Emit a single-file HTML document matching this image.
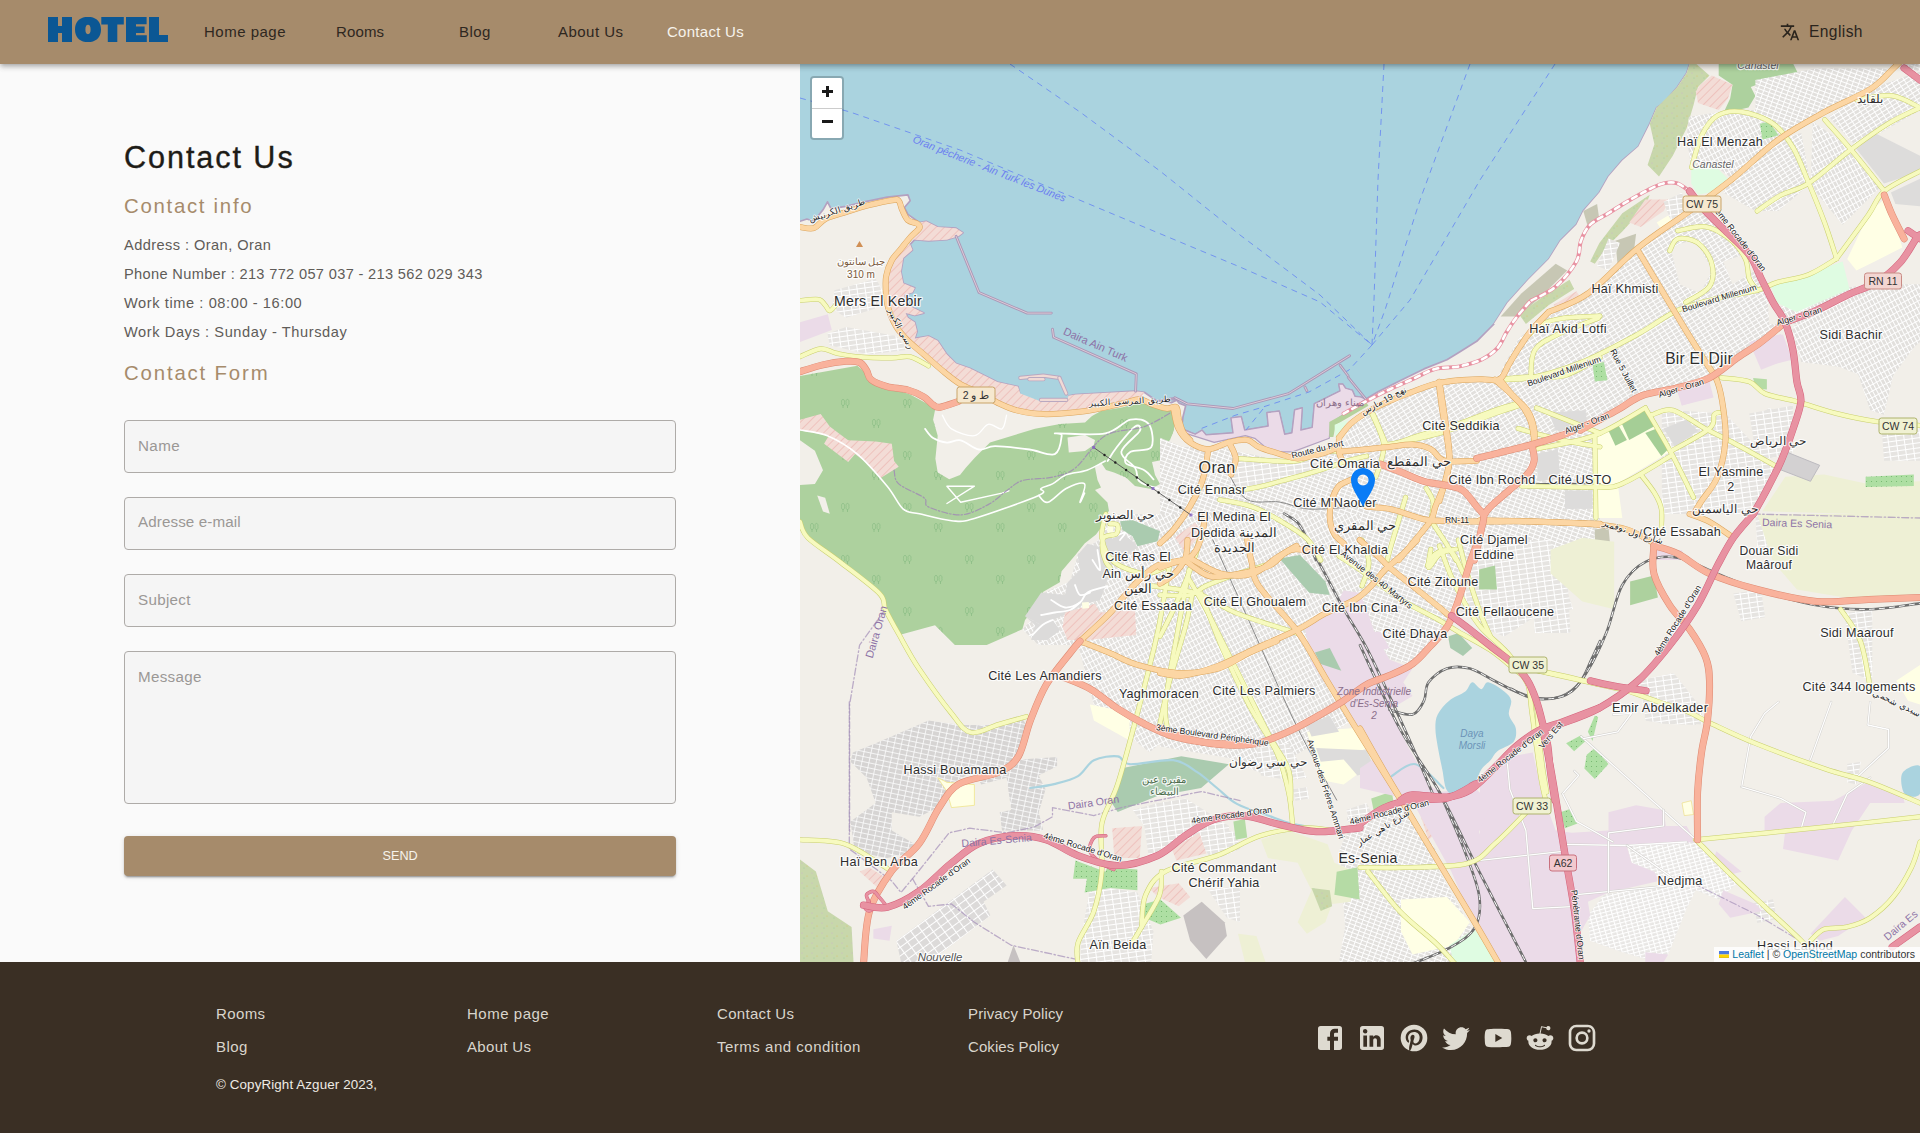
<!DOCTYPE html>
<html lang="en"><head><meta charset="utf-8"><title>Contact Us</title>
<style>
*{box-sizing:border-box;margin:0;padding:0}
html,body{width:1920px;height:1133px;overflow:hidden;background:#fafafa;font-family:"Liberation Sans",sans-serif;}
.abs{position:absolute;white-space:pre;line-height:1;}
#hdr{position:absolute;left:0;top:0;width:1920px;height:64px;background:#a68b6b;z-index:10;box-shadow:0 2px 4px -1px rgba(0,0,0,.2),0 4px 5px 0 rgba(0,0,0,.12),0 1px 8px 0 rgba(0,0,0,.1);}
#left{position:absolute;left:0;top:64px;width:800px;height:898px;background:#fafafa;}
#map{position:absolute;left:800px;top:64px;width:1120px;height:898px;background:#f2efe9;overflow:hidden;}
#ftr{position:absolute;left:0;top:962px;width:1920px;height:171px;background:#3a2f24;}
.nav{font-size:15px;color:#2e271f;top:24.100px}
.t{font-size:14.6px;color:#5f5c58;left:124px}
.h2{font-size:20.4px;color:#a68b6b;left:124px}
.fld{position:absolute;left:124px;width:552px;height:53px;border:1px solid #aeaba8;border-radius:4px;background:#f5f5f5}
.ph{font-size:15.2px;color:#9b9895;left:138px}
.fl{font-size:15px;color:#d9d5cc}
.ic{position:absolute;top:1022px;width:32px;height:32px;fill:#dedad0}
</style></head><body>
<div id="left"></div>
<div class="abs" style="left:124px;top:141.900px;font-size:30.600px;color:#1e1c17;letter-spacing:1.93px;-webkit-text-stroke:.35px #1e1c17">Contact Us</div>
<div class="abs h2" style="top:195.600px;letter-spacing:1.71px">Contact info</div>
<div class="abs t" style="top:238.400px;letter-spacing:.43px">Address : Oran, Oran</div>
<div class="abs t" style="top:267.400px;letter-spacing:.34px">Phone Number : 213 772 057 037 - 213 562 029 343</div>
<div class="abs t" style="top:296.400px;letter-spacing:.59px">Work time : 08:00 - 16:00</div>
<div class="abs t" style="top:325.400px;letter-spacing:.59px">Work Days : Sunday - Thursday</div>
<div class="abs h2" style="top:363.100px;letter-spacing:1.83px">Contact Form</div>
<div class="fld" style="top:420px"></div><div class="abs ph" style="top:438.100px;letter-spacing:.39px">Name</div>
<div class="fld" style="top:497px"></div><div class="abs ph" style="top:514.300px;letter-spacing:.1px">Adresse e-mail</div>
<div class="fld" style="top:574px"></div><div class="abs ph" style="top:592.300px;letter-spacing:.3px">Subject</div>
<div class="fld" style="top:651px;height:153px"></div><div class="abs ph" style="top:669.400px;letter-spacing:.3px">Message</div>
<div style="position:absolute;left:124px;top:836px;width:552px;height:40px;background:#a68b6b;border-radius:4px;box-shadow:0 3px 1px -2px rgba(0,0,0,.2),0 2px 2px 0 rgba(0,0,0,.14),0 1px 5px 0 rgba(0,0,0,.12)"></div>
<div class="abs" style="left:382.500px;top:850.250px;font-size:12.700px;color:#f7f3ec;letter-spacing:0px">SEND</div>
<div id="map">
<svg style="position:absolute;left:0;top:0" width="1120" height="898" viewBox="800 64 1120 898" font-family="Liberation Sans, sans-serif">
<defs>
<pattern id="u1" width="5.800" height="3.900" patternUnits="userSpaceOnUse" patternTransform="rotate(20)"><rect width="5.800" height="3.900" fill="#e2e0dd"/><path d="M0 0H5.800M0 0V3.900" stroke="#fff" stroke-width="1.900"/></pattern>
<pattern id="u2" width="6" height="3.900" patternUnits="userSpaceOnUse" patternTransform="rotate(-32)"><rect width="6" height="3.900" fill="#e2e0dd"/><path d="M0 0H6M0 0V3.900" stroke="#fff" stroke-width="1.900"/></pattern>
<pattern id="u3" width="5.800" height="3.900" patternUnits="userSpaceOnUse" patternTransform="rotate(62)"><rect width="5.800" height="3.900" fill="#e2e0dd"/><path d="M0 0H5.800M0 0V3.900" stroke="#fff" stroke-width="1.900"/></pattern>
<pattern id="u4" width="8" height="5" patternUnits="userSpaceOnUse" patternTransform="rotate(-8)"><rect width="8" height="5" fill="#e6e4e1"/><path d="M0 0H8M0 0V5" stroke="#fff" stroke-width="2"/></pattern>
<pattern id="u5" width="7" height="5" patternUnits="userSpaceOnUse" patternTransform="rotate(12)"><rect width="7" height="5" fill="#d6d4d3"/><path d="M0 0H7M0 0V5" stroke="#fff" stroke-width="1.500"/></pattern>
<pattern id="u6" width="9" height="7" patternUnits="userSpaceOnUse" patternTransform="rotate(-36)"><rect width="9" height="7" fill="#dcdad9"/><path d="M0 0H9M0 0V7" stroke="#fff" stroke-width="2.200"/></pattern>
<pattern id="or" width="5" height="5" patternUnits="userSpaceOnUse"><rect width="5" height="5" fill="#aedfa3"/><circle cx="1.500" cy="1.500" r=".55" fill="#6fb56a"/></pattern>
<pattern id="u7" width="5.500" height="3.600" patternUnits="userSpaceOnUse" patternTransform="rotate(-15)"><rect width="5.500" height="3.600" fill="#e8e6e4"/><path d="M0 0H5.500M0 0V3.600" stroke="#fff" stroke-width="2.200"/></pattern>
<pattern id="mil" width="6" height="6" patternUnits="userSpaceOnUse" patternTransform="rotate(45)"><rect width="6" height="6" fill="#f3dcd6"/><path d="M0 0V6" stroke="#eaa9a4" stroke-width="1"/></pattern>
<pattern id="tr" width="62" height="52" patternUnits="userSpaceOnUse"><g fill="none" stroke="#8fbe87" stroke-width="0.9"><path d="M6 12v-3M4.600 6.500a1.500 2.300 0 1 0 2.800 0a1.500 2.300 0 1 0 -2.800 0M10.500 12v-3M9.100 6.500a1.500 2.300 0 1 0 2.800 0a1.500 2.300 0 1 0 -2.800 0"/><path transform="translate(14 17)" d="M23 27v-3M21.600 21.500a1.500 2.300 0 1 0 2.800 0a1.500 2.300 0 1 0 -2.800 0M27.500 27v-3M26.100 21.500a1.500 2.300 0 1 0 2.800 0a1.500 2.300 0 1 0 -2.800 0"/></g></pattern>
<pattern id="sc" width="10" height="10" patternUnits="userSpaceOnUse"><rect width="10" height="10" fill="#c8d7ab"/><circle cx="2" cy="3" r=".6" fill="#c9b8c8"/><circle cx="7" cy="6" r=".6" fill="#d9c76a"/><circle cx="4" cy="8" r=".6" fill="#9ccf9c"/></pattern>
</defs>
<rect x="800" y="64" width="1120" height="898" fill="#f2efe9"/>
<path d="M794.0 58.0 L794.0 221.3 L800.0 221.3 L806.9 219.0 L813.8 221.3 L823.0 209.8 L827.5 201.8 L831.0 208.7 L845.9 206.4 L864.3 201.8 L887.2 197.2 L907.9 194.9 L910.2 200.7 L904.4 207.5 L907.9 214.4 L919.4 222.5 L926.2 221.3 L937.7 227.1 L956.1 228.2 L963.0 232.8 L958.4 236.2 L946.9 239.7 L928.5 240.8 L914.8 239.7 L910.2 244.3 L912.5 250.0 L903.3 258.0 L901.0 271.8 L903.3 283.3 L914.8 287.9 L912.5 292.5 L904.4 294.8 L905.6 303.9 L923.9 313.1 L914.8 315.4 L905.6 313.1 L907.9 317.7 L914.8 322.3 L917.1 331.5 L914.8 338.4 L928.5 336.1 L937.7 340.7 L946.9 354.4 L956.1 363.6 L969.8 368.2 L985.9 376.2 L997.4 382.0 L1018.0 386.6 L1019.9 394.6 L1026.1 400.8 L1038.7 406.1 L1054.8 407.2 L1067.4 403.8 L1069.0 395.8 L1075.4 394.6 L1135.1 391.2 L1144.3 392.3 L1155.8 400.3 L1171.8 402.6 L1178.7 399.2 L1160.0 400.4 L1174.9 397.7 L1179.0 403.1 L1185.7 405.8 L1183.0 416.7 L1181.7 428.9 L1195.2 434.3 L1202.0 430.2 L1206.0 434.9 L1233.1 432.9 L1231.1 418.0 L1241.2 416.7 L1244.6 430.2 L1268.3 426.1 L1267.0 412.6 L1279.2 411.2 L1284.6 434.3 L1292.0 432.9 L1294.7 409.9 L1302.2 407.9 L1300.8 430.2 L1312.3 427.5 L1314.4 403.8 L1340.1 390.9 L1338.8 384.2 L1342.8 384.2 L1345.5 388.2 L1352.3 390.3 L1355.0 396.4 L1360.4 397.0 L1365.8 399.1 L1378.0 391.8 L1401.0 380.3 L1424.0 368.9 L1446.9 359.7 L1458.4 352.8 L1476.7 341.3 L1490.5 327.5 L1493.8 324.1 L1507.5 302.7 L1528.2 279.8 L1548.9 259.1 L1560.3 240.7 L1576.4 224.7 L1583.3 210.9 L1599.4 192.5 L1608.5 176.5 L1622.3 160.4 L1638.4 146.6 L1649.8 123.7 L1656.7 107.6 L1663.6 103.0 L1677.4 87.0 L1686.6 73.2 L1691.2 59.4 L1694.0 58.0Z" fill="#aad3df" stroke="#b3a1c0" stroke-width="1.7" stroke-linejoin="round"/>
<path d="M1180.3 431.6 L1181.7 428.9 L1195.2 434.3 L1202.0 430.2 L1206.0 434.9 L1233.1 432.9 L1231.1 418.0 L1241.2 416.7 L1244.6 430.2 L1268.3 426.1 L1267.0 412.6 L1279.2 411.2 L1284.6 434.3 L1292.0 432.9 L1294.7 409.9 L1302.2 407.9 L1300.8 430.2 L1312.3 427.5 L1314.4 403.8 L1340.1 390.9 L1338.8 384.2 L1342.8 384.2 L1345.5 388.2 L1352.3 390.3 L1355.0 396.4 L1360.4 397.0 L1365.8 399.1 L1330.6 423.4 L1329.3 438.3 L1292.7 451.9 L1271.0 451.9 L1254.8 438.3 L1245.3 435.6 L1214.2 442.4Z" fill="#ebdbe8" stroke="#b3a1c0" stroke-width="1.2" stroke-linejoin="round"/>
<path d="M1329.3 422.1 L1365.8 401.8 L1368.5 405.8 L1336.0 424.8 L1333.3 437.0 L1329.3 437.0Z" fill="#b5d29c" />
<path d="M1334.7 424.8 L1348.2 419.4 L1340.1 435.6 L1334.7 437.0Z" fill="#dffce2" />
<path d="M1160.0 405.8 L1168.1 405.8 L1173.5 414.0 L1172.9 432.9 L1165.4 446.5 L1160.0 451.9Z" fill="#add19e" />
<path d="M919.4 222.5 L926.2 221.3 L937.7 227.1 L956.1 228.2 L963.0 232.8 L958.4 236.2 L946.9 239.7 L928.5 240.8 L914.8 239.7 L910.2 237.4 L919.4 228.2Z" fill="url(#mil)" />
<path d="M910.2 244.3 L912.5 250.0 L903.3 258.0 L901.0 271.8 L903.3 283.3 L914.8 287.9 L912.5 292.5 L904.4 294.8 L905.6 303.9 L923.9 313.1 L914.8 315.4 L905.6 313.1 L907.9 317.7 L914.8 322.3 L917.1 331.5 L914.8 338.4 L928.5 336.1 L937.7 340.7 L946.9 354.4 L956.1 363.6 L969.8 368.2 L985.9 376.2 L997.4 382.0 L1018.0 386.6 L1020.3 393.5 L1041.0 401.5 L1066.2 401.5 L1068.5 395.8 L1075.4 394.6 L1135.1 391.2 L1144.3 392.3 L1139.7 399.2 L1125.9 402.6 L1105.3 407.2 L1080.0 411.8 L1043.3 414.1 L1018.0 410.7 L999.7 403.8 L981.3 393.5 L960.7 384.3 L942.3 370.5 L923.9 354.4 L907.9 340.7 L896.4 326.9 L888.4 308.5 L886.1 294.8 L886.1 276.4 L891.8 260.3 L901.0 248.9Z" fill="url(#mil)" />
<path d="M800.0 376.0 L857.4 365.7 L866.6 373.8 L875.7 383.0 L910.2 394.4 L935.4 408.2 L933.1 419.7 L937.7 435.7 L935.4 458.7 L937.7 472.5 L949.2 479.3 L960.0 475.0 L966.0 467.5 L975.0 457.5 L990.0 442.5 L1035.0 428.8 L1060.0 424.0 L1085.0 422.5 L1092.0 416.0 L1101.0 411.0 L1122.0 407.5 L1135.0 404.0 L1147.5 403.0 L1160.0 409.0 L1172.5 408.8 L1175.0 415.0 L1174.0 430.0 L1170.0 440.0 L1160.0 450.0 L1162.0 460.0 L1152.0 462.0 L1155.0 475.0 L1160.0 484.0 L1151.0 489.0 L1135.0 486.0 L1126.0 477.5 L1114.0 472.5 L1106.0 470.0 L1101.0 462.5 L1095.0 467.5 L1097.5 480.0 L1101.0 487.5 L1095.0 490.0 L1107.5 502.5 L1109.0 511.0 L1100.0 520.0 L1103.0 525.0 L1096.0 534.4 L1084.6 543.6 L1075.4 555.0 L1061.6 571.2 L1059.4 582.6 L1043.3 591.8 L1038.7 603.3 L1025.0 620.0 L1022.4 629.2 L986.7 645.1 L954.9 645.1 L935.0 625.2 L899.3 635.1 L885.4 609.3 L879.4 593.4 L839.7 561.7 L807.9 537.8 L800.0 525.9 L800.0 520.7 L800.0 485.1 L814.9 483.9 L823.0 470.2 L814.9 450.7 L800.0 440.3Z" fill="#add19e"/>
<path d="M800.0 376.0 L857.4 365.7 L866.6 373.8 L875.7 383.0 L910.2 394.4 L935.4 408.2 L933.1 419.7 L937.7 435.7 L935.4 458.7 L937.7 472.5 L949.2 479.3 L960.0 475.0 L966.0 467.5 L975.0 457.5 L990.0 442.5 L1035.0 428.8 L1060.0 424.0 L1085.0 422.5 L1092.0 416.0 L1101.0 411.0 L1122.0 407.5 L1135.0 404.0 L1147.5 403.0 L1160.0 409.0 L1172.5 408.8 L1175.0 415.0 L1174.0 430.0 L1170.0 440.0 L1160.0 450.0 L1162.0 460.0 L1152.0 462.0 L1155.0 475.0 L1160.0 484.0 L1151.0 489.0 L1135.0 486.0 L1126.0 477.5 L1114.0 472.5 L1106.0 470.0 L1101.0 462.5 L1095.0 467.5 L1097.5 480.0 L1101.0 487.5 L1095.0 490.0 L1107.5 502.5 L1109.0 511.0 L1100.0 520.0 L1103.0 525.0 L1096.0 534.4 L1084.6 543.6 L1075.4 555.0 L1061.6 571.2 L1059.4 582.6 L1043.3 591.8 L1038.7 603.3 L1025.0 620.0 L1022.4 629.2 L986.7 645.1 L954.9 645.1 L935.0 625.2 L899.3 635.1 L885.4 609.3 L879.4 593.4 L839.7 561.7 L807.9 537.8 L800.0 525.9 L800.0 520.7 L800.0 485.1 L814.9 483.9 L823.0 470.2 L814.9 450.7 L800.0 440.3Z" fill="url(#tr)"/>
<path d="M800.0 419.7 L820.7 413.9 L829.8 426.6 L839.0 433.4 L848.2 440.3 L875.7 441.5 L891.8 443.8 L894.1 461.0 L898.7 466.7 L880.3 478.2 L864.3 461.0 L855.1 454.1 L848.2 462.1 L824.1 443.8 L828.7 435.7 L800.0 430.0Z" fill="url(#mil)" />
<path d="M1067.5 437.5 L1085.0 435.0 L1095.0 440.0 L1093.8 445.0 L1085.0 451.0 L1068.8 452.5Z" fill="#f2efe9" />
<path d="M800.0 430.0 C804.6 431.0 818.0 431.7 827.5 435.7 C837.1 439.8 847.4 445.7 857.4 454.1 C867.3 462.5 879.6 477.1 887.2 486.2 C894.9 495.4 897.9 504.6 903.3 509.2 C908.6 513.8 911.3 511.9 919.4 513.8 C927.4 515.7 942.3 519.9 951.5 520.7 C960.7 521.4 959.9 522.6 974.4 518.4 C989.0 514.2 1027.6 500.4 1038.7 495.4 C1049.8 490.4 1038.7 490.4 1041.0 488.5 C1043.3 486.6 1048.3 486.2 1052.5 483.9 C1056.7 481.6 1060.5 477.1 1066.2 474.8 C1072.0 472.5 1080.4 472.5 1086.9 470.2 C1093.4 467.9 1102.2 462.5 1105.3 461.0" fill="none" stroke="#fff" stroke-width="1.6" stroke-linecap="round" stroke-linejoin="round" />
<path d="M946.9 503.5 L974.4 486.2 L946.9 486.2 L960.7 502.3 L1002.0 493.1 L1008.9 490.8" fill="none" stroke="#fff" stroke-width="1.4" stroke-linecap="round" stroke-linejoin="round" />
<path d="M925.1 428.9 C926.4 430.4 929.5 435.7 933.1 438.0 C936.8 440.3 942.3 442.2 946.9 442.6 C951.5 443.0 955.3 439.2 960.7 440.3 C966.0 441.5 973.3 448.6 979.0 449.5 C984.8 450.5 986.7 446.1 995.1 446.1 C1003.5 446.1 1019.6 448.2 1029.5 449.5 C1039.5 450.9 1049.4 456.4 1054.8 454.1 C1060.1 451.8 1061.3 439.2 1061.7 435.7 C1062.0 432.3 1049.8 433.8 1057.1 433.4 C1064.3 433.1 1093.0 435.7 1105.3 433.4 C1117.5 431.2 1123.2 421.2 1130.5 419.7 C1137.8 418.1 1145.4 419.7 1148.9 424.3 C1152.3 428.9 1154.2 442.6 1151.2 447.2 C1148.1 451.8 1134.7 449.1 1130.5 451.8 C1126.3 454.5 1123.6 460.2 1125.9 463.3 C1128.2 466.3 1139.7 467.5 1144.3 470.2 C1148.9 472.8 1151.9 477.8 1153.5 479.4" fill="none" stroke="#fff" stroke-width="1.8" stroke-linecap="round" stroke-linejoin="round" />
<path d="M1107.6 461.0 C1109.1 458.7 1112.2 453.0 1116.7 447.2 C1121.3 441.5 1131.3 429.2 1135.1 426.6 C1138.9 423.9 1142.0 426.9 1139.7 431.2 C1137.4 435.4 1122.1 445.7 1121.3 451.8 C1120.6 457.9 1132.0 462.9 1135.1 467.9 C1138.2 472.8 1135.9 478.2 1139.7 481.6 C1143.5 485.1 1155.0 487.4 1158.1 488.5" fill="none" stroke="#fff" stroke-width="1.8" stroke-linecap="round" stroke-linejoin="round" />
<path d="M1038.7 495.4 C1040.2 496.6 1043.3 503.5 1047.9 502.3 C1052.5 501.2 1060.1 491.6 1066.2 488.5 C1072.4 485.5 1082.3 481.6 1084.6 483.9 C1086.9 486.2 1080.0 500.8 1080.0 502.3 C1080.0 503.8 1083.8 494.7 1084.6 493.1" fill="none" stroke="#fff" stroke-width="1.6" stroke-linecap="round" stroke-linejoin="round" />
<path d="M942.3 415.1 C943.8 417.4 946.1 425.4 951.5 428.9 C956.8 432.3 968.3 436.5 974.4 435.7 C980.6 435.0 983.6 425.4 988.2 424.3 C992.8 423.1 998.9 430.4 1002.0 428.9 C1005.0 427.3 1005.8 417.4 1006.6 415.1" fill="none" stroke="#fff" stroke-width="1.3" stroke-linecap="round" stroke-linejoin="round" />
<path d="M894.1 470.2 C894.9 472.5 893.7 479.4 898.7 483.9 C903.7 488.5 919.0 493.9 923.9 497.7 C928.9 501.5 922.4 504.0 928.5 506.9 C934.7 509.8 950.7 515.3 960.7 514.9 C970.6 514.5 980.6 508.6 988.2 504.6 C995.9 500.6 1000.8 494.8 1006.6 490.8 C1012.3 486.8 1015.0 482.8 1022.6 480.5 C1030.3 478.2 1043.7 479.2 1052.5 477.1 C1061.3 475.0 1066.6 474.8 1075.4 467.9 C1084.2 461.0 1093.8 442.6 1105.3 435.7 C1116.7 428.9 1132.4 431.0 1144.3 426.6 C1156.1 422.2 1171.1 412.2 1176.4 409.3" fill="none" stroke="#9f86b5" stroke-width="1.2" stroke-linecap="round" stroke-linejoin="round" stroke-dasharray="6 2 1.500 2" stroke-opacity=".8"/>
<path d="M817.2 495.4 L825.2 497.7 L829.8 513.8 L823.0 511.5Z" fill="#f2efe9" />
<path d="M800.0 859.5 L815.9 871.4 L827.8 911.2 L851.6 927.0 L853.6 964.0 L800.0 964.0Z" fill="url(#sc)" />
<path d="M1160.0 437.7 L1183.0 446.9 L1217.4 446.9 L1270.2 458.4 L1302.3 456.1 L1334.4 449.2 L1366.6 451.5 L1389.5 446.9 L1435.4 449.2 L1481.3 460.7 L1531.8 446.9 L1600.0 428.5 L1600.0 560.1 L1160.0 560.1Z" fill="url(#u1)" />
<path d="M1348.2 428.5 L1366.6 414.8 L1389.5 403.3 L1435.4 387.2 L1499.7 382.6 L1527.2 410.2 L1534.1 442.3 L1481.3 458.4 L1435.4 446.9 L1389.5 444.6 L1366.6 449.2 L1343.6 446.9Z" fill="url(#u3)" />
<path d="M1235.7 460.7 L1320.7 458.4 L1348.2 465.3 L1320.7 474.4 L1251.8 490.5 L1228.9 483.6Z" fill="url(#u4)" />
<path d="M827.5 333.8 L845.9 326.9 L896.4 336.1 L907.9 349.8 L868.9 354.4 L829.8 345.3Z" fill="url(#u4)" />
<path d="M834.4 290.2 L875.7 278.7 L882.6 290.2 L875.7 308.5 L845.9 317.7 L832.1 308.5Z" fill="url(#u4)" />
<path d="M1495.0 381.7 L1518.9 338.0 L1558.6 308.3 L1614.2 268.5 L1638.0 250.7 L1689.6 222.9 L1717.4 234.8 L1761.1 278.5 L1781.0 322.2 L1737.3 357.9 L1709.5 377.8 L1677.7 387.7 L1638.0 395.6 L1582.4 429.4 L1534.8 445.3 L1439.4 457.2 L1360.0 461.2 L1360.0 421.4 L1399.7 393.6 L1439.4 383.7Z" fill="url(#u2)" />
<path d="M1360.0 461.2 L1534.8 445.3 L1582.4 431.4 L1594.3 514.0 L1360.0 514.0Z" fill="url(#u1)" />
<path d="M1661.8 409.5 L1725.4 413.5 L1777.0 469.1 L1757.2 514.0 L1661.8 514.0Z" fill="url(#u4)" />
<path d="M1677.7 107.7 L1717.4 111.7 L1757.2 103.7 L1788.9 107.7 L1790.9 139.5 L1757.2 163.3 L1717.4 195.1 L1691.6 183.1 L1689.6 143.4Z" fill="url(#u3)" />
<path d="M1792.9 64.0 L1920.0 64.0 L1920.0 103.7 L1888.2 123.6 L1852.5 143.4 L1824.7 119.6 L1796.9 87.8Z" fill="url(#u2)" />
<path d="M1816.7 155.3 L1852.5 151.4 L1876.3 187.1 L1832.6 222.9 L1812.8 183.1Z" fill="url(#u3)" />
<path d="M1856.5 143.4 L1892.2 127.5 L1920.0 143.4 L1920.0 195.1 L1888.2 187.1Z" fill="#dddcdb" />
<path d="M1792.9 326.1 L1856.5 306.3 L1920.0 286.4 L1920.0 342.0 L1876.3 381.7 L1836.6 365.8 L1796.9 350.0Z" fill="url(#u3)" />
<path d="M1749.2 413.5 L1792.9 405.6 L1792.9 453.2 L1757.2 461.2Z" fill="url(#u4)" />
<path d="M1761.1 167.3 L1808.8 143.4 L1812.8 183.1 L1777.0 199.0Z" fill="url(#u4)" />
<path d="M1709.5 199.0 L1757.2 163.3 L1761.1 207.0 L1749.2 250.7 L1717.4 230.8Z" fill="url(#u2)" />
<path d="M1160.0 540.0 L1306.9 540.0 L1343.6 608.9 L1306.9 627.2 L1309.2 650.2 L1320.7 677.7 L1343.6 705.3 L1352.8 723.6 L1320.7 746.6 L1334.4 783.3 L1288.5 783.3 L1251.8 769.5 L1228.9 758.0 L1160.0 746.6Z" fill="url(#u3)" />
<path d="M1320.7 540.0 L1479.0 540.0 L1456.1 606.6 L1430.8 645.6 L1412.5 663.9 L1389.5 659.4 L1375.8 636.4 L1366.6 608.9 L1359.7 592.8 L1343.6 590.5Z" fill="url(#u1)" />
<path d="M1481.3 540.0 L1550.2 540.0 L1573.1 608.9 L1536.4 615.7 L1504.3 636.4 L1481.3 627.2 L1458.4 608.9Z" fill="url(#u4)" />
<path d="M1105.8 514.0 L1360.0 514.0 L1360.0 823.8 L1316.3 815.8 L1296.5 768.2 L1236.9 752.3 L1169.4 736.4 L1149.5 752.3 L1129.6 736.4 L1093.9 704.6 L1078.0 645.1 L1038.3 645.1 L1022.4 629.2 L1038.3 613.3 L1042.3 593.4 L1070.1 581.5 L1078.0 553.7 L1101.8 537.8Z" fill="url(#u3)" />
<path d="M852.8 752.5 L875.7 743.3 L928.5 720.4 L960.7 725.0 L990.5 725.0 L1020.3 715.8 L1029.5 729.5 L1020.3 759.4 L1057.1 757.1 L1057.1 766.3 L1038.7 775.4 L1045.6 789.2 L1038.7 812.2 L1043.3 830.5 L1002.0 830.5 L999.7 812.2 L1011.2 809.9 L1006.6 777.7 L981.3 784.6 L974.4 770.9 L949.2 784.6 L937.7 807.6 L919.4 816.8 L891.8 812.2 L891.8 830.5 L914.8 844.3 L907.9 853.5 L887.2 858.1 L855.1 853.5 L850.5 821.4 L875.7 803.0 L866.6 777.7 L850.5 761.7Z" fill="url(#u5)" />
<path d="M896.4 940.7 L992.8 869.6 L1006.6 885.6 L983.6 901.7 L990.5 915.5 L942.3 952.2 L928.5 962.1 L901.0 962.1Z" fill="url(#u6)" />
<path d="M1132.8 809.9 L1158.1 803.0 L1185.6 798.4 L1204.0 809.9 L1236.1 830.5 L1240.0 848.9 L1213.1 860.4 L1204.0 848.9 L1199.4 832.8 L1171.8 848.9 L1148.9 858.1 L1144.3 825.9Z" fill="url(#u4)" />
<path d="M1089.2 892.5 L1109.9 887.9 L1137.4 892.5 L1153.5 931.5 L1151.2 962.1 L1080.0 962.1 L1082.3 931.5Z" fill="url(#u4)" />
<path d="M1208.6 890.2 L1240.0 885.6 L1240.0 922.3 L1226.9 917.8Z" fill="url(#u4)" />
<path d="M1340.1 863.5 L1360.0 855.6 L1360.0 964.0 L1348.1 964.0Z" fill="url(#u1)" />
<path d="M1112.2 828.2 L1142.0 825.9 L1139.7 858.1 L1114.4 858.1Z" fill="url(#mil)" />
<path d="M1171.8 848.9 L1199.4 832.8 L1206.3 853.5 L1176.4 860.4Z" fill="url(#mil)" />
<path d="M1148.9 887.9 L1178.7 883.3 L1190.2 897.1 L1178.7 906.3 L1158.1 897.1Z" fill="url(#mil)" />
<path d="M859.7 871.8 L868.9 867.3 L887.2 878.7 L878.0 887.9Z" fill="url(#mil)" />
<path d="M1360.0 819.8 L1403.7 811.9 L1439.4 871.4 L1491.1 964.0 L1360.0 964.0Z" fill="url(#u1)" />
<path d="M1626.9 844.3 L1695.8 839.7 L1732.5 876.4 L1737.1 883.3 L1718.7 899.4 L1695.8 890.2 L1686.6 908.6 L1668.2 954.5 L1645.3 959.1 L1622.3 952.2 L1590.2 940.7 L1587.9 915.5 L1603.9 894.8 L1659.0 885.6 L1654.4 871.8 L1631.5 862.7Z" fill="url(#u7)" />
<path d="M1645.3 708.9 L1677.4 706.6 L1700.3 715.8 L1695.8 725.0 L1663.6 723.8 L1645.3 720.4Z" fill="url(#u4)" />
<path d="M1847.2 764.0 L1861.0 761.7 L1856.4 784.6 L1847.2 782.3Z" fill="url(#u4)" />
<path d="M1755.4 910.9 L1769.2 906.3 L1773.8 917.8 L1760.0 922.3Z" fill="url(#u4)" />
<path d="M1638.0 680.8 L1673.8 672.9 L1701.6 708.6 L1701.6 724.5 L1646.0 720.5Z" fill="url(#u4)" />
<path d="M1530.8 569.6 L1566.5 561.7 L1570.5 633.1 L1534.8 633.1Z" fill="url(#u4)" />
<path d="M1844.5 613.3 L1872.3 609.3 L1872.3 680.8 L1852.5 672.9Z" fill="url(#u4)" />
<path d="M1733.3 593.4 L1761.1 589.5 L1765.1 617.3 L1741.3 621.2Z" fill="url(#u4)" />
<path d="M1753.2 903.2 L1773.0 899.2 L1777.0 919.1 L1757.2 923.1Z" fill="url(#u4)" />
<path d="M1493.8 324.1 L1507.5 302.7 L1528.2 279.8 L1548.9 259.1 L1560.3 240.7 L1576.4 224.7 L1583.3 210.9 L1599.4 192.5 L1608.5 176.5 L1622.3 160.4 L1638.4 146.6 L1649.8 123.7 L1656.7 107.6 L1663.6 103.0 L1677.4 87.0 L1686.6 73.2 L1691.2 59.4 L1920.0 59.4 L1920.0 324.1Z" fill="#f2efe9" />
<path d="M1691.2 59.4 L1709.5 75.5 L1698.0 87.0 L1693.5 105.3 L1686.6 128.3 L1672.8 155.8 L1659.0 176.5 L1647.6 165.0 L1654.4 144.3 L1649.8 123.7 L1656.7 107.6 L1677.4 87.0 L1686.6 73.2Z" fill="url(#sc)" />
<path d="M1718.7 61.7 L1792.2 61.7 L1801.3 80.1 L1769.2 80.1 L1750.8 87.0 L1755.4 96.1 L1748.5 107.6 L1723.3 113.3 L1730.2 98.4 L1732.5 84.7 L1718.7 75.5Z" fill="#add19e" />
<path d="M1700.3 84.7 L1711.8 75.5 L1732.5 84.7 L1727.9 98.4 L1718.7 109.9 L1698.0 103.0 L1695.8 91.5Z" fill="url(#mil)" />
<path d="M1583.3 210.9 L1597.1 204.0 L1599.4 220.1 L1587.9 227.0Z" fill="#c7c7b4" />
<path d="M1615.4 240.7 L1636.1 233.8 L1633.8 252.2 L1617.7 266.0Z" fill="#c7c7b4" />
<path d="M1500.7 316.5 L1521.3 293.5 L1555.7 263.7 L1567.2 270.6 L1544.3 293.5 L1519.0 316.5Z" fill="#c7c7b4" />
<path d="M1590.2 261.4 L1599.4 243.0 L1622.3 213.2 L1649.8 194.8 L1645.3 206.3 L1622.3 231.6 L1606.2 247.6 L1594.8 263.7Z" fill="url(#sc)" />
<path d="M1519.0 314.2 L1544.3 295.8 L1569.5 279.8 L1574.1 288.9 L1548.9 305.0 L1525.9 324.1Z" fill="url(#sc)" />
<path d="M1629.2 222.4 L1645.3 199.4 L1670.5 199.4 L1663.6 210.9 L1640.7 227.0Z" fill="url(#mil)" />
<path d="M1553.4 305.0 L1576.4 291.2 L1581.0 298.1 L1560.3 309.6Z" fill="url(#mil)" />
<path d="M1688.9 116.8 L1718.7 112.2 L1755.4 109.9 L1785.3 128.3 L1778.4 139.7 L1732.5 178.8 L1714.1 165.0 L1691.2 167.3 L1686.6 137.4Z" fill="url(#u3)" />
<path d="M1732.5 178.8 L1778.4 139.7 L1801.3 132.9 L1810.5 183.4 L1778.4 210.9 L1755.4 210.9 L1723.3 192.5Z" fill="url(#u2)" />
<path d="M1755.4 80.1 L1815.1 68.6 L1893.1 68.6 L1870.2 89.2 L1824.3 112.2 L1787.6 132.9 L1755.4 109.9Z" fill="url(#u1)" />
<path d="M1812.8 121.4 L1851.8 148.9 L1879.4 187.9 L1842.6 224.7 L1810.5 185.6Z" fill="url(#u3)" />
<path d="M1828.9 116.8 L1870.2 89.2 L1920.0 70.9 L1920.0 109.9 L1856.4 146.6Z" fill="url(#u2)" />
<path d="M1587.9 293.5 L1638.4 247.6 L1686.6 213.2 L1707.2 213.2 L1755.4 263.7 L1766.9 284.3 L1769.2 324.1 L1532.8 324.1Z" fill="url(#u2)" />
<path d="M1608.5 238.4 L1620.0 243.0 L1608.5 270.6 L1597.1 266.0Z" fill="url(#u4)" />
<path d="M1663.6 201.7 L1682.0 192.5 L1686.6 210.9 L1670.5 220.1Z" fill="url(#u4)" />
<path d="M1723.3 261.4 L1744.0 254.5 L1755.4 270.6 L1732.5 284.3Z" fill="#f2efe9" />
<path d="M1670.5 247.6 L1695.8 238.4 L1711.8 270.6 L1700.3 293.5 L1679.7 284.3Z" fill="#f2efe9" />
<path d="M1897.7 68.6 L1920.0 61.7 L1920.0 70.9Z" fill="url(#u1)" />
<path d="M1785.3 324.1 L1778.4 307.3 L1838.1 288.9 L1870.2 284.3 L1920.0 284.3 L1920.0 324.1Z" fill="url(#u3)" />
<path d="M1691.2 167.3 L1714.1 165.0 L1727.9 178.8 L1709.5 192.5 L1698.0 194.8 L1691.2 183.4Z" fill="#dffce2" />
<path d="M1847.2 259.1 L1870.2 210.9 L1884.0 199.4 L1895.4 224.7 L1902.3 247.6 L1874.8 261.4 L1856.4 270.6Z" fill="#ffffe5" />
<path d="M1771.5 286.6 L1842.6 261.4 L1849.5 288.9 L1796.7 311.9 L1776.1 302.7Z" fill="#dffce2" />
<path d="M1856.4 148.9 L1874.8 132.9 L1920.0 155.8 L1920.0 171.9 L1884.0 183.4Z" fill="#dddcdb" />
<path d="M1890.9 192.5 L1920.0 178.8 L1920.0 206.3 L1895.4 204.0Z" fill="#dddcdb" />
<path d="M1760.0 123.7 L1769.2 121.4 L1778.4 135.2 L1762.3 139.7Z" fill="url(#or)" />
<path d="M1656.7 222.4 L1668.2 215.5 L1672.8 222.4 L1661.3 229.3Z" fill="#ffffe5" />
<path d="M1288.5 759.4 L1359.7 715.8 L1389.5 770.9 L1403.3 809.9 L1366.6 805.3 L1348.2 812.2 L1343.6 839.7 L1288.5 830.5 L1261.0 839.7 L1228.9 830.5 L1228.9 793.8 L1256.4 777.7Z" fill="#f2efe9" />
<path d="M1256.4 747.9 L1288.5 743.3 L1306.9 777.7 L1288.5 780.0 L1261.0 775.4Z" fill="url(#u4)" />
<path d="M1293.1 789.2 L1306.9 786.9 L1309.2 798.4 L1295.4 800.7Z" fill="url(#u4)" />
<path d="M1345.9 809.9 L1366.6 803.0 L1373.5 816.8 L1350.5 821.4Z" fill="url(#u4)" />
<path d="M1348.2 830.5 L1366.6 816.8 L1403.3 809.9 L1435.4 848.9 L1440.0 876.4 L1435.4 899.4 L1398.7 904.0 L1412.5 922.3 L1389.5 962.1 L1339.0 962.1 L1348.2 908.6 L1366.6 876.4 L1339.0 851.2 L1343.6 839.7Z" fill="url(#u1)" />
<path d="M1401.0 899.4 L1446.9 897.1 L1469.9 922.3 L1453.8 945.3 L1412.5 954.5 L1401.0 931.5Z" fill="#ffffe5" />
<path d="M1306.9 731.8 L1364.3 727.2 L1366.6 747.9 L1343.6 759.4 L1362.0 770.9 L1343.6 784.6 L1320.7 780.0 L1311.5 747.9Z" fill="#ffffe5" />
<path d="M1306.9 725.0 L1329.8 715.8 L1339.0 731.8 L1311.5 736.4Z" fill="#dddcdb" />
<path d="M1316.1 747.9 L1366.6 750.2 L1375.8 770.9 L1357.4 775.4 L1343.6 759.4 L1320.7 761.7Z" fill="#dddcdb" />
<path d="M1261.0 839.7 L1288.5 830.5 L1327.6 844.3 L1334.4 862.7 L1355.1 871.8 L1350.5 901.7 L1332.1 904.0 L1325.3 922.3 L1306.9 933.8 L1297.7 922.3 L1311.5 890.2 L1297.7 862.7 L1267.9 858.1Z" fill="#eef0d5" />
<path d="M1238.0 933.8 L1256.4 936.1 L1265.6 962.1 L1244.9 962.1Z" fill="#eef0d5" />
<path d="M1336.7 871.8 L1357.4 867.3 L1359.7 899.4 L1334.4 894.8Z" fill="#b5dba5" />
<path d="M1311.5 887.9 L1329.8 890.2 L1332.1 906.3 L1320.7 910.9Z" fill="url(#sc)" />
<path d="M1449.2 945.3 L1474.4 929.2 L1492.8 952.2 L1495.1 962.1 L1453.8 962.1Z" fill="#dffce2" />
<path d="M1371.2 798.4 L1391.8 791.5 L1394.1 805.3 L1373.5 809.9Z" fill="#b5dba5" />
<path d="M1233.4 821.4 L1244.9 819.1 L1247.2 837.4 L1235.7 839.7Z" fill="#b5dba5" />
<path d="M1419.4 812.2 L1440.0 805.3 L1444.6 825.9 L1428.5 839.7Z" fill="url(#mil)" />
<path d="M1594.8 435.4 L1645.3 407.9 L1670.5 451.5 L1617.7 483.6 L1622.3 518.0 L1594.8 518.0Z" fill="#ffffe5" />
<path d="M1607.4 428.5 L1617.7 423.9 L1626.9 440.0 L1615.4 445.7Z" fill="#a5ce96" />
<path d="M1620.0 419.4 L1645.3 410.2 L1654.4 426.2 L1629.2 440.0Z" fill="#a5ce96" />
<path d="M1645.3 433.1 L1656.7 428.5 L1668.2 449.2 L1661.3 456.1Z" fill="#a5ce96" />
<path d="M1537.4 453.8 L1558.0 449.2 L1560.3 479.0 L1537.4 481.3Z" fill="#dddcdb" />
<path d="M1564.9 490.5 L1592.5 490.5 L1592.5 508.9 L1564.9 508.9Z" fill="#dddcdb" />
<path d="M1548.9 412.5 L1585.6 410.2 L1587.9 428.5 L1555.7 430.8Z" fill="#dddcdb" />
<path d="M1663.6 428.5 L1686.6 419.4 L1698.0 430.8 L1675.1 446.9Z" fill="#dddcdb" />
<path d="M1762.3 511.2 L1785.3 476.7 L1824.3 474.4 L1865.6 483.6 L1920.0 481.3 L1920.0 515.8Z" fill="#eef0d5" />
<path d="M1865.6 476.7 L1913.8 474.4 L1913.8 485.9 L1865.6 487.1Z" fill="url(#or)" />
<path d="M1785.3 451.5 L1819.7 465.3 L1810.5 481.3 L1780.7 469.8Z" fill="#d3d1d2" stroke="#bdbbc0" stroke-width="1"/>
<path d="M1750.8 419.4 L1769.2 407.9 L1785.3 414.8 L1785.3 446.9 L1755.4 437.7Z" fill="url(#u4)" />
<path d="M1792.2 329.8 L1824.3 313.8 L1920.0 306.9 L1920.0 339.0 L1893.1 375.7 L1884.0 414.8 L1870.2 410.2 L1856.4 368.9 L1801.3 362.0Z" fill="url(#u3)" />
<path d="M1881.7 428.5 L1920.0 423.9 L1920.0 460.7 L1884.0 460.7Z" fill="url(#u4)" />
<path d="M1755.4 515.8 L1773.8 513.5 L1778.4 552.5 L1757.7 552.5Z" fill="url(#u4)" />
<path d="M1750.8 343.6 L1783.0 334.4 L1792.2 359.7 L1764.6 366.6Z" fill="#ebdbe8" />
<path d="M1677.4 391.8 L1709.5 384.9 L1711.8 396.4 L1682.0 405.6Z" fill="#ebdbe8" />
<path d="M1654.4 550.2 L1682.0 550.2 L1684.3 560.1 L1656.7 560.1Z" fill="#ebdbe8" />
<path d="M1594.8 529.5 L1608.5 527.2 L1610.8 552.5 L1594.8 554.8Z" fill="#c7c7b4" />
<path d="M1753.1 378.0 L1766.9 379.2 L1766.9 389.5 L1755.4 388.4Z" fill="#b5dba5" />
<path d="M1592.5 364.3 L1603.9 362.0 L1607.4 380.3 L1594.8 381.5Z" fill="url(#or)" />
<path d="M1077.5 555.0 L1087.5 543.8 L1102.5 547.5 L1106.2 537.5 L1120.0 531.2 L1132.5 541.2 L1137.5 547.5 L1125.0 556.2 L1112.5 565.0 L1107.5 580.0 L1100.0 600.0 L1082.5 605.0 L1070.0 612.5 L1052.5 620.0 L1041.2 625.0 L1025.0 616.2 L1041.2 592.5 L1065.0 595.0 L1067.5 582.5 L1080.0 570.0Z" fill="#dcdbda" />
<path d="M1025.0 616.2 L1041.2 625.0 L1052.5 620.0 L1060.0 630.0 L1047.5 640.0 L1031.2 640.0 L1035.0 625.0Z" fill="#dcdbda" />
<path d="M1120.0 521.2 L1132.5 520.0 L1160.0 531.2 L1157.5 541.2 L1137.5 546.2 L1132.5 536.2 L1122.5 530.0Z" fill="#aacbaf" />
<path d="M1065.0 612.5 L1082.5 607.5 L1095.0 603.8 L1100.0 612.5 L1135.0 610.0 L1136.2 635.0 L1087.5 640.0 L1067.5 640.0 L1062.5 627.5Z" fill="url(#mil)" />
<path d="M1175.0 537.5 L1195.0 522.5 L1202.5 532.5 L1185.0 552.5Z" fill="url(#mil)" />
<path d="M1107.5 525.0 L1113.8 524.4 L1113.1 532.5 L1107.5 533.1Z" fill="#ffffe5" />
<path d="M1081.9 602.5 L1088.8 601.9 L1089.0 608.1 L1082.5 608.8Z" fill="#ffffe5" />
<path d="M1051.2 600.0 C1053.5 601.2 1060.2 607.1 1065.0 607.5 C1069.8 607.9 1076.2 605.0 1080.0 602.5 C1083.8 600.0 1082.9 595.2 1087.5 592.5 C1092.1 589.8 1104.2 587.3 1107.5 586.2" fill="none" stroke="#fff" stroke-width="1.8" stroke-linecap="round" stroke-linejoin="round" />
<path d="M1075.0 585.0 C1075.8 586.7 1077.5 593.8 1080.0 595.0 C1082.5 596.2 1088.3 592.9 1090.0 592.5" fill="none" stroke="#fff" stroke-width="1.8" stroke-linecap="round" stroke-linejoin="round" />
<path d="M1041.2 615.0 C1043.5 614.6 1050.2 613.3 1055.0 612.5 C1059.8 611.7 1065.8 611.7 1070.0 610.0 C1074.2 608.3 1078.3 603.8 1080.0 602.5" fill="none" stroke="#fff" stroke-width="1.8" stroke-linecap="round" stroke-linejoin="round" />
<path d="M1032.5 635.0 C1034.2 633.3 1039.2 627.5 1042.5 625.0 C1045.8 622.5 1050.8 620.8 1052.5 620.0" fill="none" stroke="#fff" stroke-width="1.8" stroke-linecap="round" stroke-linejoin="round" />
<path d="M1092.5 560.0 C1093.8 561.7 1099.2 571.7 1100.0 570.0 C1100.8 568.3 1097.9 553.3 1097.5 550.0" fill="none" stroke="#fff" stroke-width="1.8" stroke-linecap="round" stroke-linejoin="round" />
<path d="M1112.5 537.5 C1114.6 536.7 1123.8 532.1 1125.0 532.5 C1126.2 532.9 1120.8 538.8 1120.0 540.0" fill="none" stroke="#fff" stroke-width="1.8" stroke-linecap="round" stroke-linejoin="round" />
<path d="M1306.9 627.2 L1334.4 608.9 L1343.6 590.5 L1359.7 592.8 L1366.6 608.9 L1375.8 636.4 L1389.5 659.4 L1412.5 668.5 L1403.3 682.3 L1412.5 696.1 L1389.5 709.8 L1407.9 746.6 L1426.2 778.7 L1435.4 800.1 L1401.0 800.1 L1380.3 769.5 L1352.8 723.6 L1343.6 705.3 L1320.7 677.7 L1309.2 650.2Z" fill="#ebdbe8" />
<path d="M1362.0 631.8 L1380.3 631.8 L1389.5 647.9 L1373.5 652.5Z" fill="#ebdbe8" />
<path d="M1480.0 777.7 L1507.5 757.1 L1532.8 752.5 L1542.0 793.8 L1555.7 830.5 L1571.8 832.8 L1608.5 830.5 L1608.5 812.2 L1636.1 805.3 L1663.6 809.9 L1665.9 825.9 L1686.6 825.9 L1695.8 842.0 L1626.9 846.6 L1631.5 862.7 L1654.4 871.8 L1659.0 881.0 L1608.5 892.5 L1587.9 901.7 L1590.2 915.5 L1581.0 931.5 L1581.0 962.1 L1480.0 962.1Z" fill="#ebdbe8" />
<path d="M1764.6 816.8 L1780.7 803.0 L1833.5 800.7 L1867.9 782.3 L1902.3 793.8 L1904.6 803.0 L1870.2 803.0 L1851.8 830.5 L1838.1 860.4 L1783.0 848.9 L1785.3 830.5 L1764.6 830.5Z" fill="#ebdbe8" />
<path d="M1716.4 851.2 L1741.7 871.8 L1732.5 874.1 L1714.1 858.1Z" fill="#ebdbe8" />
<path d="M1718.7 904.0 L1723.3 890.2 L1755.4 904.0 L1762.3 910.9 L1730.2 917.8Z" fill="#ebdbe8" />
<path d="M1810.5 933.8 L1844.9 897.1 L1865.6 917.8 L1838.1 936.1 L1819.7 940.7Z" fill="#ebdbe8" />
<path d="M1645.3 952.2 L1668.2 954.5 L1663.6 962.1 L1645.3 962.1Z" fill="#ebdbe8" />
<path d="M1360.0 768.2 L1383.8 752.3 L1439.4 792.0 L1475.2 788.0 L1491.1 803.9 L1479.1 831.7 L1491.1 871.4 L1526.8 964.0 L1491.1 964.0 L1451.3 871.4 L1411.6 800.0 L1360.0 788.0Z" fill="#ebdbe8" />
<path d="M1749.2 342.0 L1781.0 334.1 L1790.9 357.9 L1761.1 369.8Z" fill="#ebdbe8" />
<path d="M1677.7 389.7 L1709.5 381.7 L1713.5 397.6 L1681.7 405.6Z" fill="#ebdbe8" />
<path d="M1304.4 625.2 L1360.0 601.4 L1360.0 680.8 L1332.2 688.8 L1312.3 664.9Z" fill="#ebdbe8" />
<path d="M800.0 322.2 L827.8 314.2 L831.8 330.1 L800.0 342.0Z" fill="#ebdbe8" />
<path d="M1121.7 768.2 L1181.3 756.3 L1228.9 764.2 L1201.1 788.0 L1157.4 796.0 L1117.7 811.9 L1109.8 800.0Z" fill="#aacbaf" />
<path d="M1279.4 558.4 L1300.0 554.9 L1325.3 581.3 L1329.8 595.1 L1309.2 592.8Z" fill="#aacbaf" />
<path d="M1314.9 652.5 L1329.8 647.9 L1341.3 670.8 L1320.7 663.9Z" fill="#aacbaf" />
<path d="M1448.1 636.4 L1458.4 633.0 L1472.2 647.9 L1463.0 655.9 L1450.3 647.9Z" fill="#aacbaf" />
<path d="M1075.4 860.4 L1105.3 871.8 L1107.6 867.3 L1137.4 869.6 L1137.4 890.2 L1109.9 887.9 L1084.6 892.5 L1086.9 878.7 L1073.1 878.7Z" fill="url(#or)" />
<path d="M1144.3 904.0 L1160.4 899.4 L1181.0 917.8 L1160.4 924.6 L1144.3 917.8Z" fill="url(#or)" />
<path d="M1630.1 581.5 L1653.9 575.6 L1657.9 597.4 L1630.1 605.3Z" fill="#add19e" />
<path d="M1479.1 569.6 L1495.0 565.6 L1497.0 589.5 L1479.1 589.5Z" fill="#add19e" />
<path d="M1183.3 915.5 L1201.7 901.7 L1224.6 922.3 L1226.9 936.1 L1206.3 959.1 L1190.2 940.7Z" fill="#c6c1c1" />
<path d="M1007.7 962.1 L1013.5 945.3 L1020.3 962.1Z" fill="#c6c1c1" />
<path d="M873.4 929.2 L891.8 925.8 L889.5 940.7 L873.4 938.4Z" fill="#ebdbe8" />
<path d="M1089.9 704.6 L1129.6 712.6 L1129.6 740.4 L1093.9 720.5Z" fill="#ffffe5" />
<path d="M937.7 777.7 L946.9 782.3 L974.4 784.6 L974.4 805.3 L951.5 807.6 L946.9 791.5Z" fill="#ffffe5" stroke="#f0e68c" stroke-width=".8"/>
<path d="M1896.2 680.8 L1920.0 664.9 L1920.0 704.6 L1908.1 700.7Z" fill="#ffffe5" />
<path d="M1566.1 743.3 L1581.0 735.3 L1585.6 741.0 L1574.1 751.3Z" fill="url(#or)" />
<path d="M1586.7 754.8 L1594.8 747.9 L1608.5 764.0 L1594.8 778.9 L1584.4 768.6Z" fill="url(#or)" />
<path d="M1560.3 812.2 L1570.7 808.7 L1577.5 823.6 L1564.9 828.2Z" fill="url(#or)" />
<path d="M1587.9 731.8 L1594.8 715.8 L1598.2 716.9 L1592.5 741.0Z" fill="url(#or)" />
<path d="M1480.0 931.5 L1489.2 940.7 L1496.1 962.1 L1480.0 962.1Z" fill="#dffce2" />
<path d="M1682.0 803.0 L1691.2 800.7 L1693.5 814.5 L1684.3 815.6Z" fill="#ffffe5" stroke="#eee08a" stroke-width=".7"/>
<path d="M1902.3 773.2 C1904.9 768.6 1917.1 762.8 1920.0 766.3 C1922.9 769.7 1922.6 789.2 1920.0 793.8 C1917.4 798.4 1907.6 797.3 1904.6 793.8 C1901.7 790.4 1899.8 777.7 1902.3 773.2Z" fill="#aad3df" />
<path d="M1757.2 514.0 L1920.0 514.0 L1920.0 593.4 L1856.5 599.4 L1796.9 589.5 L1773.0 561.7Z" fill="#eef0d5" />
<path d="M1550.6 549.7 L1582.4 537.8 L1614.2 541.8 L1614.2 609.3 L1582.4 601.4 L1550.6 573.6Z" fill="#eef0d5" />
<path d="M1437.7 714.4 C1440.0 709.8 1444.6 704.5 1449.2 700.7 C1453.8 696.8 1461.4 694.5 1465.3 691.5 C1469.1 688.4 1469.5 682.7 1472.2 682.3 C1474.8 681.9 1478.7 689.2 1481.3 689.2 C1484.0 689.2 1484.4 681.9 1488.2 682.3 C1492.0 682.7 1500.5 688.4 1504.3 691.5 C1508.1 694.5 1510.4 696.8 1511.2 700.7 C1511.9 704.5 1508.1 709.8 1508.9 714.4 C1509.6 719.0 1515.0 723.6 1515.8 728.2 C1516.5 732.8 1516.5 738.2 1513.5 742.0 C1510.4 745.8 1501.2 748.1 1497.4 751.2 C1493.6 754.2 1493.2 757.3 1490.5 760.3 C1487.8 763.4 1484.4 764.9 1481.3 769.5 C1478.3 774.1 1476.0 783.7 1472.2 787.9 C1468.3 792.1 1462.6 794.4 1458.4 794.8 C1454.2 795.2 1449.6 794.4 1446.9 790.2 C1444.2 786.0 1443.8 776.8 1442.3 769.5 C1440.8 762.3 1438.9 753.5 1437.7 746.6 C1436.6 739.7 1435.4 733.6 1435.4 728.2 C1435.4 722.9 1435.4 719.0 1437.7 714.4Z" fill="#aad3df" />
<path d="M1030.4 788.0 C1034.3 787.4 1046.2 786.1 1054.2 784.1 C1062.1 782.1 1071.4 780.1 1078.0 776.1 C1084.6 772.2 1087.3 763.6 1093.9 760.2 C1100.5 756.9 1111.8 755.6 1117.7 756.3 C1123.7 756.9 1120.4 763.6 1129.6 764.2 C1138.9 764.9 1162.1 758.9 1173.3 760.2 C1184.6 761.6 1189.9 767.5 1197.2 772.2 C1204.4 776.8 1210.4 782.7 1217.0 788.0 C1223.6 793.3 1228.3 799.3 1236.9 803.9 C1245.5 808.6 1259.4 812.5 1268.7 815.8 C1277.9 819.2 1282.6 821.5 1292.5 823.8 C1302.4 826.1 1322.3 828.8 1328.2 829.7" fill="none" stroke="#aad3df" stroke-width="2.2" stroke-linecap="round" stroke-linejoin="round" />
<path d="M1391.8 776.1 C1395.7 774.1 1407.0 762.2 1415.6 764.2 C1424.2 766.2 1438.8 784.1 1443.4 788.0" fill="none" stroke="#aad3df" stroke-width="2.2" stroke-linecap="round" stroke-linejoin="round" />
<path d="M849.3 702.0 L849.3 848.9 L891.8 881.0 L901.0 892.5 L912.5 878.7 L949.2 832.8 L969.8 828.2 L1006.6 832.8 L1034.1 827.1 L1052.5 816.8 L1052.5 807.6 L1093.8 815.6 L1121.3 807.6 L1201.7 791.5 L1240.0 800.7" fill="none" stroke="#a894bb" stroke-width="1.3" stroke-linecap="round" stroke-linejoin="round" stroke-dasharray="7 2.500 1.500 2.500" stroke-opacity=".75"/>
<path d="M912.5 878.7 L928.5 906.3 L951.5 904.0 L974.4 922.3 L1011.2 945.3 L1075.4 959.1" fill="none" stroke="#a894bb" stroke-width="1.3" stroke-linecap="round" stroke-linejoin="round" stroke-dasharray="7 2.500 1.500 2.500" stroke-opacity=".75"/>
<path d="M885.4 609.3 L859.6 645.1 L849.6 704.6 L849.6 831.7" fill="none" stroke="#a894bb" stroke-width="1.3" stroke-linecap="round" stroke-linejoin="round" stroke-dasharray="7 2.500 1.500 2.500" stroke-opacity=".75"/>
<path d="M1753.2 514.0 L1920.0 518.0" fill="none" stroke="#a894bb" stroke-width="1.3" stroke-linecap="round" stroke-linejoin="round" stroke-dasharray="7 2.500 1.500 2.500" stroke-opacity=".75"/>
<path d="M1693.6 883.4 L1757.2 915.1 L1796.9 939.0" fill="none" stroke="#a894bb" stroke-width="1.1" stroke-linecap="round" stroke-linejoin="round" stroke-dasharray="7 2.500 1.500 2.500" stroke-opacity=".75"/>
<path d="M1581.0 736.4 L1695.8 839.7" fill="none" stroke="#cfcdca" stroke-width="2.2" stroke-linecap="round" stroke-linejoin="round" />
<path d="M1581.0 736.4 L1695.8 839.7" fill="none" stroke="#fff" stroke-width="1.3" stroke-linecap="round" stroke-linejoin="round" />
<path d="M1564.9 844.3 L1626.9 845.5 L1686.6 842.0" fill="none" stroke="#cfcdca" stroke-width="2.2" stroke-linecap="round" stroke-linejoin="round" />
<path d="M1564.9 844.3 L1626.9 845.5 L1686.6 842.0" fill="none" stroke="#fff" stroke-width="1.3" stroke-linecap="round" stroke-linejoin="round" />
<path d="M1480.0 860.4 L1564.9 851.2" fill="none" stroke="#cfcdca" stroke-width="2.2" stroke-linecap="round" stroke-linejoin="round" />
<path d="M1480.0 860.4 L1564.9 851.2" fill="none" stroke="#fff" stroke-width="1.3" stroke-linecap="round" stroke-linejoin="round" />
<path d="M1574.1 894.8 L1670.5 885.6" fill="none" stroke="#cfcdca" stroke-width="2.2" stroke-linecap="round" stroke-linejoin="round" />
<path d="M1574.1 894.8 L1670.5 885.6" fill="none" stroke="#fff" stroke-width="1.3" stroke-linecap="round" stroke-linejoin="round" />
<path d="M1626.9 845.5 L1670.5 876.4" fill="none" stroke="#cfcdca" stroke-width="2.2" stroke-linecap="round" stroke-linejoin="round" />
<path d="M1626.9 845.5 L1670.5 876.4" fill="none" stroke="#fff" stroke-width="1.3" stroke-linecap="round" stroke-linejoin="round" />
<path d="M1608.5 892.5 L1608.5 832.8 L1663.6 825.9 L1663.6 809.9" fill="none" stroke="#cfcdca" stroke-width="2.2" stroke-linecap="round" stroke-linejoin="round" />
<path d="M1608.5 892.5 L1608.5 832.8 L1663.6 825.9 L1663.6 809.9" fill="none" stroke="#fff" stroke-width="1.3" stroke-linecap="round" stroke-linejoin="round" />
<path d="M1507.5 764.0 L1509.8 789.2 L1525.9 830.5 L1532.8 908.6 L1576.4 906.3" fill="none" stroke="#cfcdca" stroke-width="2.2" stroke-linecap="round" stroke-linejoin="round" />
<path d="M1507.5 764.0 L1509.8 789.2 L1525.9 830.5 L1532.8 908.6 L1576.4 906.3" fill="none" stroke="#fff" stroke-width="1.3" stroke-linecap="round" stroke-linejoin="round" />
<path d="M1741.7 786.9 L1750.8 736.4 L1764.6 713.5 L1778.4 702.0" fill="none" stroke="#cfcdca" stroke-width="2.2" stroke-linecap="round" stroke-linejoin="round" />
<path d="M1741.7 786.9 L1750.8 736.4 L1764.6 713.5 L1778.4 702.0" fill="none" stroke="#fff" stroke-width="1.3" stroke-linecap="round" stroke-linejoin="round" />
<path d="M1741.7 786.9 L1780.7 798.4 L1805.9 812.2 L1801.3 828.2" fill="none" stroke="#cfcdca" stroke-width="2.2" stroke-linecap="round" stroke-linejoin="round" />
<path d="M1741.7 786.9 L1780.7 798.4 L1805.9 812.2 L1801.3 828.2" fill="none" stroke="#fff" stroke-width="1.3" stroke-linecap="round" stroke-linejoin="round" />
<path d="M1833.5 823.6 L1847.2 793.8 L1870.2 777.7" fill="none" stroke="#cfcdca" stroke-width="2.2" stroke-linecap="round" stroke-linejoin="round" />
<path d="M1833.5 823.6 L1847.2 793.8 L1870.2 777.7" fill="none" stroke="#fff" stroke-width="1.3" stroke-linecap="round" stroke-linejoin="round" />
<path d="M1831.2 702.0 L1810.5 759.4" fill="none" stroke="#cfcdca" stroke-width="2.2" stroke-linecap="round" stroke-linejoin="round" />
<path d="M1831.2 702.0 L1810.5 759.4" fill="none" stroke="#fff" stroke-width="1.3" stroke-linecap="round" stroke-linejoin="round" />
<path d="M1870.2 702.0 L1867.9 725.0 L1888.6 729.5 L1888.6 747.9 L1856.4 777.7" fill="none" stroke="#cfcdca" stroke-width="2.2" stroke-linecap="round" stroke-linejoin="round" />
<path d="M1870.2 702.0 L1867.9 725.0 L1888.6 729.5 L1888.6 747.9 L1856.4 777.7" fill="none" stroke="#fff" stroke-width="1.3" stroke-linecap="round" stroke-linejoin="round" />
<path d="M1583.3 738.7 L1617.7 731.8 L1631.5 713.5 L1613.1 714.6" fill="none" stroke="#cfcdca" stroke-width="2.2" stroke-linecap="round" stroke-linejoin="round" />
<path d="M1583.3 738.7 L1617.7 731.8 L1631.5 713.5 L1613.1 714.6" fill="none" stroke="#fff" stroke-width="1.3" stroke-linecap="round" stroke-linejoin="round" />
<path d="M1562.6 793.8 L1578.7 775.4 L1574.1 770.9" fill="none" stroke="#cfcdca" stroke-width="2.2" stroke-linecap="round" stroke-linejoin="round" />
<path d="M1562.6 793.8 L1578.7 775.4 L1574.1 770.9" fill="none" stroke="#fff" stroke-width="1.3" stroke-linecap="round" stroke-linejoin="round" />
<path d="M1562.6 793.8 L1576.4 821.4 L1613.1 842.0" fill="none" stroke="#cfcdca" stroke-width="2.2" stroke-linecap="round" stroke-linejoin="round" />
<path d="M1562.6 793.8 L1576.4 821.4 L1613.1 842.0" fill="none" stroke="#fff" stroke-width="1.3" stroke-linecap="round" stroke-linejoin="round" />
<path d="M1306.9 540.0 C1310.0 545.7 1319.1 563.0 1325.3 574.4 C1331.4 585.9 1336.7 596.6 1343.6 608.9 C1350.5 621.1 1358.9 633.3 1366.6 647.9 C1374.2 662.4 1381.9 679.6 1389.5 696.1 C1397.2 712.5 1404.8 729.2 1412.5 746.6 C1420.1 763.9 1431.6 791.1 1435.4 800.1" fill="none" stroke="#6e6e6e" stroke-width="2.6" stroke-linecap="round" stroke-linejoin="round" />
<path d="M1306.9 540.0 C1310.0 545.7 1319.1 563.0 1325.3 574.4 C1331.4 585.9 1336.7 596.6 1343.6 608.9 C1350.5 621.1 1358.9 633.3 1366.6 647.9 C1374.2 662.4 1381.9 679.6 1389.5 696.1 C1397.2 712.5 1404.8 729.2 1412.5 746.6 C1420.1 763.9 1431.6 791.1 1435.4 800.1" fill="none" stroke="#fff" stroke-width="1" stroke-linecap="round" stroke-linejoin="round" stroke-dasharray="5 5"/>
<path d="M1389.5 709.8 C1393.4 710.6 1406.7 716.0 1412.5 714.4 C1418.2 712.9 1421.3 706.0 1424.0 700.7 C1426.6 695.3 1424.7 687.7 1428.5 682.3 C1432.4 677.0 1440.0 670.8 1446.9 668.5 C1453.8 666.2 1462.2 666.6 1469.9 668.5 C1477.5 670.4 1485.2 676.2 1492.8 680.0 C1500.5 683.8 1508.1 688.4 1515.8 691.5 C1523.4 694.5 1531.1 697.6 1538.7 698.4 C1546.4 699.1 1554.8 698.8 1561.7 696.1 C1568.6 693.4 1575.1 688.4 1580.0 682.3 C1585.0 676.2 1588.2 666.2 1591.5 659.4 C1594.8 652.5 1598.6 644.1 1600.0 641.0" fill="none" stroke="#6e6e6e" stroke-width="2.6" stroke-linecap="round" stroke-linejoin="round" />
<path d="M1389.5 709.8 C1393.4 710.6 1406.7 716.0 1412.5 714.4 C1418.2 712.9 1421.3 706.0 1424.0 700.7 C1426.6 695.3 1424.7 687.7 1428.5 682.3 C1432.4 677.0 1440.0 670.8 1446.9 668.5 C1453.8 666.2 1462.2 666.6 1469.9 668.5 C1477.5 670.4 1485.2 676.2 1492.8 680.0 C1500.5 683.8 1508.1 688.4 1515.8 691.5 C1523.4 694.5 1531.1 697.6 1538.7 698.4 C1546.4 699.1 1554.8 698.8 1561.7 696.1 C1568.6 693.4 1575.1 688.4 1580.0 682.3 C1585.0 676.2 1588.2 666.2 1591.5 659.4 C1594.8 652.5 1598.6 644.1 1600.0 641.0" fill="none" stroke="#fff" stroke-width="1" stroke-linecap="round" stroke-linejoin="round" stroke-dasharray="5 5"/>
<path d="M1439.4 792.0 C1443.4 801.3 1456.6 830.4 1463.3 847.6 C1469.9 864.8 1477.2 882.0 1479.1 895.3 C1481.1 908.5 1479.8 918.4 1475.2 927.0 C1470.5 935.7 1461.9 940.8 1451.3 946.9 C1440.8 953.1 1418.3 961.1 1411.6 964.0" fill="none" stroke="#6e6e6e" stroke-width="2.6" stroke-linecap="round" stroke-linejoin="round" />
<path d="M1439.4 792.0 C1443.4 801.3 1456.6 830.4 1463.3 847.6 C1469.9 864.8 1477.2 882.0 1479.1 895.3 C1481.1 908.5 1479.8 918.4 1475.2 927.0 C1470.5 935.7 1461.9 940.8 1451.3 946.9 C1440.8 953.1 1418.3 961.1 1411.6 964.0" fill="none" stroke="#fff" stroke-width="1" stroke-linecap="round" stroke-linejoin="round" stroke-dasharray="5 5"/>
<path d="M1360.0 645.1 C1366.6 659.0 1386.5 704.0 1399.7 728.5 C1413.0 753.0 1426.2 768.2 1439.4 792.0 C1452.7 815.8 1464.6 842.8 1479.1 871.4 C1493.7 900.1 1518.9 948.6 1526.8 964.0" fill="none" stroke="#6e6e6e" stroke-width="2.6" stroke-linecap="round" stroke-linejoin="round" />
<path d="M1360.0 645.1 C1366.6 659.0 1386.5 704.0 1399.7 728.5 C1413.0 753.0 1426.2 768.2 1439.4 792.0 C1452.7 815.8 1464.6 842.8 1479.1 871.4 C1493.7 900.1 1518.9 948.6 1526.8 964.0" fill="none" stroke="#fff" stroke-width="1" stroke-linecap="round" stroke-linejoin="round" stroke-dasharray="5 5"/>
<path d="M1510.9 688.8 C1514.9 690.4 1525.5 697.7 1534.8 698.7 C1544.0 699.7 1557.9 699.0 1566.5 694.7 C1575.1 690.4 1579.8 683.1 1586.4 672.9 C1593.0 662.6 1600.3 647.7 1606.2 633.1 C1612.2 618.6 1615.5 597.4 1622.1 585.5 C1628.7 573.6 1636.7 566.3 1646.0 561.7 C1655.2 557.0 1665.8 555.7 1677.7 557.7 C1689.6 559.7 1704.2 568.3 1717.4 573.6 C1730.7 578.9 1740.6 584.2 1757.2 589.5 C1773.7 594.8 1798.2 602.0 1816.7 605.3 C1835.3 608.7 1851.2 609.7 1868.4 609.3 C1885.6 609.0 1911.4 604.4 1920.0 603.4" fill="none" stroke="#6e6e6e" stroke-width="2.6" stroke-linecap="round" stroke-linejoin="round" />
<path d="M1510.9 688.8 C1514.9 690.4 1525.5 697.7 1534.8 698.7 C1544.0 699.7 1557.9 699.0 1566.5 694.7 C1575.1 690.4 1579.8 683.1 1586.4 672.9 C1593.0 662.6 1600.3 647.7 1606.2 633.1 C1612.2 618.6 1615.5 597.4 1622.1 585.5 C1628.7 573.6 1636.7 566.3 1646.0 561.7 C1655.2 557.0 1665.8 555.7 1677.7 557.7 C1689.6 559.7 1704.2 568.3 1717.4 573.6 C1730.7 578.9 1740.6 584.2 1757.2 589.5 C1773.7 594.8 1798.2 602.0 1816.7 605.3 C1835.3 608.7 1851.2 609.7 1868.4 609.3 C1885.6 609.0 1911.4 604.4 1920.0 603.4" fill="none" stroke="#fff" stroke-width="1" stroke-linecap="round" stroke-linejoin="round" stroke-dasharray="5 5"/>
<path d="M1283.9 513.5 C1286.2 515.0 1293.9 518.4 1297.7 522.6 C1301.5 526.8 1303.8 532.5 1306.9 538.7 C1310.0 544.9 1314.5 556.5 1316.1 560.1" fill="none" stroke="#6e6e6e" stroke-width="2.6" stroke-linecap="round" stroke-linejoin="round" />
<path d="M1283.9 513.5 C1286.2 515.0 1293.9 518.4 1297.7 522.6 C1301.5 526.8 1303.8 532.5 1306.9 538.7 C1310.0 544.9 1314.5 556.5 1316.1 560.1" fill="none" stroke="#fff" stroke-width="1" stroke-linecap="round" stroke-linejoin="round" stroke-dasharray="5 5"/>
<path d="M1228.9 474.4 C1231.9 478.6 1238.8 495.1 1247.2 499.7 C1255.6 504.3 1269.4 500.5 1279.4 502.0 C1289.3 503.5 1296.2 507.9 1306.9 508.9 C1317.6 509.8 1333.7 508.1 1343.6 507.7 C1353.6 507.3 1358.9 506.4 1366.6 506.6 C1374.2 506.8 1381.9 507.3 1389.5 508.9 C1397.2 510.4 1405.6 513.8 1412.5 515.8 C1419.4 517.7 1419.4 519.4 1430.8 520.3 C1442.3 521.3 1472.9 521.3 1481.3 521.5" fill="none" stroke="#888" stroke-width="1" stroke-linecap="round" stroke-linejoin="round" />
<path d="M1212.8 540.0 C1219.3 554.5 1237.7 595.9 1251.8 627.2 C1266.0 658.6 1283.6 699.4 1297.7 728.2 C1311.9 757.0 1330.2 788.1 1336.7 800.1" fill="none" stroke="#888" stroke-width="1" stroke-linecap="round" stroke-linejoin="round" />
<path d="M1481.3 521.5 C1484.0 518.2 1491.3 507.9 1497.4 502.0 C1503.5 496.1 1509.3 489.0 1518.1 485.9 C1526.9 482.9 1536.5 484.0 1550.2 483.6 C1563.8 483.2 1591.7 483.6 1600.0 483.6" fill="none" stroke="#666" stroke-width="1.2" stroke-linecap="round" stroke-linejoin="round" />
<path d="M800.0 98.0 L850.0 112.0 L960.0 150.0 L1120.0 217.0 L1240.0 267.0 L1320.0 302.0 L1372.0 345.0" fill="none" stroke="#6c8cf0" stroke-width="0.9" stroke-dasharray="6 5"/>
<path d="M1010.0 64.0 L1080.0 112.0 L1160.0 171.0 L1240.0 235.0 L1320.0 295.0 L1372.0 345.0" fill="none" stroke="#6c8cf0" stroke-width="0.9" stroke-dasharray="6 5"/>
<path d="M1384.0 64.0 L1378.0 180.0 L1374.0 300.0 L1372.0 345.0" fill="none" stroke="#6c8cf0" stroke-width="0.9" stroke-dasharray="6 5"/>
<path d="M1470.0 64.0 L1420.0 200.0 L1385.0 310.0 L1372.0 345.0" fill="none" stroke="#6c8cf0" stroke-width="0.9" stroke-dasharray="6 5"/>
<path d="M1555.0 64.0 L1480.0 180.0 L1410.0 300.0 L1372.0 345.0" fill="none" stroke="#6c8cf0" stroke-width="0.9" stroke-dasharray="6 5"/>
<path d="M1372.0 345.0 L1349.0 370.0 L1309.0 392.0 L1260.0 408.0 L1236.0 415.0 L1200.0 429.0" fill="none" stroke="#6c8cf0" stroke-width="0.9" stroke-dasharray="6 5"/>
<path d="M1263.0 409.0 L1246.0 430.0" fill="none" stroke="#6c8cf0" stroke-width="0.9" stroke-dasharray="6 5"/>
<path d="M956.1 236.2 L979.0 292.5 L1027.2 313.1 L1051.3 313.1" fill="none" stroke="#ab98b8" stroke-width="2.8" stroke-linecap="round" stroke-linejoin="round" />
<path d="M956.1 236.2 L979.0 292.5 L1027.2 313.1 L1051.3 313.1" fill="none" stroke="#dccbd6" stroke-width="1" stroke-linecap="round" stroke-linejoin="round" />
<path d="M1052.5 329.2 L1053.6 337.2 L1136.3 373.9 L1135.6 391.2" fill="none" stroke="#ab98b8" stroke-width="2.8" stroke-linecap="round" stroke-linejoin="round" />
<path d="M1052.5 329.2 L1053.6 337.2 L1136.3 373.9 L1135.6 391.2" fill="none" stroke="#dccbd6" stroke-width="1" stroke-linecap="round" stroke-linejoin="round" />
<path d="M1174.9 397.7 L1187.1 403.8 L1233.1 408.5 L1288.6 393.6 L1349.6 355.7" fill="none" stroke="#ab98b8" stroke-width="2.8" stroke-linecap="round" stroke-linejoin="round" />
<path d="M1174.9 397.7 L1187.1 403.8 L1233.1 408.5 L1288.6 393.6 L1349.6 355.7" fill="none" stroke="#dccbd6" stroke-width="1" stroke-linecap="round" stroke-linejoin="round" />
<path d="M1348.2 377.4 L1365.8 399.1" fill="none" stroke="#ab98b8" stroke-width="2.8" stroke-linecap="round" stroke-linejoin="round" />
<path d="M1348.2 377.4 L1365.8 399.1" fill="none" stroke="#dccbd6" stroke-width="1" stroke-linecap="round" stroke-linejoin="round" />
<path d="M1340.1 365.2 L1348.2 376.0" fill="none" stroke="#ab98b8" stroke-width="2.8" stroke-linecap="round" stroke-linejoin="round" />
<path d="M1340.1 365.2 L1348.2 376.0" fill="none" stroke="#dccbd6" stroke-width="1" stroke-linecap="round" stroke-linejoin="round" />
<path d="M1304.9 386.9 L1306.9 390.9" fill="none" stroke="#ab98b8" stroke-width="2.8" stroke-linecap="round" stroke-linejoin="round" />
<path d="M1304.9 386.9 L1306.9 390.9" fill="none" stroke="#dccbd6" stroke-width="1" stroke-linecap="round" stroke-linejoin="round" />
<path d="M1020.3 377.9 L1043.3 375.6 L1059.4 377.9" fill="none" stroke="#b9a8c0" stroke-width="4.2" stroke-linecap="round" stroke-linejoin="round" />
<path d="M1020.3 377.9 L1043.3 375.6 L1059.4 377.9" fill="none" stroke="#f1dad5" stroke-width="2.4" stroke-linecap="round" stroke-linejoin="round" />
<path d="M1059.4 377.9 L1066.2 393.5" fill="none" stroke="#b9a8c0" stroke-width="4.2" stroke-linecap="round" stroke-linejoin="round" />
<path d="M1059.4 377.9 L1066.2 393.5" fill="none" stroke="#f1dad5" stroke-width="2.4" stroke-linecap="round" stroke-linejoin="round" />
<path d="M1041.0 399.9 L1066.2 399.9" fill="none" stroke="#b9a8c0" stroke-width="4.2" stroke-linecap="round" stroke-linejoin="round" />
<path d="M1041.0 399.9 L1066.2 399.9" fill="none" stroke="#f1dad5" stroke-width="2.4" stroke-linecap="round" stroke-linejoin="round" />
<path d="M1043.3 379.2 L1029.5 379.2" fill="none" stroke="#b9a8c0" stroke-width="4.2" stroke-linecap="round" stroke-linejoin="round" />
<path d="M1043.3 379.2 L1029.5 379.2" fill="none" stroke="#f1dad5" stroke-width="2.4" stroke-linecap="round" stroke-linejoin="round" />
<path d="M1343.6 413.6 C1347.4 411.5 1358.9 405.0 1366.6 401.0 C1374.2 397.0 1381.9 393.1 1389.5 389.5 C1397.2 385.9 1404.8 382.6 1412.5 379.2 C1420.1 375.7 1427.8 371.0 1435.4 368.9 C1443.1 366.8 1450.7 368.1 1458.4 366.6 C1466.0 365.0 1474.8 362.7 1481.3 359.7 C1487.8 356.6 1493.2 352.8 1497.4 348.2 C1501.6 343.6 1503.5 337.1 1506.6 332.1 C1509.6 327.2 1512.3 323.0 1515.8 318.4 C1519.2 313.8 1524.6 307.7 1527.2 304.6 C1529.9 301.5 1531.1 300.8 1531.8 300.0" fill="none" stroke="#e892a2" stroke-width="4" stroke-linecap="round" stroke-linejoin="round" />
<path d="M1343.6 413.6 C1347.4 411.5 1358.9 405.0 1366.6 401.0 C1374.2 397.0 1381.9 393.1 1389.5 389.5 C1397.2 385.9 1404.8 382.6 1412.5 379.2 C1420.1 375.7 1427.8 371.0 1435.4 368.9 C1443.1 366.8 1450.7 368.1 1458.4 366.6 C1466.0 365.0 1474.8 362.7 1481.3 359.7 C1487.8 356.6 1493.2 352.8 1497.4 348.2 C1501.6 343.6 1503.5 337.1 1506.6 332.1 C1509.6 327.2 1512.3 323.0 1515.8 318.4 C1519.2 313.8 1524.6 307.7 1527.2 304.6 C1529.9 301.5 1531.1 300.8 1531.8 300.0" fill="none" stroke="#fff" stroke-width="2.6" stroke-linecap="round" stroke-linejoin="round" stroke-dasharray="5 5" stroke-linecap="butt"/>
<path d="M1531.6 300.4 C1535.7 298.1 1548.3 293.1 1555.7 286.6 C1563.2 280.1 1572.2 269.0 1576.4 261.4 C1580.6 253.7 1578.7 246.9 1581.0 240.7 C1583.3 234.6 1585.6 229.3 1590.2 224.7 C1594.8 220.1 1602.4 217.0 1608.5 213.2 C1614.7 209.4 1620.4 205.5 1626.9 201.7 C1633.4 197.9 1641.4 193.3 1647.6 190.2 C1653.7 187.2 1658.6 184.5 1663.6 183.4 C1668.6 182.2 1672.8 181.8 1677.4 183.4 C1682.0 184.9 1688.9 191.0 1691.2 192.5" fill="none" stroke="#e892a2" stroke-width="4" stroke-linecap="round" stroke-linejoin="round" />
<path d="M1531.6 300.4 C1535.7 298.1 1548.3 293.1 1555.7 286.6 C1563.2 280.1 1572.2 269.0 1576.4 261.4 C1580.6 253.7 1578.7 246.9 1581.0 240.7 C1583.3 234.6 1585.6 229.3 1590.2 224.7 C1594.8 220.1 1602.4 217.0 1608.5 213.2 C1614.7 209.4 1620.4 205.5 1626.9 201.7 C1633.4 197.9 1641.4 193.3 1647.6 190.2 C1653.7 187.2 1658.6 184.5 1663.6 183.4 C1668.6 182.2 1672.8 181.8 1677.4 183.4 C1682.0 184.9 1688.9 191.0 1691.2 192.5" fill="none" stroke="#fff" stroke-width="2.6" stroke-linecap="round" stroke-linejoin="round" stroke-dasharray="5 5" stroke-linecap="butt"/>
<path d="M800.0 300.5 C803.1 300.3 814.2 298.6 818.4 299.4 C822.6 300.1 823.3 303.2 825.2 305.1 C827.2 307.0 827.9 311.0 829.8 310.8 C831.8 310.6 835.6 305.1 836.7 303.9" fill="none" stroke="#c9cf6e" stroke-width="5.0" stroke-linecap="round" stroke-linejoin="round"/>
<path d="M800.0 356.7 C803.4 355.4 814.5 349.3 820.7 348.7 C826.8 348.1 830.6 352.0 836.7 353.3 C842.8 354.6 848.2 356.0 857.4 356.7 C866.6 357.5 883.0 357.9 891.8 357.9 C900.6 357.9 904.1 355.4 910.2 356.7 C916.3 358.1 925.5 364.4 928.5 365.9" fill="none" stroke="#c9cf6e" stroke-width="5.0" stroke-linecap="round" stroke-linejoin="round"/>
<path d="M1495.0 379.7 C1501.0 379.4 1516.2 380.7 1530.8 377.8 C1545.3 374.8 1564.5 369.2 1582.4 361.9 C1600.3 354.6 1622.1 342.7 1638.0 334.1 C1653.9 325.5 1664.5 316.2 1677.7 310.2 C1691.0 304.3 1704.2 301.6 1717.4 298.3 C1730.7 295.0 1747.2 293.0 1757.2 290.4 C1767.1 287.7 1768.4 285.1 1777.0 282.4 C1785.6 279.8 1798.9 278.5 1808.8 274.5 C1818.7 270.5 1832.0 261.3 1836.6 258.6" fill="none" stroke="#c9cf6e" stroke-width="5.0" stroke-linecap="round" stroke-linejoin="round"/>
<path d="M1836.6 258.6 C1841.9 251.3 1860.4 226.2 1868.4 214.9 C1876.3 203.7 1875.7 198.4 1884.3 191.1 C1892.9 183.8 1914.0 174.5 1920.0 171.2" fill="none" stroke="#c9cf6e" stroke-width="5.0" stroke-linecap="round" stroke-linejoin="round"/>
<path d="M1836.6 258.6 C1834.6 252.7 1829.3 235.4 1824.7 222.9 C1820.0 210.3 1814.1 195.7 1808.8 183.1 C1803.5 170.6 1798.9 157.3 1792.9 147.4 C1787.0 137.5 1781.7 129.5 1773.0 123.6 C1764.4 117.6 1750.5 113.0 1741.3 111.7 C1732.0 110.3 1724.1 111.7 1717.4 115.6 C1710.8 119.6 1705.9 126.9 1701.6 135.5 C1697.3 144.1 1693.3 162.0 1691.6 167.3" fill="none" stroke="#c9cf6e" stroke-width="5.0" stroke-linecap="round" stroke-linejoin="round"/>
<path d="M1757.2 211.0 C1761.1 208.3 1772.4 199.7 1781.0 195.1 C1789.6 190.4 1797.5 190.4 1808.8 183.1 C1820.0 175.9 1835.3 161.3 1848.5 151.4 C1861.7 141.4 1876.3 130.9 1888.2 123.6 C1900.1 116.3 1914.7 110.3 1920.0 107.7" fill="none" stroke="#c9cf6e" stroke-width="5.0" stroke-linecap="round" stroke-linejoin="round"/>
<path d="M1824.7 119.6 C1829.3 124.9 1842.6 139.5 1852.5 151.4 C1862.4 163.3 1879.0 184.5 1884.3 191.1" fill="none" stroke="#c9cf6e" stroke-width="5.0" stroke-linecap="round" stroke-linejoin="round"/>
<path d="M1856.5 99.7 C1862.4 99.1 1881.6 94.4 1892.2 95.8 C1902.8 97.1 1915.4 105.7 1920.0 107.7" fill="none" stroke="#c9cf6e" stroke-width="5.0" stroke-linecap="round" stroke-linejoin="round"/>
<path d="M1677.7 230.8 C1682.4 230.1 1696.9 225.5 1705.5 226.8 C1714.1 228.2 1722.7 233.5 1729.4 238.8 C1736.0 244.0 1741.9 252.0 1745.2 258.6 C1748.6 265.2 1747.2 273.2 1749.2 278.5 C1751.2 283.8 1755.8 288.4 1757.2 290.4" fill="none" stroke="#c9cf6e" stroke-width="5.0" stroke-linecap="round" stroke-linejoin="round"/>
<path d="M1669.8 250.7 C1671.1 248.7 1673.1 240.1 1677.7 238.8 C1682.4 237.4 1692.0 238.8 1697.6 242.7 C1703.2 246.7 1709.5 255.3 1711.5 262.6 C1713.5 269.9 1713.8 279.8 1709.5 286.4 C1705.2 293.0 1689.6 299.7 1685.7 302.3" fill="none" stroke="#c9cf6e" stroke-width="5.0" stroke-linecap="round" stroke-linejoin="round"/>
<path d="M1530.8 377.8 C1531.4 373.1 1530.1 357.2 1534.8 350.0 C1539.4 342.7 1548.0 339.4 1558.6 334.1 C1569.2 328.8 1591.7 320.8 1598.3 318.2" fill="none" stroke="#c9cf6e" stroke-width="5.0" stroke-linecap="round" stroke-linejoin="round"/>
<path d="M1721.4 377.8 C1726.1 378.4 1741.9 379.1 1749.2 381.7 C1756.5 384.4 1757.2 390.3 1765.1 393.6 C1773.0 397.0 1785.0 398.3 1796.9 401.6 C1808.8 404.9 1823.4 410.2 1836.6 413.5 C1849.8 416.8 1862.4 419.5 1876.3 421.4 C1890.2 423.4 1912.7 424.8 1920.0 425.4" fill="none" stroke="#c9cf6e" stroke-width="5.0" stroke-linecap="round" stroke-linejoin="round"/>
<path d="M1371.9 413.5 C1373.9 418.8 1383.2 434.7 1383.8 445.3 C1384.5 455.9 1377.2 471.8 1375.9 477.0" fill="none" stroke="#c9cf6e" stroke-width="5.0" stroke-linecap="round" stroke-linejoin="round"/>
<path d="M1383.8 445.3 C1393.1 443.3 1420.9 438.7 1439.4 433.4 C1458.0 428.1 1481.8 418.1 1495.0 413.5 C1508.3 408.9 1514.9 406.9 1518.9 405.6" fill="none" stroke="#c9cf6e" stroke-width="5.0" stroke-linecap="round" stroke-linejoin="round"/>
<path d="M1235.7 458.4 C1241.5 458.8 1259.8 460.3 1270.2 460.7 C1280.5 461.1 1288.5 462.2 1297.7 460.7 C1306.9 459.1 1318.0 453.0 1325.3 451.5 C1332.5 450.0 1338.6 451.5 1341.3 451.5" fill="none" stroke="#c9cf6e" stroke-width="5.0" stroke-linecap="round" stroke-linejoin="round"/>
<path d="M1217.4 490.5 C1223.1 490.1 1240.0 490.1 1251.8 488.2 C1263.7 486.3 1277.1 482.1 1288.5 479.0 C1300.0 476.0 1310.7 472.9 1320.7 469.8 C1330.6 466.8 1340.6 463.0 1348.2 460.7 C1355.9 458.4 1363.5 456.8 1366.6 456.1" fill="none" stroke="#c9cf6e" stroke-width="5.0" stroke-linecap="round" stroke-linejoin="round"/>
<path d="M1373.5 414.8 C1374.6 417.4 1378.0 425.5 1380.3 430.8 C1382.6 436.2 1386.1 444.2 1387.2 446.9" fill="none" stroke="#c9cf6e" stroke-width="5.0" stroke-linecap="round" stroke-linejoin="round"/>
<path d="M1387.2 446.9 C1392.6 445.0 1407.5 439.2 1419.4 435.4 C1431.2 431.6 1445.8 428.2 1458.4 423.9 C1471.0 419.7 1485.2 413.6 1495.1 410.2 C1505.1 406.7 1514.2 404.4 1518.1 403.3" fill="none" stroke="#c9cf6e" stroke-width="5.0" stroke-linecap="round" stroke-linejoin="round"/>
<path d="M1219.7 499.7 C1225.0 500.8 1241.9 503.1 1251.8 506.6 C1261.8 510.0 1270.2 515.0 1279.4 520.3 C1288.5 525.7 1300.0 532.1 1306.9 538.7 C1313.8 545.3 1318.4 556.5 1320.7 560.1" fill="none" stroke="#c9cf6e" stroke-width="5.0" stroke-linecap="round" stroke-linejoin="round"/>
<path d="M1405.6 497.4 C1404.4 501.2 1401.0 512.7 1398.7 520.3 C1396.4 528.0 1393.7 536.7 1391.8 543.3 C1389.9 549.9 1388.0 557.3 1387.2 560.1" fill="none" stroke="#c9cf6e" stroke-width="5.0" stroke-linecap="round" stroke-linejoin="round"/>
<path d="M1426.2 488.2 C1427.4 490.5 1432.4 496.6 1433.1 502.0 C1433.9 507.3 1431.2 517.3 1430.8 520.3" fill="none" stroke="#c9cf6e" stroke-width="5.0" stroke-linecap="round" stroke-linejoin="round"/>
<path d="M1430.8 520.3 C1433.1 523.8 1440.4 534.4 1444.6 541.0 C1448.8 547.6 1454.2 556.9 1456.1 560.1" fill="none" stroke="#c9cf6e" stroke-width="5.0" stroke-linecap="round" stroke-linejoin="round"/>
<path d="M1536.4 407.9 L1600.0 433.1" fill="none" stroke="#c9cf6e" stroke-width="5.0" stroke-linecap="round" stroke-linejoin="round"/>
<path d="M1518.1 428.5 C1525.3 430.4 1548.0 437.0 1561.7 440.0 C1575.3 443.1 1593.6 445.7 1600.0 446.9" fill="none" stroke="#c9cf6e" stroke-width="5.0" stroke-linecap="round" stroke-linejoin="round"/>
<path d="M1529.5 334.4 C1531.1 332.9 1533.4 327.9 1538.7 325.2 C1544.1 322.6 1551.5 319.9 1561.7 318.4 C1571.9 316.8 1593.6 316.4 1600.0 316.1" fill="none" stroke="#c9cf6e" stroke-width="5.0" stroke-linecap="round" stroke-linejoin="round"/>
<path d="M1499.7 379.2 C1504.3 378.8 1516.5 377.5 1527.2 376.9 C1538.0 376.3 1551.8 379.0 1564.0 375.7 C1576.1 372.5 1594.0 360.4 1600.0 357.4" fill="none" stroke="#c9cf6e" stroke-width="5.0" stroke-linecap="round" stroke-linejoin="round"/>
<path d="M1160.0 636.4 C1162.3 631.8 1169.2 618.8 1173.8 608.9 C1178.4 598.9 1183.7 586.3 1187.5 576.7 C1191.4 567.2 1194.8 557.6 1196.7 551.5 C1198.6 545.4 1198.6 541.9 1199.0 540.0" fill="none" stroke="#c9cf6e" stroke-width="5.0" stroke-linecap="round" stroke-linejoin="round"/>
<path d="M1160.0 595.1 C1165.0 595.1 1182.2 596.6 1189.8 595.1 C1197.5 593.6 1198.3 589.3 1205.9 585.9 C1213.6 582.5 1225.8 577.9 1235.7 574.4 C1245.7 571.0 1260.6 566.8 1265.6 565.2" fill="none" stroke="#c9cf6e" stroke-width="5.0" stroke-linecap="round" stroke-linejoin="round"/>
<path d="M1187.5 576.7 C1190.6 582.1 1199.8 597.4 1205.9 608.9 C1212.0 620.3 1217.4 631.8 1224.3 645.6 C1231.2 659.4 1239.6 676.2 1247.2 691.5 C1254.9 706.8 1263.3 724.4 1270.2 737.4 C1277.1 750.4 1285.1 759.1 1288.5 769.5 C1292.0 780.0 1290.4 795.0 1290.8 800.1" fill="none" stroke="#c9cf6e" stroke-width="5.0" stroke-linecap="round" stroke-linejoin="round"/>
<path d="M1160.0 723.6 C1161.5 716.7 1165.0 698.4 1169.2 682.3 C1173.4 666.2 1181.4 641.8 1185.2 627.2 C1189.1 612.7 1191.0 600.4 1192.1 595.1" fill="none" stroke="#c9cf6e" stroke-width="5.0" stroke-linecap="round" stroke-linejoin="round"/>
<path d="M1362.0 540.0 C1363.1 543.8 1368.9 555.3 1368.9 563.0 C1368.9 570.6 1363.1 582.1 1362.0 585.9" fill="none" stroke="#c9cf6e" stroke-width="5.0" stroke-linecap="round" stroke-linejoin="round"/>
<path d="M1339.0 556.1 C1343.6 559.1 1356.2 567.2 1366.6 574.4 C1376.9 581.7 1389.5 592.4 1401.0 599.7 C1412.5 606.9 1425.9 612.7 1435.4 618.0 C1445.0 623.4 1449.2 626.5 1458.4 631.8 C1467.6 637.2 1481.3 644.1 1490.5 650.2 C1499.7 656.3 1509.6 665.5 1513.5 668.5" fill="none" stroke="#c9cf6e" stroke-width="5.0" stroke-linecap="round" stroke-linejoin="round"/>
<path d="M1458.4 540.0 C1459.9 545.7 1463.7 561.8 1467.6 574.4 C1471.4 587.1 1477.5 605.4 1481.3 615.7 C1485.2 626.1 1489.0 633.0 1490.5 636.4" fill="none" stroke="#c9cf6e" stroke-width="5.0" stroke-linecap="round" stroke-linejoin="round"/>
<path d="M1513.5 668.5 C1515.8 670.8 1524.2 675.0 1527.2 682.3 C1530.3 689.6 1530.3 701.4 1531.8 712.1 C1533.4 722.9 1534.9 735.5 1536.4 746.6 C1538.0 757.7 1539.5 769.8 1541.0 778.7 C1542.5 787.6 1544.8 796.5 1545.6 800.1" fill="none" stroke="#c9cf6e" stroke-width="5.0" stroke-linecap="round" stroke-linejoin="round"/>
<path d="M1527.2 668.5 C1533.0 669.7 1549.5 672.7 1561.7 675.4 C1573.8 678.1 1593.6 683.1 1600.0 684.6" fill="none" stroke="#c9cf6e" stroke-width="5.0" stroke-linecap="round" stroke-linejoin="round"/>
<path d="M1430.8 549.2 C1430.5 552.2 1427.0 566.8 1428.5 567.5 C1430.1 568.3 1435.4 556.8 1440.0 553.8 C1444.6 550.7 1453.4 549.9 1456.1 549.2" fill="none" stroke="#c9cf6e" stroke-width="5.0" stroke-linecap="round" stroke-linejoin="round"/>
<path d="M800.0 521.9 C801.3 524.6 801.3 531.2 807.9 537.8 C814.6 544.4 827.8 552.4 839.7 561.7 C851.6 570.9 871.8 585.5 879.4 593.4 C887.0 601.4 882.1 602.4 885.4 609.3 C888.7 616.3 893.7 625.2 899.3 635.1 C904.9 645.1 910.5 656.0 919.1 668.9 C927.8 681.8 942.3 702.0 950.9 712.6 C959.5 723.2 962.8 730.5 970.8 732.4 C978.7 734.4 989.3 727.1 998.6 724.5 C1007.8 721.8 1021.7 717.9 1026.4 716.6" fill="none" stroke="#c9cf6e" stroke-width="5.0" stroke-linecap="round" stroke-linejoin="round"/>
<path d="M800.0 839.7 C807.3 840.3 830.4 839.7 843.7 843.6 C856.9 847.6 871.5 858.9 879.4 863.5 C887.4 868.1 889.4 870.1 891.3 871.4" fill="none" stroke="#c9cf6e" stroke-width="5.0" stroke-linecap="round" stroke-linejoin="round"/>
<path d="M1169.4 565.6 C1167.4 576.9 1162.7 608.7 1157.4 633.1 C1152.2 657.6 1144.2 687.4 1137.6 712.6 C1131.0 737.7 1123.7 765.5 1117.7 784.1 C1111.8 802.6 1104.5 809.2 1101.8 823.8 C1099.2 838.3 1103.2 856.9 1101.8 871.4 C1100.5 886.0 1097.9 899.2 1093.9 911.2 C1089.9 923.1 1080.7 934.1 1078.0 942.9 C1075.4 951.7 1078.0 960.5 1078.0 964.0" fill="none" stroke="#c9cf6e" stroke-width="5.0" stroke-linecap="round" stroke-linejoin="round"/>
<path d="M1189.2 569.6 C1187.2 580.2 1181.3 610.6 1177.3 633.1 C1173.3 655.7 1166.7 687.4 1165.4 704.6 C1164.1 721.8 1168.7 731.1 1169.4 736.4" fill="none" stroke="#c9cf6e" stroke-width="5.0" stroke-linecap="round" stroke-linejoin="round"/>
<path d="M1201.1 593.4 C1204.4 602.0 1213.0 626.5 1221.0 645.1 C1228.9 663.6 1239.5 686.8 1248.8 704.6 C1258.1 722.5 1270.0 737.7 1276.6 752.3 C1283.2 766.9 1285.9 780.1 1288.5 792.0 C1291.2 803.9 1291.8 818.5 1292.5 823.8" fill="none" stroke="#c9cf6e" stroke-width="5.0" stroke-linecap="round" stroke-linejoin="round"/>
<path d="M1141.6 927.0 C1142.2 921.8 1141.6 904.5 1145.5 895.3 C1149.5 886.0 1153.5 878.1 1165.4 871.4 C1177.3 864.8 1201.1 861.5 1217.0 855.6 C1232.9 849.6 1246.1 840.3 1260.7 835.7 C1275.3 831.1 1291.2 828.4 1304.4 827.8 C1317.6 827.1 1334.2 831.1 1340.1 831.7" fill="none" stroke="#c9cf6e" stroke-width="5.0" stroke-linecap="round" stroke-linejoin="round"/>
<path d="M1129.6 946.9 C1131.6 943.6 1136.6 935.7 1141.6 927.0 C1146.5 918.4 1156.1 904.5 1159.4 895.3 C1162.7 886.0 1161.1 875.4 1161.4 871.4" fill="none" stroke="#c9cf6e" stroke-width="5.0" stroke-linecap="round" stroke-linejoin="round"/>
<path d="M1149.5 585.5 C1157.4 586.8 1182.6 588.8 1197.2 593.4 C1211.7 598.1 1220.3 606.7 1236.9 613.3 C1253.4 619.9 1286.5 629.8 1296.5 633.1" fill="none" stroke="#c9cf6e" stroke-width="5.0" stroke-linecap="round" stroke-linejoin="round"/>
<path d="M1105.8 514.0 C1105.2 518.0 1100.5 529.9 1101.8 537.8 C1103.2 545.8 1106.5 555.7 1113.8 561.7 C1121.0 567.6 1136.3 572.9 1145.5 573.6 C1154.8 574.2 1165.4 567.0 1169.4 565.6" fill="none" stroke="#c9cf6e" stroke-width="5.0" stroke-linecap="round" stroke-linejoin="round"/>
<path d="M1840.6 609.3 C1843.9 614.6 1855.5 627.9 1860.4 641.1 C1865.4 654.3 1868.7 680.8 1870.4 688.8" fill="none" stroke="#c9cf6e" stroke-width="5.0" stroke-linecap="round" stroke-linejoin="round"/>
<path d="M1360.0 867.5 C1367.3 867.5 1385.8 868.1 1403.7 867.5 C1421.6 866.8 1452.0 867.5 1467.2 863.5 C1482.5 859.5 1485.1 852.3 1495.0 843.6 C1505.0 835.0 1521.5 817.2 1526.8 811.9" fill="none" stroke="#c9cf6e" stroke-width="5.0" stroke-linecap="round" stroke-linejoin="round"/>
<path d="M1367.9 871.4 C1373.2 878.1 1388.5 899.2 1399.7 911.2 C1411.0 923.1 1426.2 934.1 1435.5 942.9 C1444.7 951.7 1452.0 960.5 1455.3 964.0" fill="none" stroke="#c9cf6e" stroke-width="5.0" stroke-linecap="round" stroke-linejoin="round"/>
<path d="M1439.4 545.8 C1442.1 552.4 1448.7 572.3 1455.3 585.5 C1461.9 598.7 1469.9 613.3 1479.1 625.2 C1488.4 637.1 1501.7 644.4 1510.9 657.0 C1520.2 669.6 1530.1 687.4 1534.8 700.7 C1539.4 713.9 1537.4 725.2 1538.7 736.4 C1540.0 747.7 1541.4 758.9 1542.7 768.2 C1544.0 777.5 1546.0 788.0 1546.7 792.0" fill="none" stroke="#c9cf6e" stroke-width="5.0" stroke-linecap="round" stroke-linejoin="round"/>
<path d="M1427.5 565.6 C1428.8 563.6 1431.5 556.0 1435.5 553.7 C1439.4 551.4 1446.7 548.4 1451.3 551.7 C1456.0 555.0 1461.3 569.9 1463.3 573.6" fill="none" stroke="#c9cf6e" stroke-width="5.0" stroke-linecap="round" stroke-linejoin="round"/>
<path d="M1695.8 839.7 C1705.7 838.8 1734.0 836.1 1755.4 834.0 C1776.9 831.9 1796.9 830.0 1824.3 827.1 C1851.7 824.2 1904.0 818.5 1920.0 816.8" fill="none" stroke="#c9cf6e" stroke-width="5.0" stroke-linecap="round" stroke-linejoin="round"/>
<path d="M1626.9 690.5 C1632.3 692.4 1649.1 698.6 1659.0 702.0 C1669.0 705.4 1678.2 707.7 1686.6 711.2 C1695.0 714.6 1698.0 717.3 1709.5 722.7 C1721.0 728.0 1736.3 735.7 1755.4 743.3 C1774.6 751.0 1805.2 762.1 1824.3 768.6 C1843.4 775.1 1854.2 776.6 1870.2 782.3 C1886.1 788.1 1911.7 799.5 1920.0 803.0" fill="none" stroke="#c9cf6e" stroke-width="5.0" stroke-linecap="round" stroke-linejoin="round"/>
<path d="M1510.9 664.9 C1516.9 666.2 1534.8 670.2 1546.7 672.9 C1558.6 675.5 1570.5 678.2 1582.4 680.8 C1594.3 683.5 1612.2 687.4 1618.2 688.8" fill="none" stroke="#c9cf6e" stroke-width="5.0" stroke-linecap="round" stroke-linejoin="round"/>
<path d="M1695.8 839.7 C1701.9 845.8 1720.6 865.0 1732.5 876.4 C1744.3 887.9 1755.4 897.9 1766.9 908.6 C1778.4 919.3 1793.7 933.1 1801.3 940.7 C1809.0 948.4 1809.8 950.9 1812.8 954.5 C1815.9 958.0 1818.5 960.8 1819.7 962.1" fill="none" stroke="#c9cf6e" stroke-width="5.0" stroke-linecap="round" stroke-linejoin="round"/>
<path d="M1920.0 842.0 C1918.6 846.2 1916.0 858.1 1911.5 867.3 C1907.0 876.4 1900.0 888.7 1893.1 897.1 C1886.3 905.5 1877.8 912.8 1870.2 917.8 C1862.5 922.7 1854.9 925.0 1847.2 926.9 C1839.6 928.8 1830.4 926.9 1824.3 929.2 C1818.2 931.5 1812.8 938.8 1810.5 940.7" fill="none" stroke="#c9cf6e" stroke-width="5.0" stroke-linecap="round" stroke-linejoin="round"/>
<path d="M1645.3 407.9 C1649.5 415.1 1662.5 436.6 1670.5 451.5 C1678.5 466.4 1689.6 489.7 1693.5 497.4" fill="none" stroke="#c9cf6e" stroke-width="5.0" stroke-linecap="round" stroke-linejoin="round"/>
<path d="M1594.8 435.4 L1595.9 518.0" fill="none" stroke="#c9cf6e" stroke-width="5.0" stroke-linecap="round" stroke-linejoin="round"/>
<path d="M1535.1 449.2 C1545.0 446.9 1576.4 442.3 1594.8 435.4 C1613.1 428.5 1636.8 412.5 1645.3 407.9" fill="none" stroke="#c9cf6e" stroke-width="5.0" stroke-linecap="round" stroke-linejoin="round"/>
<path d="M1652.1 414.8 C1655.6 414.0 1664.0 407.9 1672.8 410.2 C1681.6 412.5 1695.0 423.2 1704.9 428.5 C1714.9 433.9 1720.2 435.8 1732.5 442.3 C1744.7 448.8 1770.7 463.3 1778.4 467.6" fill="none" stroke="#c9cf6e" stroke-width="5.0" stroke-linecap="round" stroke-linejoin="round"/>
<path d="M1670.5 451.5 C1677.0 447.7 1702.3 434.7 1709.5 428.5 C1716.8 422.4 1712.2 417.4 1714.1 414.8 C1716.0 412.1 1719.9 412.8 1721.0 412.5" fill="none" stroke="#c9cf6e" stroke-width="5.0" stroke-linecap="round" stroke-linejoin="round"/>
<path d="M1640.7 474.4 C1643.0 477.5 1651.0 487.1 1654.4 492.8 C1657.9 498.5 1660.2 502.7 1661.3 508.9 C1662.5 515.0 1661.3 526.1 1661.3 529.5" fill="none" stroke="#c9cf6e" stroke-width="5.0" stroke-linecap="round" stroke-linejoin="round"/>
<path d="M1521.3 485.9 C1533.6 486.1 1577.9 487.4 1594.8 487.1 C1611.6 486.7 1609.7 488.8 1622.3 483.6 C1634.9 478.5 1662.5 460.7 1670.5 456.1" fill="none" stroke="#c9cf6e" stroke-width="5.0" stroke-linecap="round" stroke-linejoin="round"/>
<path d="M1110.0 523.8 C1111.2 524.0 1116.5 523.3 1117.5 525.0 C1118.5 526.7 1118.5 531.7 1116.2 533.8 C1114.0 535.8 1106.0 534.8 1103.8 537.5 C1101.5 540.2 1102.1 545.8 1102.5 550.0 C1102.9 554.2 1105.0 559.6 1106.2 562.5 C1107.5 565.4 1109.4 566.7 1110.0 567.5" fill="none" stroke="#c9cf6e" stroke-width="5.0" stroke-linecap="round" stroke-linejoin="round"/>
<path d="M800.0 300.5 C803.1 300.3 814.2 298.6 818.4 299.4 C822.6 300.1 823.3 303.2 825.2 305.1 C827.2 307.0 827.9 311.0 829.8 310.8 C831.8 310.6 835.6 305.1 836.7 303.9" fill="none" stroke="#f7fabf" stroke-width="4.0" stroke-linecap="round" stroke-linejoin="round"/>
<path d="M800.0 356.7 C803.4 355.4 814.5 349.3 820.7 348.7 C826.8 348.1 830.6 352.0 836.7 353.3 C842.8 354.6 848.2 356.0 857.4 356.7 C866.6 357.5 883.0 357.9 891.8 357.9 C900.6 357.9 904.1 355.4 910.2 356.7 C916.3 358.1 925.5 364.4 928.5 365.9" fill="none" stroke="#f7fabf" stroke-width="4.0" stroke-linecap="round" stroke-linejoin="round"/>
<path d="M1495.0 379.7 C1501.0 379.4 1516.2 380.7 1530.8 377.8 C1545.3 374.8 1564.5 369.2 1582.4 361.9 C1600.3 354.6 1622.1 342.7 1638.0 334.1 C1653.9 325.5 1664.5 316.2 1677.7 310.2 C1691.0 304.3 1704.2 301.6 1717.4 298.3 C1730.7 295.0 1747.2 293.0 1757.2 290.4 C1767.1 287.7 1768.4 285.1 1777.0 282.4 C1785.6 279.8 1798.9 278.5 1808.8 274.5 C1818.7 270.5 1832.0 261.3 1836.6 258.6" fill="none" stroke="#f7fabf" stroke-width="4.0" stroke-linecap="round" stroke-linejoin="round"/>
<path d="M1836.6 258.6 C1841.9 251.3 1860.4 226.2 1868.4 214.9 C1876.3 203.7 1875.7 198.4 1884.3 191.1 C1892.9 183.8 1914.0 174.5 1920.0 171.2" fill="none" stroke="#f7fabf" stroke-width="4.0" stroke-linecap="round" stroke-linejoin="round"/>
<path d="M1836.6 258.6 C1834.6 252.7 1829.3 235.4 1824.7 222.9 C1820.0 210.3 1814.1 195.7 1808.8 183.1 C1803.5 170.6 1798.9 157.3 1792.9 147.4 C1787.0 137.5 1781.7 129.5 1773.0 123.6 C1764.4 117.6 1750.5 113.0 1741.3 111.7 C1732.0 110.3 1724.1 111.7 1717.4 115.6 C1710.8 119.6 1705.9 126.9 1701.6 135.5 C1697.3 144.1 1693.3 162.0 1691.6 167.3" fill="none" stroke="#f7fabf" stroke-width="4.0" stroke-linecap="round" stroke-linejoin="round"/>
<path d="M1757.2 211.0 C1761.1 208.3 1772.4 199.7 1781.0 195.1 C1789.6 190.4 1797.5 190.4 1808.8 183.1 C1820.0 175.9 1835.3 161.3 1848.5 151.4 C1861.7 141.4 1876.3 130.9 1888.2 123.6 C1900.1 116.3 1914.7 110.3 1920.0 107.7" fill="none" stroke="#f7fabf" stroke-width="4.0" stroke-linecap="round" stroke-linejoin="round"/>
<path d="M1824.7 119.6 C1829.3 124.9 1842.6 139.5 1852.5 151.4 C1862.4 163.3 1879.0 184.5 1884.3 191.1" fill="none" stroke="#f7fabf" stroke-width="4.0" stroke-linecap="round" stroke-linejoin="round"/>
<path d="M1856.5 99.7 C1862.4 99.1 1881.6 94.4 1892.2 95.8 C1902.8 97.1 1915.4 105.7 1920.0 107.7" fill="none" stroke="#f7fabf" stroke-width="4.0" stroke-linecap="round" stroke-linejoin="round"/>
<path d="M1677.7 230.8 C1682.4 230.1 1696.9 225.5 1705.5 226.8 C1714.1 228.2 1722.7 233.5 1729.4 238.8 C1736.0 244.0 1741.9 252.0 1745.2 258.6 C1748.6 265.2 1747.2 273.2 1749.2 278.5 C1751.2 283.8 1755.8 288.4 1757.2 290.4" fill="none" stroke="#f7fabf" stroke-width="4.0" stroke-linecap="round" stroke-linejoin="round"/>
<path d="M1669.8 250.7 C1671.1 248.7 1673.1 240.1 1677.7 238.8 C1682.4 237.4 1692.0 238.8 1697.6 242.7 C1703.2 246.7 1709.5 255.3 1711.5 262.6 C1713.5 269.9 1713.8 279.8 1709.5 286.4 C1705.2 293.0 1689.6 299.7 1685.7 302.3" fill="none" stroke="#f7fabf" stroke-width="4.0" stroke-linecap="round" stroke-linejoin="round"/>
<path d="M1530.8 377.8 C1531.4 373.1 1530.1 357.2 1534.8 350.0 C1539.4 342.7 1548.0 339.4 1558.6 334.1 C1569.2 328.8 1591.7 320.8 1598.3 318.2" fill="none" stroke="#f7fabf" stroke-width="4.0" stroke-linecap="round" stroke-linejoin="round"/>
<path d="M1721.4 377.8 C1726.1 378.4 1741.9 379.1 1749.2 381.7 C1756.5 384.4 1757.2 390.3 1765.1 393.6 C1773.0 397.0 1785.0 398.3 1796.9 401.6 C1808.8 404.9 1823.4 410.2 1836.6 413.5 C1849.8 416.8 1862.4 419.5 1876.3 421.4 C1890.2 423.4 1912.7 424.8 1920.0 425.4" fill="none" stroke="#f7fabf" stroke-width="4.0" stroke-linecap="round" stroke-linejoin="round"/>
<path d="M1371.9 413.5 C1373.9 418.8 1383.2 434.7 1383.8 445.3 C1384.5 455.9 1377.2 471.8 1375.9 477.0" fill="none" stroke="#f7fabf" stroke-width="4.0" stroke-linecap="round" stroke-linejoin="round"/>
<path d="M1383.8 445.3 C1393.1 443.3 1420.9 438.7 1439.4 433.4 C1458.0 428.1 1481.8 418.1 1495.0 413.5 C1508.3 408.9 1514.9 406.9 1518.9 405.6" fill="none" stroke="#f7fabf" stroke-width="4.0" stroke-linecap="round" stroke-linejoin="round"/>
<path d="M1235.7 458.4 C1241.5 458.8 1259.8 460.3 1270.2 460.7 C1280.5 461.1 1288.5 462.2 1297.7 460.7 C1306.9 459.1 1318.0 453.0 1325.3 451.5 C1332.5 450.0 1338.6 451.5 1341.3 451.5" fill="none" stroke="#f7fabf" stroke-width="4.0" stroke-linecap="round" stroke-linejoin="round"/>
<path d="M1217.4 490.5 C1223.1 490.1 1240.0 490.1 1251.8 488.2 C1263.7 486.3 1277.1 482.1 1288.5 479.0 C1300.0 476.0 1310.7 472.9 1320.7 469.8 C1330.6 466.8 1340.6 463.0 1348.2 460.7 C1355.9 458.4 1363.5 456.8 1366.6 456.1" fill="none" stroke="#f7fabf" stroke-width="4.0" stroke-linecap="round" stroke-linejoin="round"/>
<path d="M1373.5 414.8 C1374.6 417.4 1378.0 425.5 1380.3 430.8 C1382.6 436.2 1386.1 444.2 1387.2 446.9" fill="none" stroke="#f7fabf" stroke-width="4.0" stroke-linecap="round" stroke-linejoin="round"/>
<path d="M1387.2 446.9 C1392.6 445.0 1407.5 439.2 1419.4 435.4 C1431.2 431.6 1445.8 428.2 1458.4 423.9 C1471.0 419.7 1485.2 413.6 1495.1 410.2 C1505.1 406.7 1514.2 404.4 1518.1 403.3" fill="none" stroke="#f7fabf" stroke-width="4.0" stroke-linecap="round" stroke-linejoin="round"/>
<path d="M1219.7 499.7 C1225.0 500.8 1241.9 503.1 1251.8 506.6 C1261.8 510.0 1270.2 515.0 1279.4 520.3 C1288.5 525.7 1300.0 532.1 1306.9 538.7 C1313.8 545.3 1318.4 556.5 1320.7 560.1" fill="none" stroke="#f7fabf" stroke-width="4.0" stroke-linecap="round" stroke-linejoin="round"/>
<path d="M1405.6 497.4 C1404.4 501.2 1401.0 512.7 1398.7 520.3 C1396.4 528.0 1393.7 536.7 1391.8 543.3 C1389.9 549.9 1388.0 557.3 1387.2 560.1" fill="none" stroke="#f7fabf" stroke-width="4.0" stroke-linecap="round" stroke-linejoin="round"/>
<path d="M1426.2 488.2 C1427.4 490.5 1432.4 496.6 1433.1 502.0 C1433.9 507.3 1431.2 517.3 1430.8 520.3" fill="none" stroke="#f7fabf" stroke-width="4.0" stroke-linecap="round" stroke-linejoin="round"/>
<path d="M1430.8 520.3 C1433.1 523.8 1440.4 534.4 1444.6 541.0 C1448.8 547.6 1454.2 556.9 1456.1 560.1" fill="none" stroke="#f7fabf" stroke-width="4.0" stroke-linecap="round" stroke-linejoin="round"/>
<path d="M1536.4 407.9 L1600.0 433.1" fill="none" stroke="#f7fabf" stroke-width="4.0" stroke-linecap="round" stroke-linejoin="round"/>
<path d="M1518.1 428.5 C1525.3 430.4 1548.0 437.0 1561.7 440.0 C1575.3 443.1 1593.6 445.7 1600.0 446.9" fill="none" stroke="#f7fabf" stroke-width="4.0" stroke-linecap="round" stroke-linejoin="round"/>
<path d="M1529.5 334.4 C1531.1 332.9 1533.4 327.9 1538.7 325.2 C1544.1 322.6 1551.5 319.9 1561.7 318.4 C1571.9 316.8 1593.6 316.4 1600.0 316.1" fill="none" stroke="#f7fabf" stroke-width="4.0" stroke-linecap="round" stroke-linejoin="round"/>
<path d="M1499.7 379.2 C1504.3 378.8 1516.5 377.5 1527.2 376.9 C1538.0 376.3 1551.8 379.0 1564.0 375.7 C1576.1 372.5 1594.0 360.4 1600.0 357.4" fill="none" stroke="#f7fabf" stroke-width="4.0" stroke-linecap="round" stroke-linejoin="round"/>
<path d="M1160.0 636.4 C1162.3 631.8 1169.2 618.8 1173.8 608.9 C1178.4 598.9 1183.7 586.3 1187.5 576.7 C1191.4 567.2 1194.8 557.6 1196.7 551.5 C1198.6 545.4 1198.6 541.9 1199.0 540.0" fill="none" stroke="#f7fabf" stroke-width="4.0" stroke-linecap="round" stroke-linejoin="round"/>
<path d="M1160.0 595.1 C1165.0 595.1 1182.2 596.6 1189.8 595.1 C1197.5 593.6 1198.3 589.3 1205.9 585.9 C1213.6 582.5 1225.8 577.9 1235.7 574.4 C1245.7 571.0 1260.6 566.8 1265.6 565.2" fill="none" stroke="#f7fabf" stroke-width="4.0" stroke-linecap="round" stroke-linejoin="round"/>
<path d="M1187.5 576.7 C1190.6 582.1 1199.8 597.4 1205.9 608.9 C1212.0 620.3 1217.4 631.8 1224.3 645.6 C1231.2 659.4 1239.6 676.2 1247.2 691.5 C1254.9 706.8 1263.3 724.4 1270.2 737.4 C1277.1 750.4 1285.1 759.1 1288.5 769.5 C1292.0 780.0 1290.4 795.0 1290.8 800.1" fill="none" stroke="#f7fabf" stroke-width="4.0" stroke-linecap="round" stroke-linejoin="round"/>
<path d="M1160.0 723.6 C1161.5 716.7 1165.0 698.4 1169.2 682.3 C1173.4 666.2 1181.4 641.8 1185.2 627.2 C1189.1 612.7 1191.0 600.4 1192.1 595.1" fill="none" stroke="#f7fabf" stroke-width="4.0" stroke-linecap="round" stroke-linejoin="round"/>
<path d="M1362.0 540.0 C1363.1 543.8 1368.9 555.3 1368.9 563.0 C1368.9 570.6 1363.1 582.1 1362.0 585.9" fill="none" stroke="#f7fabf" stroke-width="4.0" stroke-linecap="round" stroke-linejoin="round"/>
<path d="M1339.0 556.1 C1343.6 559.1 1356.2 567.2 1366.6 574.4 C1376.9 581.7 1389.5 592.4 1401.0 599.7 C1412.5 606.9 1425.9 612.7 1435.4 618.0 C1445.0 623.4 1449.2 626.5 1458.4 631.8 C1467.6 637.2 1481.3 644.1 1490.5 650.2 C1499.7 656.3 1509.6 665.5 1513.5 668.5" fill="none" stroke="#f7fabf" stroke-width="4.0" stroke-linecap="round" stroke-linejoin="round"/>
<path d="M1458.4 540.0 C1459.9 545.7 1463.7 561.8 1467.6 574.4 C1471.4 587.1 1477.5 605.4 1481.3 615.7 C1485.2 626.1 1489.0 633.0 1490.5 636.4" fill="none" stroke="#f7fabf" stroke-width="4.0" stroke-linecap="round" stroke-linejoin="round"/>
<path d="M1513.5 668.5 C1515.8 670.8 1524.2 675.0 1527.2 682.3 C1530.3 689.6 1530.3 701.4 1531.8 712.1 C1533.4 722.9 1534.9 735.5 1536.4 746.6 C1538.0 757.7 1539.5 769.8 1541.0 778.7 C1542.5 787.6 1544.8 796.5 1545.6 800.1" fill="none" stroke="#f7fabf" stroke-width="4.0" stroke-linecap="round" stroke-linejoin="round"/>
<path d="M1527.2 668.5 C1533.0 669.7 1549.5 672.7 1561.7 675.4 C1573.8 678.1 1593.6 683.1 1600.0 684.6" fill="none" stroke="#f7fabf" stroke-width="4.0" stroke-linecap="round" stroke-linejoin="round"/>
<path d="M1430.8 549.2 C1430.5 552.2 1427.0 566.8 1428.5 567.5 C1430.1 568.3 1435.4 556.8 1440.0 553.8 C1444.6 550.7 1453.4 549.9 1456.1 549.2" fill="none" stroke="#f7fabf" stroke-width="4.0" stroke-linecap="round" stroke-linejoin="round"/>
<path d="M800.0 521.9 C801.3 524.6 801.3 531.2 807.9 537.8 C814.6 544.4 827.8 552.4 839.7 561.7 C851.6 570.9 871.8 585.5 879.4 593.4 C887.0 601.4 882.1 602.4 885.4 609.3 C888.7 616.3 893.7 625.2 899.3 635.1 C904.9 645.1 910.5 656.0 919.1 668.9 C927.8 681.8 942.3 702.0 950.9 712.6 C959.5 723.2 962.8 730.5 970.8 732.4 C978.7 734.4 989.3 727.1 998.6 724.5 C1007.8 721.8 1021.7 717.9 1026.4 716.6" fill="none" stroke="#f7fabf" stroke-width="4.0" stroke-linecap="round" stroke-linejoin="round"/>
<path d="M800.0 839.7 C807.3 840.3 830.4 839.7 843.7 843.6 C856.9 847.6 871.5 858.9 879.4 863.5 C887.4 868.1 889.4 870.1 891.3 871.4" fill="none" stroke="#f7fabf" stroke-width="4.0" stroke-linecap="round" stroke-linejoin="round"/>
<path d="M1169.4 565.6 C1167.4 576.9 1162.7 608.7 1157.4 633.1 C1152.2 657.6 1144.2 687.4 1137.6 712.6 C1131.0 737.7 1123.7 765.5 1117.7 784.1 C1111.8 802.6 1104.5 809.2 1101.8 823.8 C1099.2 838.3 1103.2 856.9 1101.8 871.4 C1100.5 886.0 1097.9 899.2 1093.9 911.2 C1089.9 923.1 1080.7 934.1 1078.0 942.9 C1075.4 951.7 1078.0 960.5 1078.0 964.0" fill="none" stroke="#f7fabf" stroke-width="4.0" stroke-linecap="round" stroke-linejoin="round"/>
<path d="M1189.2 569.6 C1187.2 580.2 1181.3 610.6 1177.3 633.1 C1173.3 655.7 1166.7 687.4 1165.4 704.6 C1164.1 721.8 1168.7 731.1 1169.4 736.4" fill="none" stroke="#f7fabf" stroke-width="4.0" stroke-linecap="round" stroke-linejoin="round"/>
<path d="M1201.1 593.4 C1204.4 602.0 1213.0 626.5 1221.0 645.1 C1228.9 663.6 1239.5 686.8 1248.8 704.6 C1258.1 722.5 1270.0 737.7 1276.6 752.3 C1283.2 766.9 1285.9 780.1 1288.5 792.0 C1291.2 803.9 1291.8 818.5 1292.5 823.8" fill="none" stroke="#f7fabf" stroke-width="4.0" stroke-linecap="round" stroke-linejoin="round"/>
<path d="M1141.6 927.0 C1142.2 921.8 1141.6 904.5 1145.5 895.3 C1149.5 886.0 1153.5 878.1 1165.4 871.4 C1177.3 864.8 1201.1 861.5 1217.0 855.6 C1232.9 849.6 1246.1 840.3 1260.7 835.7 C1275.3 831.1 1291.2 828.4 1304.4 827.8 C1317.6 827.1 1334.2 831.1 1340.1 831.7" fill="none" stroke="#f7fabf" stroke-width="4.0" stroke-linecap="round" stroke-linejoin="round"/>
<path d="M1129.6 946.9 C1131.6 943.6 1136.6 935.7 1141.6 927.0 C1146.5 918.4 1156.1 904.5 1159.4 895.3 C1162.7 886.0 1161.1 875.4 1161.4 871.4" fill="none" stroke="#f7fabf" stroke-width="4.0" stroke-linecap="round" stroke-linejoin="round"/>
<path d="M1149.5 585.5 C1157.4 586.8 1182.6 588.8 1197.2 593.4 C1211.7 598.1 1220.3 606.7 1236.9 613.3 C1253.4 619.9 1286.5 629.8 1296.5 633.1" fill="none" stroke="#f7fabf" stroke-width="4.0" stroke-linecap="round" stroke-linejoin="round"/>
<path d="M1105.8 514.0 C1105.2 518.0 1100.5 529.9 1101.8 537.8 C1103.2 545.8 1106.5 555.7 1113.8 561.7 C1121.0 567.6 1136.3 572.9 1145.5 573.6 C1154.8 574.2 1165.4 567.0 1169.4 565.6" fill="none" stroke="#f7fabf" stroke-width="4.0" stroke-linecap="round" stroke-linejoin="round"/>
<path d="M1840.6 609.3 C1843.9 614.6 1855.5 627.9 1860.4 641.1 C1865.4 654.3 1868.7 680.8 1870.4 688.8" fill="none" stroke="#f7fabf" stroke-width="4.0" stroke-linecap="round" stroke-linejoin="round"/>
<path d="M1360.0 867.5 C1367.3 867.5 1385.8 868.1 1403.7 867.5 C1421.6 866.8 1452.0 867.5 1467.2 863.5 C1482.5 859.5 1485.1 852.3 1495.0 843.6 C1505.0 835.0 1521.5 817.2 1526.8 811.9" fill="none" stroke="#f7fabf" stroke-width="4.0" stroke-linecap="round" stroke-linejoin="round"/>
<path d="M1367.9 871.4 C1373.2 878.1 1388.5 899.2 1399.7 911.2 C1411.0 923.1 1426.2 934.1 1435.5 942.9 C1444.7 951.7 1452.0 960.5 1455.3 964.0" fill="none" stroke="#f7fabf" stroke-width="4.0" stroke-linecap="round" stroke-linejoin="round"/>
<path d="M1439.4 545.8 C1442.1 552.4 1448.7 572.3 1455.3 585.5 C1461.9 598.7 1469.9 613.3 1479.1 625.2 C1488.4 637.1 1501.7 644.4 1510.9 657.0 C1520.2 669.6 1530.1 687.4 1534.8 700.7 C1539.4 713.9 1537.4 725.2 1538.7 736.4 C1540.0 747.7 1541.4 758.9 1542.7 768.2 C1544.0 777.5 1546.0 788.0 1546.7 792.0" fill="none" stroke="#f7fabf" stroke-width="4.0" stroke-linecap="round" stroke-linejoin="round"/>
<path d="M1427.5 565.6 C1428.8 563.6 1431.5 556.0 1435.5 553.7 C1439.4 551.4 1446.7 548.4 1451.3 551.7 C1456.0 555.0 1461.3 569.9 1463.3 573.6" fill="none" stroke="#f7fabf" stroke-width="4.0" stroke-linecap="round" stroke-linejoin="round"/>
<path d="M1695.8 839.7 C1705.7 838.8 1734.0 836.1 1755.4 834.0 C1776.9 831.9 1796.9 830.0 1824.3 827.1 C1851.7 824.2 1904.0 818.5 1920.0 816.8" fill="none" stroke="#f7fabf" stroke-width="4.0" stroke-linecap="round" stroke-linejoin="round"/>
<path d="M1626.9 690.5 C1632.3 692.4 1649.1 698.6 1659.0 702.0 C1669.0 705.4 1678.2 707.7 1686.6 711.2 C1695.0 714.6 1698.0 717.3 1709.5 722.7 C1721.0 728.0 1736.3 735.7 1755.4 743.3 C1774.6 751.0 1805.2 762.1 1824.3 768.6 C1843.4 775.1 1854.2 776.6 1870.2 782.3 C1886.1 788.1 1911.7 799.5 1920.0 803.0" fill="none" stroke="#f7fabf" stroke-width="4.0" stroke-linecap="round" stroke-linejoin="round"/>
<path d="M1510.9 664.9 C1516.9 666.2 1534.8 670.2 1546.7 672.9 C1558.6 675.5 1570.5 678.2 1582.4 680.8 C1594.3 683.5 1612.2 687.4 1618.2 688.8" fill="none" stroke="#f7fabf" stroke-width="4.0" stroke-linecap="round" stroke-linejoin="round"/>
<path d="M1695.8 839.7 C1701.9 845.8 1720.6 865.0 1732.5 876.4 C1744.3 887.9 1755.4 897.9 1766.9 908.6 C1778.4 919.3 1793.7 933.1 1801.3 940.7 C1809.0 948.4 1809.8 950.9 1812.8 954.5 C1815.9 958.0 1818.5 960.8 1819.7 962.1" fill="none" stroke="#f7fabf" stroke-width="4.0" stroke-linecap="round" stroke-linejoin="round"/>
<path d="M1920.0 842.0 C1918.6 846.2 1916.0 858.1 1911.5 867.3 C1907.0 876.4 1900.0 888.7 1893.1 897.1 C1886.3 905.5 1877.8 912.8 1870.2 917.8 C1862.5 922.7 1854.9 925.0 1847.2 926.9 C1839.6 928.8 1830.4 926.9 1824.3 929.2 C1818.2 931.5 1812.8 938.8 1810.5 940.7" fill="none" stroke="#f7fabf" stroke-width="4.0" stroke-linecap="round" stroke-linejoin="round"/>
<path d="M1645.3 407.9 C1649.5 415.1 1662.5 436.6 1670.5 451.5 C1678.5 466.4 1689.6 489.7 1693.5 497.4" fill="none" stroke="#f7fabf" stroke-width="4.0" stroke-linecap="round" stroke-linejoin="round"/>
<path d="M1594.8 435.4 L1595.9 518.0" fill="none" stroke="#f7fabf" stroke-width="4.0" stroke-linecap="round" stroke-linejoin="round"/>
<path d="M1535.1 449.2 C1545.0 446.9 1576.4 442.3 1594.8 435.4 C1613.1 428.5 1636.8 412.5 1645.3 407.9" fill="none" stroke="#f7fabf" stroke-width="4.0" stroke-linecap="round" stroke-linejoin="round"/>
<path d="M1652.1 414.8 C1655.6 414.0 1664.0 407.9 1672.8 410.2 C1681.6 412.5 1695.0 423.2 1704.9 428.5 C1714.9 433.9 1720.2 435.8 1732.5 442.3 C1744.7 448.8 1770.7 463.3 1778.4 467.6" fill="none" stroke="#f7fabf" stroke-width="4.0" stroke-linecap="round" stroke-linejoin="round"/>
<path d="M1670.5 451.5 C1677.0 447.7 1702.3 434.7 1709.5 428.5 C1716.8 422.4 1712.2 417.4 1714.1 414.8 C1716.0 412.1 1719.9 412.8 1721.0 412.5" fill="none" stroke="#f7fabf" stroke-width="4.0" stroke-linecap="round" stroke-linejoin="round"/>
<path d="M1640.7 474.4 C1643.0 477.5 1651.0 487.1 1654.4 492.8 C1657.9 498.5 1660.2 502.7 1661.3 508.9 C1662.5 515.0 1661.3 526.1 1661.3 529.5" fill="none" stroke="#f7fabf" stroke-width="4.0" stroke-linecap="round" stroke-linejoin="round"/>
<path d="M1521.3 485.9 C1533.6 486.1 1577.9 487.4 1594.8 487.1 C1611.6 486.7 1609.7 488.8 1622.3 483.6 C1634.9 478.5 1662.5 460.7 1670.5 456.1" fill="none" stroke="#f7fabf" stroke-width="4.0" stroke-linecap="round" stroke-linejoin="round"/>
<path d="M1110.0 523.8 C1111.2 524.0 1116.5 523.3 1117.5 525.0 C1118.5 526.7 1118.5 531.7 1116.2 533.8 C1114.0 535.8 1106.0 534.8 1103.8 537.5 C1101.5 540.2 1102.1 545.8 1102.5 550.0 C1102.9 554.2 1105.0 559.6 1106.2 562.5 C1107.5 565.4 1109.4 566.7 1110.0 567.5" fill="none" stroke="#f7fabf" stroke-width="4.0" stroke-linecap="round" stroke-linejoin="round"/>
<path d="M1480.0 520.3 C1489.6 520.5 1518.3 520.8 1537.4 521.5 C1556.5 522.2 1579.8 523.1 1594.8 524.5 C1609.7 525.8 1617.0 526.4 1626.9 529.5 C1636.8 532.7 1649.8 541.0 1654.4 543.3" fill="none" stroke="#dba45b" stroke-width="6.0" stroke-linecap="round" stroke-linejoin="round"/>
<path d="M800.0 227.1 C802.3 227.2 809.6 229.5 813.8 228.2 C818.0 226.9 819.9 221.7 825.2 219.0 C830.6 216.3 838.6 214.4 845.9 212.1 C853.2 209.8 861.2 207.2 868.9 205.2 C876.5 203.3 886.8 201.0 891.8 200.2 C896.8 199.4 897.0 199.1 898.7 200.7 C900.4 202.3 900.6 206.6 902.1 209.8 C903.7 213.1 905.4 217.9 907.9 220.2 C910.4 222.5 915.1 222.3 917.1 223.6 C919.0 224.9 920.5 225.9 919.4 228.2 C918.2 230.5 913.2 233.9 910.2 237.4 C907.1 240.8 904.1 245.0 901.0 248.9 C897.9 252.7 894.3 255.7 891.8 260.3 C889.3 264.9 887.0 270.7 886.1 276.4 C885.1 282.1 885.7 289.4 886.1 294.8 C886.5 300.1 886.6 303.2 888.4 308.5 C890.1 313.9 893.1 321.5 896.4 326.9 C899.7 332.3 903.3 336.1 907.9 340.7 C912.5 345.3 918.2 349.5 923.9 354.4 C929.7 359.4 936.2 365.5 942.3 370.5 C948.4 375.5 954.2 380.5 960.7 384.3 C967.2 388.1 974.8 390.2 981.3 393.5 C987.8 396.7 993.6 400.9 999.7 403.8 C1005.8 406.7 1010.8 409.0 1018.0 410.7 C1025.3 412.4 1033.0 413.9 1043.3 414.1 C1053.6 414.3 1069.7 413.0 1080.0 411.8 C1090.3 410.7 1097.6 408.8 1105.3 407.2 C1112.9 405.7 1120.2 404.0 1125.9 402.6 C1131.7 401.3 1135.1 398.8 1139.7 399.2 C1144.3 399.6 1148.9 403.4 1153.5 404.9 C1158.1 406.5 1163.4 408.0 1167.2 408.4 C1171.1 408.8 1174.5 405.5 1176.4 407.2 C1178.3 409.0 1177.6 414.5 1178.7 418.7 C1179.9 422.9 1181.4 428.9 1183.3 432.5 C1185.2 436.0 1189.0 438.8 1190.2 440.1" fill="none" stroke="#dba45b" stroke-width="6.0" stroke-linecap="round" stroke-linejoin="round"/>
<path d="M1173.8 410.2 C1174.5 413.2 1175.7 423.2 1178.4 428.5 C1181.0 433.9 1184.9 438.9 1189.8 442.3 C1194.8 445.7 1201.7 449.2 1208.2 449.2 C1214.7 449.2 1222.4 443.8 1228.9 442.3 C1235.4 440.8 1242.2 439.2 1247.2 440.0 C1252.2 440.8 1253.3 444.6 1258.7 446.9 C1264.1 449.2 1272.8 451.9 1279.4 453.8 C1285.9 455.7 1290.8 458.4 1297.7 458.4 C1304.6 458.4 1313.8 455.7 1320.7 453.8 C1327.6 451.9 1336.0 448.0 1339.0 446.9" fill="none" stroke="#dba45b" stroke-width="6.0" stroke-linecap="round" stroke-linejoin="round"/>
<path d="M1339.0 437.7 C1340.9 435.4 1345.9 428.2 1350.5 423.9 C1355.1 419.7 1360.1 416.3 1366.6 412.5 C1373.1 408.6 1381.9 404.4 1389.5 401.0 C1397.2 397.5 1404.8 394.7 1412.5 391.8 C1420.1 388.9 1427.8 385.7 1435.4 383.8 C1443.1 381.9 1450.7 381.1 1458.4 380.3 C1466.0 379.6 1474.4 379.4 1481.3 379.2 C1488.2 379.0 1495.1 381.7 1499.7 379.2 C1504.3 376.7 1505.4 369.8 1508.9 364.3 C1512.3 358.7 1516.5 351.6 1520.4 345.9 C1524.2 340.2 1527.1 335.5 1531.8 329.8 C1536.6 324.2 1546.0 314.9 1548.8 311.9" fill="none" stroke="#dba45b" stroke-width="6.0" stroke-linecap="round" stroke-linejoin="round"/>
<path d="M1548.9 311.9 C1555.4 308.8 1573.0 304.2 1587.9 293.5 C1602.8 282.8 1621.9 261.0 1638.4 247.6 C1654.8 234.2 1670.9 224.7 1686.6 213.2 C1702.3 201.7 1717.2 191.0 1732.5 178.8 C1747.8 166.5 1763.1 150.8 1778.4 139.7 C1793.7 128.6 1809.0 120.6 1824.3 112.2 C1839.6 103.8 1858.7 96.5 1870.2 89.2 C1881.7 82.0 1887.8 73.6 1893.1 68.6 C1898.5 63.6 1900.8 60.9 1902.3 59.4" fill="none" stroke="#dba45b" stroke-width="6.0" stroke-linecap="round" stroke-linejoin="round"/>
<path d="M1339.0 437.7 C1339.0 440.0 1338.6 448.0 1339.0 451.5 C1339.4 454.9 1340.9 457.2 1341.3 458.4" fill="none" stroke="#dba45b" stroke-width="6.0" stroke-linecap="round" stroke-linejoin="round"/>
<path d="M1341.3 451.5 C1345.5 451.1 1358.5 450.0 1366.6 449.2 C1374.6 448.4 1381.9 447.7 1389.5 446.9 C1397.2 446.1 1405.6 444.2 1412.5 444.6 C1419.4 445.0 1425.5 446.5 1430.8 449.2 C1436.2 451.9 1437.0 458.8 1444.6 460.7 C1452.3 462.6 1471.4 460.7 1476.7 460.7" fill="none" stroke="#dba45b" stroke-width="6.0" stroke-linecap="round" stroke-linejoin="round"/>
<path d="M1438.9 383.8 C1439.4 388.2 1441.0 401.2 1442.3 410.2 C1443.7 419.2 1445.8 429.3 1446.9 437.7 C1448.1 446.1 1449.6 453.0 1449.2 460.7 C1448.8 468.3 1446.9 476.0 1444.6 483.6 C1442.3 491.3 1437.7 500.5 1435.4 506.6 C1433.1 512.7 1434.7 514.2 1430.8 520.3 C1427.0 526.5 1417.8 536.7 1412.5 543.3 C1407.1 549.9 1401.0 557.3 1398.7 560.1" fill="none" stroke="#dba45b" stroke-width="6.0" stroke-linecap="round" stroke-linejoin="round"/>
<path d="M1499.7 379.2 C1502.0 382.1 1508.9 391.2 1513.5 396.4 C1518.1 401.6 1523.8 404.8 1527.2 410.2 C1530.7 415.5 1533.0 422.8 1534.1 428.5 C1535.3 434.3 1534.1 441.9 1534.1 444.6" fill="none" stroke="#dba45b" stroke-width="6.0" stroke-linecap="round" stroke-linejoin="round"/>
<path d="M1366.6 506.6 C1370.4 507.0 1381.9 507.3 1389.5 508.9 C1397.2 510.4 1405.6 513.8 1412.5 515.8 C1419.4 517.7 1419.4 519.4 1430.8 520.3 C1442.3 521.3 1465.3 521.3 1481.3 521.5 C1497.4 521.7 1507.5 521.1 1527.2 521.5 C1547.0 521.9 1587.9 523.4 1600.0 523.8" fill="none" stroke="#dba45b" stroke-width="6.0" stroke-linecap="round" stroke-linejoin="round"/>
<path d="M1352.8 479.0 C1350.5 480.2 1342.5 482.5 1339.0 485.9 C1335.6 489.4 1333.7 494.3 1332.1 499.7 C1330.6 505.0 1329.5 512.3 1329.8 518.0 C1330.2 523.8 1332.1 529.9 1334.4 534.1 C1336.7 538.3 1342.1 541.8 1343.6 543.3" fill="none" stroke="#dba45b" stroke-width="6.0" stroke-linecap="round" stroke-linejoin="round"/>
<path d="M1208.2 449.2 C1207.8 451.9 1207.1 459.5 1205.9 465.3 C1204.8 471.0 1204.0 476.7 1201.3 483.6 C1198.6 490.5 1194.4 498.9 1189.8 506.6 C1185.2 514.2 1178.7 523.4 1173.8 529.5 C1168.8 535.6 1162.3 541.0 1160.0 543.3" fill="none" stroke="#dba45b" stroke-width="6.0" stroke-linecap="round" stroke-linejoin="round"/>
<path d="M1228.9 442.3 C1230.0 445.0 1235.4 453.0 1235.7 458.4 C1236.1 463.7 1231.9 471.8 1231.2 474.4" fill="none" stroke="#dba45b" stroke-width="6.0" stroke-linecap="round" stroke-linejoin="round"/>
<path d="M1160.0 567.5 C1163.8 566.4 1177.2 560.7 1183.0 560.7 C1188.7 560.7 1189.5 564.9 1194.4 567.5 C1199.4 570.2 1204.0 576.0 1212.8 576.7 C1221.6 577.5 1237.7 574.0 1247.2 572.1 C1256.8 570.2 1264.1 568.3 1270.2 565.2 C1276.3 562.2 1279.7 556.4 1283.9 553.8 C1288.2 551.1 1289.3 549.6 1295.4 549.2 C1301.5 548.8 1316.5 551.1 1320.7 551.5" fill="none" stroke="#dba45b" stroke-width="6.0" stroke-linecap="round" stroke-linejoin="round"/>
<path d="M1160.0 673.1 C1163.8 673.5 1173.4 676.6 1183.0 675.4 C1192.5 674.3 1205.9 670.4 1217.4 666.2 C1228.9 662.0 1238.4 656.3 1251.8 650.2 C1265.2 644.1 1285.5 635.6 1297.7 629.5 C1310.0 623.4 1315.7 618.4 1325.3 613.4 C1334.8 608.5 1347.4 604.3 1355.1 599.7 C1362.7 595.1 1366.2 590.9 1371.2 585.9 C1376.1 580.9 1379.6 575.2 1384.9 569.8 C1390.3 564.5 1397.9 558.7 1403.3 553.8 C1408.7 548.8 1414.8 542.3 1417.1 540.0" fill="none" stroke="#dba45b" stroke-width="6.0" stroke-linecap="round" stroke-linejoin="round"/>
<path d="M1247.2 540.0 C1248.0 543.8 1249.9 555.3 1251.8 563.0 C1253.7 570.6 1251.0 574.4 1258.7 585.9 C1266.3 597.4 1286.6 616.5 1297.7 631.8 C1308.8 647.1 1315.3 661.3 1325.3 677.7 C1335.2 694.2 1344.8 710.1 1357.4 730.5 C1370.0 750.9 1393.7 788.5 1401.0 800.1" fill="none" stroke="#dba45b" stroke-width="6.0" stroke-linecap="round" stroke-linejoin="round"/>
<path d="M1359.7 540.0 C1363.1 543.1 1375.4 553.8 1380.3 558.4 C1385.3 563.0 1384.2 563.0 1389.5 567.5 C1394.9 572.1 1404.8 579.8 1412.5 585.9 C1420.1 592.0 1429.3 599.3 1435.4 604.3 C1441.6 609.2 1446.9 613.8 1449.2 615.7" fill="none" stroke="#dba45b" stroke-width="6.0" stroke-linecap="round" stroke-linejoin="round"/>
<path d="M1187.5 540.0 C1187.2 543.1 1187.5 552.6 1185.2 558.4 C1183.0 564.1 1178.0 570.2 1173.8 574.4 C1169.6 578.6 1162.3 582.1 1160.0 583.6" fill="none" stroke="#dba45b" stroke-width="6.0" stroke-linecap="round" stroke-linejoin="round"/>
<path d="M1080.0 641.1 C1085.0 636.5 1100.9 622.6 1109.8 613.3 C1118.7 604.0 1125.7 593.4 1133.6 585.5 C1141.6 577.5 1148.2 570.3 1157.4 565.6 C1166.7 561.0 1181.9 562.3 1189.2 557.7 C1196.5 553.1 1198.5 545.1 1201.1 537.8 C1203.8 530.5 1204.4 518.0 1205.1 514.0" fill="none" stroke="#dba45b" stroke-width="6.0" stroke-linecap="round" stroke-linejoin="round"/>
<path d="M1080.0 641.1 C1085.0 643.1 1100.2 649.0 1109.8 653.0 C1119.4 657.0 1126.3 661.6 1137.6 664.9 C1148.8 668.2 1164.1 672.2 1177.3 672.9 C1190.5 673.5 1205.1 672.2 1217.0 668.9 C1228.9 665.6 1238.9 657.6 1248.8 653.0 C1258.7 648.4 1272.0 643.1 1276.6 641.1" fill="none" stroke="#dba45b" stroke-width="6.0" stroke-linecap="round" stroke-linejoin="round"/>
<path d="M1189.2 557.7 C1194.5 560.3 1210.4 570.9 1221.0 573.6 C1231.6 576.2 1243.5 576.2 1252.8 573.6 C1262.0 570.9 1269.3 562.3 1276.6 557.7 C1283.9 553.1 1293.1 547.8 1296.5 545.8" fill="none" stroke="#dba45b" stroke-width="6.0" stroke-linecap="round" stroke-linejoin="round"/>
<path d="M1360.0 728.5 C1365.3 737.7 1378.5 761.6 1391.8 784.1 C1405.0 806.6 1425.5 840.3 1439.4 863.5 C1453.3 886.7 1465.2 906.3 1475.2 923.1 C1485.1 939.8 1495.0 957.2 1499.0 964.0" fill="none" stroke="#dba45b" stroke-width="6.0" stroke-linecap="round" stroke-linejoin="round"/>
<path d="M1638.0 250.7 C1642.0 257.3 1653.9 277.1 1661.8 290.4 C1669.8 303.6 1678.4 318.2 1685.7 330.1 C1693.0 342.0 1700.2 353.3 1705.5 361.9 C1710.8 370.5 1714.5 373.8 1717.4 381.7 C1720.4 389.7 1722.1 399.6 1723.4 409.5 C1724.7 419.5 1726.4 430.1 1725.4 441.3 C1724.4 452.6 1721.4 467.1 1717.4 477.0 C1713.5 487.0 1705.5 494.7 1701.6 500.9 C1697.6 507.0 1694.9 511.8 1693.6 514.0" fill="none" stroke="#dba45b" stroke-width="6.0" stroke-linecap="round" stroke-linejoin="round"/>
<path d="M1439.4 381.7 C1440.4 388.3 1443.7 408.2 1445.4 421.4 C1447.0 434.7 1450.4 447.9 1449.4 461.2 C1448.4 474.4 1441.1 494.3 1439.4 500.9" fill="none" stroke="#dba45b" stroke-width="6.0" stroke-linecap="round" stroke-linejoin="round"/>
<path d="M1495.0 379.7 C1499.0 383.4 1512.9 394.6 1518.9 401.6 C1524.8 408.5 1528.1 414.2 1530.8 421.4 C1533.4 428.7 1534.1 441.3 1534.8 445.3" fill="none" stroke="#dba45b" stroke-width="6.0" stroke-linecap="round" stroke-linejoin="round"/>
<path d="M1689.6 514.0 C1693.0 515.3 1702.2 518.0 1709.5 521.9 C1716.8 525.9 1729.4 535.2 1733.3 537.8" fill="none" stroke="#dba45b" stroke-width="6.0" stroke-linecap="round" stroke-linejoin="round"/>
<path d="M1480.0 520.3 C1489.6 520.5 1518.3 520.8 1537.4 521.5 C1556.5 522.2 1579.8 523.1 1594.8 524.5 C1609.7 525.8 1617.0 526.4 1626.9 529.5 C1636.8 532.7 1649.8 541.0 1654.4 543.3" fill="none" stroke="#fcd6a4" stroke-width="5.0" stroke-linecap="round" stroke-linejoin="round"/>
<path d="M800.0 227.1 C802.3 227.2 809.6 229.5 813.8 228.2 C818.0 226.9 819.9 221.7 825.2 219.0 C830.6 216.3 838.6 214.4 845.9 212.1 C853.2 209.8 861.2 207.2 868.9 205.2 C876.5 203.3 886.8 201.0 891.8 200.2 C896.8 199.4 897.0 199.1 898.7 200.7 C900.4 202.3 900.6 206.6 902.1 209.8 C903.7 213.1 905.4 217.9 907.9 220.2 C910.4 222.5 915.1 222.3 917.1 223.6 C919.0 224.9 920.5 225.9 919.4 228.2 C918.2 230.5 913.2 233.9 910.2 237.4 C907.1 240.8 904.1 245.0 901.0 248.9 C897.9 252.7 894.3 255.7 891.8 260.3 C889.3 264.9 887.0 270.7 886.1 276.4 C885.1 282.1 885.7 289.4 886.1 294.8 C886.5 300.1 886.6 303.2 888.4 308.5 C890.1 313.9 893.1 321.5 896.4 326.9 C899.7 332.3 903.3 336.1 907.9 340.7 C912.5 345.3 918.2 349.5 923.9 354.4 C929.7 359.4 936.2 365.5 942.3 370.5 C948.4 375.5 954.2 380.5 960.7 384.3 C967.2 388.1 974.8 390.2 981.3 393.5 C987.8 396.7 993.6 400.9 999.7 403.8 C1005.8 406.7 1010.8 409.0 1018.0 410.7 C1025.3 412.4 1033.0 413.9 1043.3 414.1 C1053.6 414.3 1069.7 413.0 1080.0 411.8 C1090.3 410.7 1097.6 408.8 1105.3 407.2 C1112.9 405.7 1120.2 404.0 1125.9 402.6 C1131.7 401.3 1135.1 398.8 1139.7 399.2 C1144.3 399.6 1148.9 403.4 1153.5 404.9 C1158.1 406.5 1163.4 408.0 1167.2 408.4 C1171.1 408.8 1174.5 405.5 1176.4 407.2 C1178.3 409.0 1177.6 414.5 1178.7 418.7 C1179.9 422.9 1181.4 428.9 1183.3 432.5 C1185.2 436.0 1189.0 438.8 1190.2 440.1" fill="none" stroke="#fcd6a4" stroke-width="5.0" stroke-linecap="round" stroke-linejoin="round"/>
<path d="M1173.8 410.2 C1174.5 413.2 1175.7 423.2 1178.4 428.5 C1181.0 433.9 1184.9 438.9 1189.8 442.3 C1194.8 445.7 1201.7 449.2 1208.2 449.2 C1214.7 449.2 1222.4 443.8 1228.9 442.3 C1235.4 440.8 1242.2 439.2 1247.2 440.0 C1252.2 440.8 1253.3 444.6 1258.7 446.9 C1264.1 449.2 1272.8 451.9 1279.4 453.8 C1285.9 455.7 1290.8 458.4 1297.7 458.4 C1304.6 458.4 1313.8 455.7 1320.7 453.8 C1327.6 451.9 1336.0 448.0 1339.0 446.9" fill="none" stroke="#fcd6a4" stroke-width="5.0" stroke-linecap="round" stroke-linejoin="round"/>
<path d="M1339.0 437.7 C1340.9 435.4 1345.9 428.2 1350.5 423.9 C1355.1 419.7 1360.1 416.3 1366.6 412.5 C1373.1 408.6 1381.9 404.4 1389.5 401.0 C1397.2 397.5 1404.8 394.7 1412.5 391.8 C1420.1 388.9 1427.8 385.7 1435.4 383.8 C1443.1 381.9 1450.7 381.1 1458.4 380.3 C1466.0 379.6 1474.4 379.4 1481.3 379.2 C1488.2 379.0 1495.1 381.7 1499.7 379.2 C1504.3 376.7 1505.4 369.8 1508.9 364.3 C1512.3 358.7 1516.5 351.6 1520.4 345.9 C1524.2 340.2 1527.1 335.5 1531.8 329.8 C1536.6 324.2 1546.0 314.9 1548.8 311.9" fill="none" stroke="#fcd6a4" stroke-width="5.0" stroke-linecap="round" stroke-linejoin="round"/>
<path d="M1548.9 311.9 C1555.4 308.8 1573.0 304.2 1587.9 293.5 C1602.8 282.8 1621.9 261.0 1638.4 247.6 C1654.8 234.2 1670.9 224.7 1686.6 213.2 C1702.3 201.7 1717.2 191.0 1732.5 178.8 C1747.8 166.5 1763.1 150.8 1778.4 139.7 C1793.7 128.6 1809.0 120.6 1824.3 112.2 C1839.6 103.8 1858.7 96.5 1870.2 89.2 C1881.7 82.0 1887.8 73.6 1893.1 68.6 C1898.5 63.6 1900.8 60.9 1902.3 59.4" fill="none" stroke="#fcd6a4" stroke-width="5.0" stroke-linecap="round" stroke-linejoin="round"/>
<path d="M1339.0 437.7 C1339.0 440.0 1338.6 448.0 1339.0 451.5 C1339.4 454.9 1340.9 457.2 1341.3 458.4" fill="none" stroke="#fcd6a4" stroke-width="5.0" stroke-linecap="round" stroke-linejoin="round"/>
<path d="M1341.3 451.5 C1345.5 451.1 1358.5 450.0 1366.6 449.2 C1374.6 448.4 1381.9 447.7 1389.5 446.9 C1397.2 446.1 1405.6 444.2 1412.5 444.6 C1419.4 445.0 1425.5 446.5 1430.8 449.2 C1436.2 451.9 1437.0 458.8 1444.6 460.7 C1452.3 462.6 1471.4 460.7 1476.7 460.7" fill="none" stroke="#fcd6a4" stroke-width="5.0" stroke-linecap="round" stroke-linejoin="round"/>
<path d="M1438.9 383.8 C1439.4 388.2 1441.0 401.2 1442.3 410.2 C1443.7 419.2 1445.8 429.3 1446.9 437.7 C1448.1 446.1 1449.6 453.0 1449.2 460.7 C1448.8 468.3 1446.9 476.0 1444.6 483.6 C1442.3 491.3 1437.7 500.5 1435.4 506.6 C1433.1 512.7 1434.7 514.2 1430.8 520.3 C1427.0 526.5 1417.8 536.7 1412.5 543.3 C1407.1 549.9 1401.0 557.3 1398.7 560.1" fill="none" stroke="#fcd6a4" stroke-width="5.0" stroke-linecap="round" stroke-linejoin="round"/>
<path d="M1499.7 379.2 C1502.0 382.1 1508.9 391.2 1513.5 396.4 C1518.1 401.6 1523.8 404.8 1527.2 410.2 C1530.7 415.5 1533.0 422.8 1534.1 428.5 C1535.3 434.3 1534.1 441.9 1534.1 444.6" fill="none" stroke="#fcd6a4" stroke-width="5.0" stroke-linecap="round" stroke-linejoin="round"/>
<path d="M1366.6 506.6 C1370.4 507.0 1381.9 507.3 1389.5 508.9 C1397.2 510.4 1405.6 513.8 1412.5 515.8 C1419.4 517.7 1419.4 519.4 1430.8 520.3 C1442.3 521.3 1465.3 521.3 1481.3 521.5 C1497.4 521.7 1507.5 521.1 1527.2 521.5 C1547.0 521.9 1587.9 523.4 1600.0 523.8" fill="none" stroke="#fcd6a4" stroke-width="5.0" stroke-linecap="round" stroke-linejoin="round"/>
<path d="M1352.8 479.0 C1350.5 480.2 1342.5 482.5 1339.0 485.9 C1335.6 489.4 1333.7 494.3 1332.1 499.7 C1330.6 505.0 1329.5 512.3 1329.8 518.0 C1330.2 523.8 1332.1 529.9 1334.4 534.1 C1336.7 538.3 1342.1 541.8 1343.6 543.3" fill="none" stroke="#fcd6a4" stroke-width="5.0" stroke-linecap="round" stroke-linejoin="round"/>
<path d="M1208.2 449.2 C1207.8 451.9 1207.1 459.5 1205.9 465.3 C1204.8 471.0 1204.0 476.7 1201.3 483.6 C1198.6 490.5 1194.4 498.9 1189.8 506.6 C1185.2 514.2 1178.7 523.4 1173.8 529.5 C1168.8 535.6 1162.3 541.0 1160.0 543.3" fill="none" stroke="#fcd6a4" stroke-width="5.0" stroke-linecap="round" stroke-linejoin="round"/>
<path d="M1228.9 442.3 C1230.0 445.0 1235.4 453.0 1235.7 458.4 C1236.1 463.7 1231.9 471.8 1231.2 474.4" fill="none" stroke="#fcd6a4" stroke-width="5.0" stroke-linecap="round" stroke-linejoin="round"/>
<path d="M1160.0 567.5 C1163.8 566.4 1177.2 560.7 1183.0 560.7 C1188.7 560.7 1189.5 564.9 1194.4 567.5 C1199.4 570.2 1204.0 576.0 1212.8 576.7 C1221.6 577.5 1237.7 574.0 1247.2 572.1 C1256.8 570.2 1264.1 568.3 1270.2 565.2 C1276.3 562.2 1279.7 556.4 1283.9 553.8 C1288.2 551.1 1289.3 549.6 1295.4 549.2 C1301.5 548.8 1316.5 551.1 1320.7 551.5" fill="none" stroke="#fcd6a4" stroke-width="5.0" stroke-linecap="round" stroke-linejoin="round"/>
<path d="M1160.0 673.1 C1163.8 673.5 1173.4 676.6 1183.0 675.4 C1192.5 674.3 1205.9 670.4 1217.4 666.2 C1228.9 662.0 1238.4 656.3 1251.8 650.2 C1265.2 644.1 1285.5 635.6 1297.7 629.5 C1310.0 623.4 1315.7 618.4 1325.3 613.4 C1334.8 608.5 1347.4 604.3 1355.1 599.7 C1362.7 595.1 1366.2 590.9 1371.2 585.9 C1376.1 580.9 1379.6 575.2 1384.9 569.8 C1390.3 564.5 1397.9 558.7 1403.3 553.8 C1408.7 548.8 1414.8 542.3 1417.1 540.0" fill="none" stroke="#fcd6a4" stroke-width="5.0" stroke-linecap="round" stroke-linejoin="round"/>
<path d="M1247.2 540.0 C1248.0 543.8 1249.9 555.3 1251.8 563.0 C1253.7 570.6 1251.0 574.4 1258.7 585.9 C1266.3 597.4 1286.6 616.5 1297.7 631.8 C1308.8 647.1 1315.3 661.3 1325.3 677.7 C1335.2 694.2 1344.8 710.1 1357.4 730.5 C1370.0 750.9 1393.7 788.5 1401.0 800.1" fill="none" stroke="#fcd6a4" stroke-width="5.0" stroke-linecap="round" stroke-linejoin="round"/>
<path d="M1359.7 540.0 C1363.1 543.1 1375.4 553.8 1380.3 558.4 C1385.3 563.0 1384.2 563.0 1389.5 567.5 C1394.9 572.1 1404.8 579.8 1412.5 585.9 C1420.1 592.0 1429.3 599.3 1435.4 604.3 C1441.6 609.2 1446.9 613.8 1449.2 615.7" fill="none" stroke="#fcd6a4" stroke-width="5.0" stroke-linecap="round" stroke-linejoin="round"/>
<path d="M1187.5 540.0 C1187.2 543.1 1187.5 552.6 1185.2 558.4 C1183.0 564.1 1178.0 570.2 1173.8 574.4 C1169.6 578.6 1162.3 582.1 1160.0 583.6" fill="none" stroke="#fcd6a4" stroke-width="5.0" stroke-linecap="round" stroke-linejoin="round"/>
<path d="M1080.0 641.1 C1085.0 636.5 1100.9 622.6 1109.8 613.3 C1118.7 604.0 1125.7 593.4 1133.6 585.5 C1141.6 577.5 1148.2 570.3 1157.4 565.6 C1166.7 561.0 1181.9 562.3 1189.2 557.7 C1196.5 553.1 1198.5 545.1 1201.1 537.8 C1203.8 530.5 1204.4 518.0 1205.1 514.0" fill="none" stroke="#fcd6a4" stroke-width="5.0" stroke-linecap="round" stroke-linejoin="round"/>
<path d="M1080.0 641.1 C1085.0 643.1 1100.2 649.0 1109.8 653.0 C1119.4 657.0 1126.3 661.6 1137.6 664.9 C1148.8 668.2 1164.1 672.2 1177.3 672.9 C1190.5 673.5 1205.1 672.2 1217.0 668.9 C1228.9 665.6 1238.9 657.6 1248.8 653.0 C1258.7 648.4 1272.0 643.1 1276.6 641.1" fill="none" stroke="#fcd6a4" stroke-width="5.0" stroke-linecap="round" stroke-linejoin="round"/>
<path d="M1189.2 557.7 C1194.5 560.3 1210.4 570.9 1221.0 573.6 C1231.6 576.2 1243.5 576.2 1252.8 573.6 C1262.0 570.9 1269.3 562.3 1276.6 557.7 C1283.9 553.1 1293.1 547.8 1296.5 545.8" fill="none" stroke="#fcd6a4" stroke-width="5.0" stroke-linecap="round" stroke-linejoin="round"/>
<path d="M1360.0 728.5 C1365.3 737.7 1378.5 761.6 1391.8 784.1 C1405.0 806.6 1425.5 840.3 1439.4 863.5 C1453.3 886.7 1465.2 906.3 1475.2 923.1 C1485.1 939.8 1495.0 957.2 1499.0 964.0" fill="none" stroke="#fcd6a4" stroke-width="5.0" stroke-linecap="round" stroke-linejoin="round"/>
<path d="M1638.0 250.7 C1642.0 257.3 1653.9 277.1 1661.8 290.4 C1669.8 303.6 1678.4 318.2 1685.7 330.1 C1693.0 342.0 1700.2 353.3 1705.5 361.9 C1710.8 370.5 1714.5 373.8 1717.4 381.7 C1720.4 389.7 1722.1 399.6 1723.4 409.5 C1724.7 419.5 1726.4 430.1 1725.4 441.3 C1724.4 452.6 1721.4 467.1 1717.4 477.0 C1713.5 487.0 1705.5 494.7 1701.6 500.9 C1697.6 507.0 1694.9 511.8 1693.6 514.0" fill="none" stroke="#fcd6a4" stroke-width="5.0" stroke-linecap="round" stroke-linejoin="round"/>
<path d="M1439.4 381.7 C1440.4 388.3 1443.7 408.2 1445.4 421.4 C1447.0 434.7 1450.4 447.9 1449.4 461.2 C1448.4 474.4 1441.1 494.3 1439.4 500.9" fill="none" stroke="#fcd6a4" stroke-width="5.0" stroke-linecap="round" stroke-linejoin="round"/>
<path d="M1495.0 379.7 C1499.0 383.4 1512.9 394.6 1518.9 401.6 C1524.8 408.5 1528.1 414.2 1530.8 421.4 C1533.4 428.7 1534.1 441.3 1534.8 445.3" fill="none" stroke="#fcd6a4" stroke-width="5.0" stroke-linecap="round" stroke-linejoin="round"/>
<path d="M1689.6 514.0 C1693.0 515.3 1702.2 518.0 1709.5 521.9 C1716.8 525.9 1729.4 535.2 1733.3 537.8" fill="none" stroke="#fcd6a4" stroke-width="5.0" stroke-linecap="round" stroke-linejoin="round"/>
<path d="M800.0 371.7 C803.8 370.5 815.3 366.5 823.0 364.8 C830.6 363.0 839.8 361.7 845.9 361.3 C852.0 360.9 856.2 360.9 859.7 362.5 C863.1 364.0 864.6 367.6 866.6 370.5 C868.5 373.4 867.7 377.0 871.2 379.7 C874.6 382.4 881.1 384.9 887.2 386.6 C893.3 388.3 901.8 388.3 907.9 390.0 C914.0 391.7 919.7 394.4 923.9 396.9 C928.2 399.4 930.4 403.2 933.1 404.9 C935.8 406.7 935.8 407.8 940.0 407.2 C944.2 406.7 955.3 402.4 958.4 401.5" fill="none" stroke="#dd8a72" stroke-width="7.0" stroke-linecap="round" stroke-linejoin="round"/>
<path d="M1380.3 464.1 C1383.8 465.4 1393.7 469.3 1401.0 472.1 C1408.3 475.0 1415.9 479.0 1424.0 481.3 C1432.0 483.6 1442.7 484.4 1449.2 485.9 C1455.7 487.4 1458.4 487.1 1463.0 490.5 C1467.6 493.9 1473.3 502.4 1476.7 506.6 C1480.2 510.8 1482.9 511.9 1483.6 515.8 C1484.4 519.6 1482.9 522.1 1481.3 529.5 C1479.8 536.9 1475.6 555.0 1474.4 560.1" fill="none" stroke="#dd8a72" stroke-width="7.0" stroke-linecap="round" stroke-linejoin="round"/>
<path d="M1476.7 458.4 C1481.3 457.2 1495.1 453.8 1504.3 451.5 C1513.5 449.2 1522.3 447.3 1531.8 444.6 C1541.4 441.9 1550.3 439.6 1561.7 435.4 C1573.0 431.2 1593.6 422.0 1600.0 419.4" fill="none" stroke="#dd8a72" stroke-width="7.0" stroke-linecap="round" stroke-linejoin="round"/>
<path d="M1531.8 444.6 C1532.2 447.3 1534.9 455.7 1534.1 460.7 C1533.4 465.6 1531.4 469.5 1527.2 474.4 C1523.0 479.4 1515.0 485.2 1508.9 490.5 C1502.8 495.9 1494.7 502.4 1490.5 506.6 C1486.3 510.8 1484.8 514.2 1483.6 515.8" fill="none" stroke="#dd8a72" stroke-width="7.0" stroke-linecap="round" stroke-linejoin="round"/>
<path d="M1580.4 430.2 C1586.7 426.7 1607.9 415.3 1618.2 409.5 C1628.4 403.8 1632.1 399.3 1642.0 395.6 C1651.9 392.0 1666.5 390.7 1677.7 387.7 C1689.0 384.7 1699.6 382.7 1709.5 377.8 C1719.4 372.8 1728.7 363.9 1737.3 357.9 C1745.9 351.9 1753.2 348.0 1761.1 342.0 C1769.1 336.1 1781.0 325.5 1785.0 322.2" fill="none" stroke="#dd8a72" stroke-width="7.0" stroke-linecap="round" stroke-linejoin="round"/>
<path d="M1160.0 728.2 C1163.8 729.7 1173.4 734.7 1183.0 737.4 C1192.5 740.1 1205.9 743.1 1217.4 744.3 C1228.9 745.4 1242.2 745.4 1251.8 744.3 C1261.4 743.1 1267.1 740.3 1274.8 737.4 C1282.4 734.5 1290.1 730.9 1297.7 727.1 C1305.4 723.2 1313.0 718.8 1320.7 714.4 C1328.3 710.0 1336.0 705.6 1343.6 700.7 C1351.3 695.7 1358.9 688.8 1366.6 684.6 C1374.2 680.4 1381.9 678.9 1389.5 675.4 C1397.2 672.0 1405.6 668.9 1412.5 663.9 C1419.4 659.0 1425.1 651.7 1430.8 645.6 C1436.6 639.5 1442.7 633.7 1446.9 627.2 C1451.1 620.7 1453.4 613.4 1456.1 606.6 C1458.8 599.7 1460.7 593.2 1463.0 585.9 C1465.3 578.6 1467.6 569.8 1469.9 563.0 C1472.2 556.1 1475.2 548.4 1476.7 544.6 C1478.3 540.8 1478.7 540.8 1479.0 540.0" fill="none" stroke="#dd8a72" stroke-width="7.0" stroke-linecap="round" stroke-linejoin="round"/>
<path d="M863.5 964.0 C864.5 955.2 864.9 926.6 869.5 911.2 C874.1 895.7 883.1 882.7 891.3 871.4 C899.6 860.2 911.2 854.2 919.1 843.6 C927.1 833.1 932.4 817.8 939.0 807.9 C945.6 798.0 948.9 790.0 958.9 784.1 C968.8 778.1 988.7 776.8 998.6 772.2 C1008.5 767.5 1013.1 764.9 1018.4 756.3 C1023.7 747.7 1025.7 732.4 1030.4 720.5 C1035.0 708.6 1039.6 696.0 1046.2 684.8 C1052.9 673.5 1064.4 660.3 1070.1 653.0 C1075.7 645.7 1078.3 643.1 1080.0 641.1" fill="none" stroke="#dd8a72" stroke-width="7.0" stroke-linecap="round" stroke-linejoin="round"/>
<path d="M1062.1 676.8 C1066.8 678.8 1080.7 683.5 1089.9 688.8 C1099.2 694.0 1108.5 702.7 1117.7 708.6 C1127.0 714.6 1136.3 719.9 1145.5 724.5 C1154.8 729.1 1163.4 733.4 1173.3 736.4 C1183.3 739.4 1194.5 741.0 1205.1 742.4 C1215.7 743.7 1231.6 744.0 1236.9 744.4" fill="none" stroke="#dd8a72" stroke-width="7.0" stroke-linecap="round" stroke-linejoin="round"/>
<path d="M1653.9 545.8 C1653.9 550.4 1651.3 563.6 1653.9 573.6 C1656.5 583.5 1663.8 596.1 1669.8 605.3 C1675.7 614.6 1683.7 620.6 1689.6 629.2 C1695.6 637.8 1702.2 648.4 1705.5 657.0 C1708.8 665.6 1709.2 670.2 1709.5 680.8 C1709.8 691.4 1708.8 708.6 1707.5 720.5 C1706.2 732.4 1703.2 740.4 1701.6 752.3 C1699.9 764.2 1698.3 777.5 1697.6 792.0 C1696.9 806.6 1697.6 831.7 1697.6 839.7" fill="none" stroke="#dd8a72" stroke-width="7.0" stroke-linecap="round" stroke-linejoin="round"/>
<path d="M1653.9 545.8 C1657.9 547.1 1668.5 549.1 1677.7 553.7 C1687.0 558.3 1696.3 567.6 1709.5 573.6 C1722.7 579.5 1739.3 584.8 1757.2 589.5 C1775.0 594.1 1798.2 599.7 1816.7 601.4 C1835.3 603.0 1851.2 600.1 1868.4 599.4 C1885.6 598.7 1911.4 597.7 1920.0 597.4" fill="none" stroke="#dd8a72" stroke-width="7.0" stroke-linecap="round" stroke-linejoin="round"/>
<path d="M1884.3 195.1 C1885.6 198.4 1888.9 207.6 1892.2 214.9 C1895.5 222.2 1902.1 234.8 1904.1 238.8" fill="none" stroke="#dd8a72" stroke-width="7.0" stroke-linecap="round" stroke-linejoin="round"/>
<path d="M800.0 371.7 C803.8 370.5 815.3 366.5 823.0 364.8 C830.6 363.0 839.8 361.7 845.9 361.3 C852.0 360.9 856.2 360.9 859.7 362.5 C863.1 364.0 864.6 367.6 866.6 370.5 C868.5 373.4 867.7 377.0 871.2 379.7 C874.6 382.4 881.1 384.9 887.2 386.6 C893.3 388.3 901.8 388.3 907.9 390.0 C914.0 391.7 919.7 394.4 923.9 396.9 C928.2 399.4 930.4 403.2 933.1 404.9 C935.8 406.7 935.8 407.8 940.0 407.2 C944.2 406.7 955.3 402.4 958.4 401.5" fill="none" stroke="#f9b29c" stroke-width="6" stroke-linecap="round" stroke-linejoin="round"/>
<path d="M1380.3 464.1 C1383.8 465.4 1393.7 469.3 1401.0 472.1 C1408.3 475.0 1415.9 479.0 1424.0 481.3 C1432.0 483.6 1442.7 484.4 1449.2 485.9 C1455.7 487.4 1458.4 487.1 1463.0 490.5 C1467.6 493.9 1473.3 502.4 1476.7 506.6 C1480.2 510.8 1482.9 511.9 1483.6 515.8 C1484.4 519.6 1482.9 522.1 1481.3 529.5 C1479.8 536.9 1475.6 555.0 1474.4 560.1" fill="none" stroke="#f9b29c" stroke-width="6" stroke-linecap="round" stroke-linejoin="round"/>
<path d="M1476.7 458.4 C1481.3 457.2 1495.1 453.8 1504.3 451.5 C1513.5 449.2 1522.3 447.3 1531.8 444.6 C1541.4 441.9 1550.3 439.6 1561.7 435.4 C1573.0 431.2 1593.6 422.0 1600.0 419.4" fill="none" stroke="#f9b29c" stroke-width="6" stroke-linecap="round" stroke-linejoin="round"/>
<path d="M1531.8 444.6 C1532.2 447.3 1534.9 455.7 1534.1 460.7 C1533.4 465.6 1531.4 469.5 1527.2 474.4 C1523.0 479.4 1515.0 485.2 1508.9 490.5 C1502.8 495.9 1494.7 502.4 1490.5 506.6 C1486.3 510.8 1484.8 514.2 1483.6 515.8" fill="none" stroke="#f9b29c" stroke-width="6" stroke-linecap="round" stroke-linejoin="round"/>
<path d="M1580.4 430.2 C1586.7 426.7 1607.9 415.3 1618.2 409.5 C1628.4 403.8 1632.1 399.3 1642.0 395.6 C1651.9 392.0 1666.5 390.7 1677.7 387.7 C1689.0 384.7 1699.6 382.7 1709.5 377.8 C1719.4 372.8 1728.7 363.9 1737.3 357.9 C1745.9 351.9 1753.2 348.0 1761.1 342.0 C1769.1 336.1 1781.0 325.5 1785.0 322.2" fill="none" stroke="#f9b29c" stroke-width="6" stroke-linecap="round" stroke-linejoin="round"/>
<path d="M1160.0 728.2 C1163.8 729.7 1173.4 734.7 1183.0 737.4 C1192.5 740.1 1205.9 743.1 1217.4 744.3 C1228.9 745.4 1242.2 745.4 1251.8 744.3 C1261.4 743.1 1267.1 740.3 1274.8 737.4 C1282.4 734.5 1290.1 730.9 1297.7 727.1 C1305.4 723.2 1313.0 718.8 1320.7 714.4 C1328.3 710.0 1336.0 705.6 1343.6 700.7 C1351.3 695.7 1358.9 688.8 1366.6 684.6 C1374.2 680.4 1381.9 678.9 1389.5 675.4 C1397.2 672.0 1405.6 668.9 1412.5 663.9 C1419.4 659.0 1425.1 651.7 1430.8 645.6 C1436.6 639.5 1442.7 633.7 1446.9 627.2 C1451.1 620.7 1453.4 613.4 1456.1 606.6 C1458.8 599.7 1460.7 593.2 1463.0 585.9 C1465.3 578.6 1467.6 569.8 1469.9 563.0 C1472.2 556.1 1475.2 548.4 1476.7 544.6 C1478.3 540.8 1478.7 540.8 1479.0 540.0" fill="none" stroke="#f9b29c" stroke-width="6" stroke-linecap="round" stroke-linejoin="round"/>
<path d="M863.5 964.0 C864.5 955.2 864.9 926.6 869.5 911.2 C874.1 895.7 883.1 882.7 891.3 871.4 C899.6 860.2 911.2 854.2 919.1 843.6 C927.1 833.1 932.4 817.8 939.0 807.9 C945.6 798.0 948.9 790.0 958.9 784.1 C968.8 778.1 988.7 776.8 998.6 772.2 C1008.5 767.5 1013.1 764.9 1018.4 756.3 C1023.7 747.7 1025.7 732.4 1030.4 720.5 C1035.0 708.6 1039.6 696.0 1046.2 684.8 C1052.9 673.5 1064.4 660.3 1070.1 653.0 C1075.7 645.7 1078.3 643.1 1080.0 641.1" fill="none" stroke="#f9b29c" stroke-width="6" stroke-linecap="round" stroke-linejoin="round"/>
<path d="M1062.1 676.8 C1066.8 678.8 1080.7 683.5 1089.9 688.8 C1099.2 694.0 1108.5 702.7 1117.7 708.6 C1127.0 714.6 1136.3 719.9 1145.5 724.5 C1154.8 729.1 1163.4 733.4 1173.3 736.4 C1183.3 739.4 1194.5 741.0 1205.1 742.4 C1215.7 743.7 1231.6 744.0 1236.9 744.4" fill="none" stroke="#f9b29c" stroke-width="6" stroke-linecap="round" stroke-linejoin="round"/>
<path d="M1653.9 545.8 C1653.9 550.4 1651.3 563.6 1653.9 573.6 C1656.5 583.5 1663.8 596.1 1669.8 605.3 C1675.7 614.6 1683.7 620.6 1689.6 629.2 C1695.6 637.8 1702.2 648.4 1705.5 657.0 C1708.8 665.6 1709.2 670.2 1709.5 680.8 C1709.8 691.4 1708.8 708.6 1707.5 720.5 C1706.2 732.4 1703.2 740.4 1701.6 752.3 C1699.9 764.2 1698.3 777.5 1697.6 792.0 C1696.9 806.6 1697.6 831.7 1697.6 839.7" fill="none" stroke="#f9b29c" stroke-width="6" stroke-linecap="round" stroke-linejoin="round"/>
<path d="M1653.9 545.8 C1657.9 547.1 1668.5 549.1 1677.7 553.7 C1687.0 558.3 1696.3 567.6 1709.5 573.6 C1722.7 579.5 1739.3 584.8 1757.2 589.5 C1775.0 594.1 1798.2 599.7 1816.7 601.4 C1835.3 603.0 1851.2 600.1 1868.4 599.4 C1885.6 598.7 1911.4 597.7 1920.0 597.4" fill="none" stroke="#f9b29c" stroke-width="6" stroke-linecap="round" stroke-linejoin="round"/>
<path d="M1884.3 195.1 C1885.6 198.4 1888.9 207.6 1892.2 214.9 C1895.5 222.2 1902.1 234.8 1904.1 238.8" fill="none" stroke="#f9b29c" stroke-width="6" stroke-linecap="round" stroke-linejoin="round"/>
<path d="M1105.8 835.7 C1103.8 836.0 1096.5 835.0 1093.9 837.7 C1091.3 840.3 1088.6 847.3 1089.9 851.6 C1091.3 855.9 1097.9 860.5 1101.8 863.5 C1105.8 866.5 1111.8 868.5 1113.8 869.5" fill="none" stroke="#d4647c" stroke-width="3.6" stroke-linecap="round" stroke-linejoin="round"/>
<path d="M868.9 901.7 C868.5 900.5 865.8 896.5 866.6 894.8 C867.3 893.1 871.3 891.0 873.4 891.4 C875.6 891.7 877.3 895.0 879.2 897.1 C881.1 899.2 884.0 902.8 884.9 904.0" fill="none" stroke="#d4647c" stroke-width="3.6" stroke-linecap="round" stroke-linejoin="round"/>
<path d="M868.9 901.7 C868.1 902.5 864.3 904.7 864.3 906.3 C864.3 907.8 866.6 910.9 868.9 910.9 C871.2 910.9 876.5 907.0 878.0 906.3" fill="none" stroke="#d4647c" stroke-width="3.6" stroke-linecap="round" stroke-linejoin="round"/>
<path d="M1105.8 835.7 C1103.8 836.0 1096.5 835.0 1093.9 837.7 C1091.3 840.3 1088.6 847.3 1089.9 851.6 C1091.3 855.9 1097.9 860.5 1101.8 863.5 C1105.8 866.5 1111.8 868.5 1113.8 869.5" fill="none" stroke="#e892a2" stroke-width="2.6" stroke-linecap="round" stroke-linejoin="round"/>
<path d="M868.9 901.7 C868.5 900.5 865.8 896.5 866.6 894.8 C867.3 893.1 871.3 891.0 873.4 891.4 C875.6 891.7 877.3 895.0 879.2 897.1 C881.1 899.2 884.0 902.8 884.9 904.0" fill="none" stroke="#e892a2" stroke-width="2.6" stroke-linecap="round" stroke-linejoin="round"/>
<path d="M868.9 901.7 C868.1 902.5 864.3 904.7 864.3 906.3 C864.3 907.8 866.6 910.9 868.9 910.9 C871.2 910.9 876.5 907.0 878.0 906.3" fill="none" stroke="#e892a2" stroke-width="2.6" stroke-linecap="round" stroke-linejoin="round"/>
<path d="M1689.6 191.1 C1692.3 194.4 1699.6 204.3 1705.5 211.0 C1711.5 217.6 1718.1 223.5 1725.4 230.8 C1732.7 238.1 1743.3 246.7 1749.2 254.6 C1755.2 262.6 1757.2 270.5 1761.1 278.5 C1765.1 286.4 1769.1 295.0 1773.0 302.3 C1777.0 309.6 1781.7 314.2 1785.0 322.2 C1788.3 330.1 1790.9 340.0 1792.9 350.0 C1794.9 359.9 1795.6 373.1 1796.9 381.7 C1798.2 390.3 1801.5 393.6 1800.9 401.6 C1800.2 409.5 1796.2 419.5 1792.9 429.4 C1789.6 439.3 1785.6 450.6 1781.0 461.2 C1776.4 471.8 1769.7 484.1 1765.1 492.9 C1760.5 501.7 1755.2 510.5 1753.2 514.0" fill="none" stroke="#d4647c" stroke-width="7.2" stroke-linecap="round" stroke-linejoin="round"/>
<path d="M1785.0 322.2 C1790.3 320.2 1806.1 314.9 1816.7 310.2 C1827.3 305.6 1838.6 299.0 1848.5 294.4 C1858.4 289.7 1867.7 287.7 1876.3 282.4 C1884.9 277.1 1893.5 269.9 1900.1 262.6 C1906.8 255.3 1912.7 243.4 1916.0 238.8 C1919.3 234.1 1919.3 235.4 1920.0 234.8" fill="none" stroke="#d4647c" stroke-width="7.2" stroke-linecap="round" stroke-linejoin="round"/>
<path d="M1904.1 68.0 L1920.0 79.9" fill="none" stroke="#d4647c" stroke-width="7.2" stroke-linecap="round" stroke-linejoin="round"/>
<path d="M1908.1 230.8 L1920.0 238.8" fill="none" stroke="#d4647c" stroke-width="7.2" stroke-linecap="round" stroke-linejoin="round"/>
<path d="M1401.0 800.1 C1402.9 799.2 1404.8 795.3 1412.5 794.8 C1420.1 794.3 1437.3 797.8 1446.9 797.1 C1456.5 796.3 1462.2 794.8 1469.9 790.2 C1477.5 785.6 1485.2 776.8 1492.8 769.5 C1500.5 762.3 1508.1 753.1 1515.8 746.6 C1523.4 740.1 1530.7 734.7 1538.7 730.5 C1546.8 726.3 1553.8 725.2 1564.0 721.3 C1574.2 717.5 1594.0 709.8 1600.0 707.6" fill="none" stroke="#d4647c" stroke-width="7.2" stroke-linecap="round" stroke-linejoin="round"/>
<path d="M1451.5 615.7 C1454.6 618.0 1463.0 624.2 1469.9 629.5 C1476.7 634.9 1485.5 642.1 1492.8 647.9 C1500.1 653.6 1507.7 658.6 1513.5 663.9 C1519.2 669.3 1523.4 673.9 1527.2 680.0 C1531.1 686.1 1533.7 693.0 1536.4 700.7 C1539.1 708.3 1541.4 718.3 1543.3 725.9 C1545.2 733.6 1546.8 739.3 1547.9 746.6 C1549.0 753.8 1549.0 760.6 1550.2 769.5 C1551.3 778.4 1554.0 795.0 1554.8 800.1" fill="none" stroke="#d4647c" stroke-width="7.2" stroke-linecap="round" stroke-linejoin="round"/>
<path d="M1753.2 514.0 C1749.9 518.0 1739.3 529.2 1733.3 537.8 C1727.4 546.4 1723.4 554.4 1717.4 565.6 C1711.5 576.9 1705.5 592.1 1697.6 605.3 C1689.6 618.6 1679.7 632.5 1669.8 645.1 C1659.9 657.6 1649.9 670.2 1638.0 680.8 C1626.1 691.4 1611.5 701.3 1598.3 708.6 C1585.1 715.9 1567.8 721.2 1558.6 724.5 C1549.3 727.8 1545.3 727.8 1542.7 728.5" fill="none" stroke="#d4647c" stroke-width="7.2" stroke-linecap="round" stroke-linejoin="round"/>
<path d="M1542.7 728.5 C1544.0 735.1 1548.0 753.6 1550.6 768.2 C1553.3 782.7 1555.9 800.0 1558.6 815.8 C1561.2 831.7 1563.9 847.6 1566.5 863.5 C1569.2 879.4 1572.2 894.4 1574.5 911.2 C1576.8 927.9 1579.4 955.2 1580.4 964.0" fill="none" stroke="#d4647c" stroke-width="7.2" stroke-linecap="round" stroke-linejoin="round"/>
<path d="M1590.4 680.8 C1595.0 681.8 1608.9 685.1 1618.2 686.8 C1627.4 688.4 1641.3 690.1 1646.0 690.7" fill="none" stroke="#d4647c" stroke-width="7.2" stroke-linecap="round" stroke-linejoin="round"/>
<path d="M1920.0 927.0 L1892.2 946.9" fill="none" stroke="#d4647c" stroke-width="7.2" stroke-linecap="round" stroke-linejoin="round"/>
<path d="M863.5 905.2 C867.5 905.5 878.1 909.5 887.4 907.2 C896.6 904.9 908.6 898.6 919.1 891.3 C929.7 884.0 941.0 871.4 950.9 863.5 C960.9 855.6 968.1 848.3 978.7 843.6 C989.3 839.0 1003.2 836.4 1014.5 835.7 C1025.7 835.0 1035.7 836.4 1046.2 839.7 C1056.8 843.0 1066.1 851.3 1078.0 855.6 C1089.9 859.9 1104.5 865.5 1117.7 865.5 C1131.0 865.5 1146.2 860.5 1157.4 855.6 C1168.7 850.6 1176.0 841.7 1185.2 835.7 C1194.5 829.7 1203.1 823.1 1213.0 819.8 C1223.0 816.5 1234.2 815.2 1244.8 815.8 C1255.4 816.5 1264.7 821.1 1276.6 823.8 C1288.5 826.4 1302.4 831.1 1316.3 831.7 C1330.2 832.4 1352.7 828.4 1360.0 827.8" fill="none" stroke="#d4647c" stroke-width="7.2" stroke-linecap="round" stroke-linejoin="round"/>
<path d="M1360.0 823.8 C1364.0 821.1 1375.2 811.9 1383.8 807.9 C1392.4 803.9 1401.0 801.6 1411.6 800.0 C1422.2 798.3 1436.8 800.6 1447.4 798.0 C1458.0 795.3 1470.5 786.4 1475.2 784.1" fill="none" stroke="#d4647c" stroke-width="7.2" stroke-linecap="round" stroke-linejoin="round"/>
<path d="M1689.6 191.1 C1692.3 194.4 1699.6 204.3 1705.5 211.0 C1711.5 217.6 1718.1 223.5 1725.4 230.8 C1732.7 238.1 1743.3 246.7 1749.2 254.6 C1755.2 262.6 1757.2 270.5 1761.1 278.5 C1765.1 286.4 1769.1 295.0 1773.0 302.3 C1777.0 309.6 1781.7 314.2 1785.0 322.2 C1788.3 330.1 1790.9 340.0 1792.9 350.0 C1794.9 359.9 1795.6 373.1 1796.9 381.7 C1798.2 390.3 1801.5 393.6 1800.9 401.6 C1800.2 409.5 1796.2 419.5 1792.9 429.4 C1789.6 439.3 1785.6 450.6 1781.0 461.2 C1776.4 471.8 1769.7 484.1 1765.1 492.9 C1760.5 501.7 1755.2 510.5 1753.2 514.0" fill="none" stroke="#e892a2" stroke-width="6.2" stroke-linecap="round" stroke-linejoin="round"/>
<path d="M1785.0 322.2 C1790.3 320.2 1806.1 314.9 1816.7 310.2 C1827.3 305.6 1838.6 299.0 1848.5 294.4 C1858.4 289.7 1867.7 287.7 1876.3 282.4 C1884.9 277.1 1893.5 269.9 1900.1 262.6 C1906.8 255.3 1912.7 243.4 1916.0 238.8 C1919.3 234.1 1919.3 235.4 1920.0 234.8" fill="none" stroke="#e892a2" stroke-width="6.2" stroke-linecap="round" stroke-linejoin="round"/>
<path d="M1904.1 68.0 L1920.0 79.9" fill="none" stroke="#e892a2" stroke-width="6.2" stroke-linecap="round" stroke-linejoin="round"/>
<path d="M1908.1 230.8 L1920.0 238.8" fill="none" stroke="#e892a2" stroke-width="6.2" stroke-linecap="round" stroke-linejoin="round"/>
<path d="M1401.0 800.1 C1402.9 799.2 1404.8 795.3 1412.5 794.8 C1420.1 794.3 1437.3 797.8 1446.9 797.1 C1456.5 796.3 1462.2 794.8 1469.9 790.2 C1477.5 785.6 1485.2 776.8 1492.8 769.5 C1500.5 762.3 1508.1 753.1 1515.8 746.6 C1523.4 740.1 1530.7 734.7 1538.7 730.5 C1546.8 726.3 1553.8 725.2 1564.0 721.3 C1574.2 717.5 1594.0 709.8 1600.0 707.6" fill="none" stroke="#e892a2" stroke-width="6.2" stroke-linecap="round" stroke-linejoin="round"/>
<path d="M1451.5 615.7 C1454.6 618.0 1463.0 624.2 1469.9 629.5 C1476.7 634.9 1485.5 642.1 1492.8 647.9 C1500.1 653.6 1507.7 658.6 1513.5 663.9 C1519.2 669.3 1523.4 673.9 1527.2 680.0 C1531.1 686.1 1533.7 693.0 1536.4 700.7 C1539.1 708.3 1541.4 718.3 1543.3 725.9 C1545.2 733.6 1546.8 739.3 1547.9 746.6 C1549.0 753.8 1549.0 760.6 1550.2 769.5 C1551.3 778.4 1554.0 795.0 1554.8 800.1" fill="none" stroke="#e892a2" stroke-width="6.2" stroke-linecap="round" stroke-linejoin="round"/>
<path d="M1753.2 514.0 C1749.9 518.0 1739.3 529.2 1733.3 537.8 C1727.4 546.4 1723.4 554.4 1717.4 565.6 C1711.5 576.9 1705.5 592.1 1697.6 605.3 C1689.6 618.6 1679.7 632.5 1669.8 645.1 C1659.9 657.6 1649.9 670.2 1638.0 680.8 C1626.1 691.4 1611.5 701.3 1598.3 708.6 C1585.1 715.9 1567.8 721.2 1558.6 724.5 C1549.3 727.8 1545.3 727.8 1542.7 728.5" fill="none" stroke="#e892a2" stroke-width="6.2" stroke-linecap="round" stroke-linejoin="round"/>
<path d="M1542.7 728.5 C1544.0 735.1 1548.0 753.6 1550.6 768.2 C1553.3 782.7 1555.9 800.0 1558.6 815.8 C1561.2 831.7 1563.9 847.6 1566.5 863.5 C1569.2 879.4 1572.2 894.4 1574.5 911.2 C1576.8 927.9 1579.4 955.2 1580.4 964.0" fill="none" stroke="#e892a2" stroke-width="6.2" stroke-linecap="round" stroke-linejoin="round"/>
<path d="M1590.4 680.8 C1595.0 681.8 1608.9 685.1 1618.2 686.8 C1627.4 688.4 1641.3 690.1 1646.0 690.7" fill="none" stroke="#e892a2" stroke-width="6.2" stroke-linecap="round" stroke-linejoin="round"/>
<path d="M1920.0 927.0 L1892.2 946.9" fill="none" stroke="#e892a2" stroke-width="6.2" stroke-linecap="round" stroke-linejoin="round"/>
<path d="M863.5 905.2 C867.5 905.5 878.1 909.5 887.4 907.2 C896.6 904.9 908.6 898.6 919.1 891.3 C929.7 884.0 941.0 871.4 950.9 863.5 C960.9 855.6 968.1 848.3 978.7 843.6 C989.3 839.0 1003.2 836.4 1014.5 835.7 C1025.7 835.0 1035.7 836.4 1046.2 839.7 C1056.8 843.0 1066.1 851.3 1078.0 855.6 C1089.9 859.9 1104.5 865.5 1117.7 865.5 C1131.0 865.5 1146.2 860.5 1157.4 855.6 C1168.7 850.6 1176.0 841.7 1185.2 835.7 C1194.5 829.7 1203.1 823.1 1213.0 819.8 C1223.0 816.5 1234.2 815.2 1244.8 815.8 C1255.4 816.5 1264.7 821.1 1276.6 823.8 C1288.5 826.4 1302.4 831.1 1316.3 831.7 C1330.2 832.4 1352.7 828.4 1360.0 827.8" fill="none" stroke="#e892a2" stroke-width="6.2" stroke-linecap="round" stroke-linejoin="round"/>
<path d="M1360.0 823.8 C1364.0 821.1 1375.2 811.9 1383.8 807.9 C1392.4 803.9 1401.0 801.6 1411.6 800.0 C1422.2 798.3 1436.8 800.6 1447.4 798.0 C1458.0 795.3 1470.5 786.4 1475.2 784.1" fill="none" stroke="#e892a2" stroke-width="6.2" stroke-linecap="round" stroke-linejoin="round"/>
<path d="M1093.700 447.500L1191 515" stroke="#555" stroke-width="0.9" fill="none"/>
<circle cx="1104.5" cy="455.0" r="1.200" fill="#222"/>
<circle cx="1115.3" cy="462.5" r="1.200" fill="#222"/>
<circle cx="1126.1" cy="470.0" r="1.200" fill="#222"/>
<circle cx="1136.9" cy="477.5" r="1.200" fill="#222"/>
<circle cx="1147.8" cy="485.0" r="1.200" fill="#222"/>
<circle cx="1158.6" cy="492.5" r="1.200" fill="#222"/>
<circle cx="1169.4" cy="500.0" r="1.200" fill="#222"/>
<circle cx="1180.2" cy="507.5" r="1.200" fill="#222"/>
<rect x="1092.2" y="446.0" width="3" height="3" fill="#8461c4" opacity=".8"/>
<rect x="1151.5" y="487.0" width="3" height="3" fill="#8461c4" opacity=".8"/>
<rect x="1189.5" y="513.5" width="3" height="3" fill="#8461c4" opacity=".8"/>
<text x="1217" y="473" font-size="16.1" fill="#2e2e2e" text-anchor="middle" letter-spacing="0.25" stroke="#fff" stroke-width="2.4" stroke-linejoin="round" paint-order="stroke" stroke-opacity=".85">Oran</text>
<text x="1699" y="364" font-size="15.6" fill="#2e2e2e" text-anchor="middle" letter-spacing="0.25" stroke="#fff" stroke-width="2.4" stroke-linejoin="round" paint-order="stroke" stroke-opacity=".85">Bir El Djir</text>
<text x="878" y="306" font-size="14.1" fill="#2e2e2e" text-anchor="middle" letter-spacing="0.25" stroke="#fff" stroke-width="2.4" stroke-linejoin="round" paint-order="stroke" stroke-opacity=".85">Mers El Kebir</text>
<text x="1368" y="863" font-size="14.1" fill="#2e2e2e" text-anchor="middle" letter-spacing="0.25" stroke="#fff" stroke-width="2.4" stroke-linejoin="round" paint-order="stroke" stroke-opacity=".85">Es-Senia</text>
<text x="1212" y="494" font-size="12.6" fill="#2e2e2e" text-anchor="middle" letter-spacing="0.25" stroke="#fff" stroke-width="2.4" stroke-linejoin="round" paint-order="stroke" stroke-opacity=".85">Cité Ennasr</text>
<text x="1345" y="468" font-size="12.6" fill="#2e2e2e" text-anchor="middle" letter-spacing="0.25" stroke="#fff" stroke-width="2.4" stroke-linejoin="round" paint-order="stroke" stroke-opacity=".85">Cité Omaria</text>
<text x="1335" y="507" font-size="12.6" fill="#2e2e2e" text-anchor="middle" letter-spacing="0.25" stroke="#fff" stroke-width="2.4" stroke-linejoin="round" paint-order="stroke" stroke-opacity=".85">Cité M'Naouer</text>
<text x="1234" y="521" font-size="12.6" fill="#2e2e2e" text-anchor="middle" letter-spacing="0.25" stroke="#fff" stroke-width="2.4" stroke-linejoin="round" paint-order="stroke" stroke-opacity=".85">El Medina El</text>
<text x="1234" y="537" font-size="12.6" fill="#2e2e2e" text-anchor="middle" letter-spacing="0.25" stroke="#fff" stroke-width="2.4" stroke-linejoin="round" paint-order="stroke" stroke-opacity=".85">Djedida المدينة</text>
<text x="1234" y="552" font-size="12.6" fill="#2e2e2e" text-anchor="middle" letter-spacing="0.25" stroke="#fff" stroke-width="2.4" stroke-linejoin="round" paint-order="stroke" stroke-opacity=".85">الجديدة</text>
<text x="1345" y="554" font-size="12.6" fill="#2e2e2e" text-anchor="middle" letter-spacing="0.25" stroke="#fff" stroke-width="2.4" stroke-linejoin="round" paint-order="stroke" stroke-opacity=".85">Cité El Khaldia</text>
<text x="1461" y="430" font-size="12.6" fill="#2e2e2e" text-anchor="middle" letter-spacing="0.25" stroke="#fff" stroke-width="2.4" stroke-linejoin="round" paint-order="stroke" stroke-opacity=".85">Cité Seddikia</text>
<text x="1419" y="466" font-size="12.6" fill="#2e2e2e" text-anchor="middle" letter-spacing="0.25" stroke="#fff" stroke-width="2.4" stroke-linejoin="round" paint-order="stroke" stroke-opacity=".85">حي المقطع</text>
<text x="1492" y="484" font-size="12.6" fill="#2e2e2e" text-anchor="middle" letter-spacing="0.25" stroke="#fff" stroke-width="2.4" stroke-linejoin="round" paint-order="stroke" stroke-opacity=".85">Cité Ibn Rochd</text>
<text x="1580" y="484" font-size="12.6" fill="#2e2e2e" text-anchor="middle" letter-spacing="0.25" stroke="#fff" stroke-width="2.4" stroke-linejoin="round" paint-order="stroke" stroke-opacity=".85">Cité USTO</text>
<text x="1365" y="530" font-size="12.6" fill="#2e2e2e" text-anchor="middle" letter-spacing="0.25" stroke="#fff" stroke-width="2.4" stroke-linejoin="round" paint-order="stroke" stroke-opacity=".85">حي المقري</text>
<text x="1494" y="544" font-size="12.6" fill="#2e2e2e" text-anchor="middle" letter-spacing="0.25" stroke="#fff" stroke-width="2.4" stroke-linejoin="round" paint-order="stroke" stroke-opacity=".85">Cité Djamel</text>
<text x="1494" y="559" font-size="12.6" fill="#2e2e2e" text-anchor="middle" letter-spacing="0.25" stroke="#fff" stroke-width="2.4" stroke-linejoin="round" paint-order="stroke" stroke-opacity=".85">Eddine</text>
<text x="1443" y="586" font-size="12.6" fill="#2e2e2e" text-anchor="middle" letter-spacing="0.25" stroke="#fff" stroke-width="2.4" stroke-linejoin="round" paint-order="stroke" stroke-opacity=".85">Cité Zitoune</text>
<text x="1505" y="616" font-size="12.6" fill="#2e2e2e" text-anchor="middle" letter-spacing="0.25" stroke="#fff" stroke-width="2.4" stroke-linejoin="round" paint-order="stroke" stroke-opacity=".85">Cité Fellaoucene</text>
<text x="1415" y="638" font-size="12.6" fill="#2e2e2e" text-anchor="middle" letter-spacing="0.25" stroke="#fff" stroke-width="2.4" stroke-linejoin="round" paint-order="stroke" stroke-opacity=".85">Cité Dhaya</text>
<text x="1360" y="612" font-size="12.6" fill="#2e2e2e" text-anchor="middle" letter-spacing="0.25" stroke="#fff" stroke-width="2.4" stroke-linejoin="round" paint-order="stroke" stroke-opacity=".85">Cité Ibn Cina</text>
<text x="1255" y="606" font-size="12.6" fill="#2e2e2e" text-anchor="middle" letter-spacing="0.25" stroke="#fff" stroke-width="2.4" stroke-linejoin="round" paint-order="stroke" stroke-opacity=".85">Cité El Ghoualem</text>
<text x="1153" y="610" font-size="12.6" fill="#2e2e2e" text-anchor="middle" letter-spacing="0.25" stroke="#fff" stroke-width="2.4" stroke-linejoin="round" paint-order="stroke" stroke-opacity=".85">Cité Essaada</text>
<text x="1138" y="561" font-size="12.6" fill="#2e2e2e" text-anchor="middle" letter-spacing="0.25" stroke="#fff" stroke-width="2.4" stroke-linejoin="round" paint-order="stroke" stroke-opacity=".85">Cité Ras El</text>
<text x="1138" y="578" font-size="12.6" fill="#2e2e2e" text-anchor="middle" letter-spacing="0.25" stroke="#fff" stroke-width="2.4" stroke-linejoin="round" paint-order="stroke" stroke-opacity=".85">Ain حي رأس</text>
<text x="1138" y="593" font-size="12.6" fill="#2e2e2e" text-anchor="middle" letter-spacing="0.25" stroke="#fff" stroke-width="2.4" stroke-linejoin="round" paint-order="stroke" stroke-opacity=".85">العين</text>
<text x="1125" y="519" font-size="11.6" fill="#2e2e2e" text-anchor="middle" letter-spacing="0.25" stroke="#fff" stroke-width="2.4" stroke-linejoin="round" paint-order="stroke" stroke-opacity=".85">حي الصنوبر</text>
<text x="1045" y="680" font-size="12.6" fill="#2e2e2e" text-anchor="middle" letter-spacing="0.25" stroke="#fff" stroke-width="2.4" stroke-linejoin="round" paint-order="stroke" stroke-opacity=".85">Cité Les Amandiers</text>
<text x="1159" y="698" font-size="12.6" fill="#2e2e2e" text-anchor="middle" letter-spacing="0.25" stroke="#fff" stroke-width="2.4" stroke-linejoin="round" paint-order="stroke" stroke-opacity=".85">Yaghmoracen</text>
<text x="1264" y="695" font-size="12.6" fill="#2e2e2e" text-anchor="middle" letter-spacing="0.25" stroke="#fff" stroke-width="2.4" stroke-linejoin="round" paint-order="stroke" stroke-opacity=".85">Cité Les Palmiers</text>
<text x="955" y="774" font-size="12.6" fill="#2e2e2e" text-anchor="middle" letter-spacing="0.25" stroke="#fff" stroke-width="2.4" stroke-linejoin="round" paint-order="stroke" stroke-opacity=".85">Hassi Bouamama</text>
<text x="879" y="866" font-size="12.6" fill="#2e2e2e" text-anchor="middle" letter-spacing="0.25" stroke="#fff" stroke-width="2.4" stroke-linejoin="round" paint-order="stroke" stroke-opacity=".85">Haï Ben Arba</text>
<text x="1224" y="872" font-size="12.6" fill="#2e2e2e" text-anchor="middle" letter-spacing="0.25" stroke="#fff" stroke-width="2.4" stroke-linejoin="round" paint-order="stroke" stroke-opacity=".85">Cité Commandant</text>
<text x="1224" y="887" font-size="12.6" fill="#2e2e2e" text-anchor="middle" letter-spacing="0.25" stroke="#fff" stroke-width="2.4" stroke-linejoin="round" paint-order="stroke" stroke-opacity=".85">Chérif Yahia</text>
<text x="1118" y="949" font-size="12.6" fill="#2e2e2e" text-anchor="middle" letter-spacing="0.25" stroke="#fff" stroke-width="2.4" stroke-linejoin="round" paint-order="stroke" stroke-opacity=".85">Aïn Beida</text>
<text x="1680" y="885" font-size="12.6" fill="#2e2e2e" text-anchor="middle" letter-spacing="0.25" stroke="#fff" stroke-width="2.4" stroke-linejoin="round" paint-order="stroke" stroke-opacity=".85">Nedjma</text>
<text x="1660" y="712" font-size="12.6" fill="#2e2e2e" text-anchor="middle" letter-spacing="0.25" stroke="#fff" stroke-width="2.4" stroke-linejoin="round" paint-order="stroke" stroke-opacity=".85">Emir Abdelkader</text>
<text x="1859" y="691" font-size="12.6" fill="#2e2e2e" text-anchor="middle" letter-spacing="0.25" stroke="#fff" stroke-width="2.4" stroke-linejoin="round" paint-order="stroke" stroke-opacity=".85">Cité 344 logements</text>
<text x="1857" y="637" font-size="12.6" fill="#2e2e2e" text-anchor="middle" letter-spacing="0.25" stroke="#fff" stroke-width="2.4" stroke-linejoin="round" paint-order="stroke" stroke-opacity=".85">Sidi Maarouf</text>
<text x="1769" y="555" font-size="12.1" fill="#2e2e2e" text-anchor="middle" letter-spacing="0.25" stroke="#fff" stroke-width="2.4" stroke-linejoin="round" paint-order="stroke" stroke-opacity=".85">Douar Sidi</text>
<text x="1769" y="569" font-size="12.1" fill="#2e2e2e" text-anchor="middle" letter-spacing="0.25" stroke="#fff" stroke-width="2.4" stroke-linejoin="round" paint-order="stroke" stroke-opacity=".85">Maârouf</text>
<text x="1682" y="536" font-size="12.6" fill="#2e2e2e" text-anchor="middle" letter-spacing="0.25" stroke="#fff" stroke-width="2.4" stroke-linejoin="round" paint-order="stroke" stroke-opacity=".85">Cité Essabah</text>
<text x="1731" y="476" font-size="12.6" fill="#2e2e2e" text-anchor="middle" letter-spacing="0.25" stroke="#fff" stroke-width="2.4" stroke-linejoin="round" paint-order="stroke" stroke-opacity=".85">El Yasmine</text>
<text x="1731" y="491" font-size="12.6" fill="#2e2e2e" text-anchor="middle" letter-spacing="0.25" stroke="#fff" stroke-width="2.4" stroke-linejoin="round" paint-order="stroke" stroke-opacity=".85">2</text>
<text x="1725" y="513" font-size="11.6" fill="#2e2e2e" text-anchor="middle" letter-spacing="0.25" stroke="#fff" stroke-width="2.4" stroke-linejoin="round" paint-order="stroke" stroke-opacity=".85">حي الياسمين</text>
<text x="1778" y="445" font-size="11.6" fill="#2e2e2e" text-anchor="middle" letter-spacing="0.25" stroke="#fff" stroke-width="2.4" stroke-linejoin="round" paint-order="stroke" stroke-opacity=".85">حي الرياض</text>
<text x="1851" y="339" font-size="12.6" fill="#2e2e2e" text-anchor="middle" letter-spacing="0.25" stroke="#fff" stroke-width="2.4" stroke-linejoin="round" paint-order="stroke" stroke-opacity=".85">Sidi Bachir</text>
<text x="1568" y="333" font-size="12.6" fill="#2e2e2e" text-anchor="middle" letter-spacing="0.25" stroke="#fff" stroke-width="2.4" stroke-linejoin="round" paint-order="stroke" stroke-opacity=".85">Haï Akid Lotfi</text>
<text x="1625" y="293" font-size="12.6" fill="#2e2e2e" text-anchor="middle" letter-spacing="0.25" stroke="#fff" stroke-width="2.4" stroke-linejoin="round" paint-order="stroke" stroke-opacity=".85">Haï Khmisti</text>
<text x="1720" y="146" font-size="12.6" fill="#2e2e2e" text-anchor="middle" letter-spacing="0.25" stroke="#fff" stroke-width="2.4" stroke-linejoin="round" paint-order="stroke" stroke-opacity=".85">Haï El Menzah</text>
<text x="1870" y="103" font-size="11.6" fill="#2e2e2e" text-anchor="middle" letter-spacing="0.25" stroke="#fff" stroke-width="2.4" stroke-linejoin="round" paint-order="stroke" stroke-opacity=".85">بلقايد</text>
<text x="1795" y="950" font-size="12.6" fill="#2e2e2e" text-anchor="middle" letter-spacing="0.25" stroke="#fff" stroke-width="2.4" stroke-linejoin="round" paint-order="stroke" stroke-opacity=".85">Hassi Labiod</text>
<text x="1268" y="766" font-size="11.6" fill="#2e2e2e" text-anchor="middle" letter-spacing="0.25" stroke="#fff" stroke-width="2.4" stroke-linejoin="round" paint-order="stroke" stroke-opacity=".85">حي سي رضوان</text>
<text x="1713" y="168" font-size="10.5" fill="#666" text-anchor="middle" font-style="italic" stroke="#fff" stroke-width="2.4" stroke-linejoin="round" paint-order="stroke" stroke-opacity=".85">Canastel</text>
<text x="1758" y="69" font-size="10.5" fill="#666" text-anchor="middle" font-style="italic" stroke="#fff" stroke-width="2.4" stroke-linejoin="round" paint-order="stroke" stroke-opacity=".85">Canastel</text>
<text x="940" y="961" font-size="11.5" fill="#555" text-anchor="middle" font-style="italic" stroke="#fff" stroke-width="2.4" stroke-linejoin="round" paint-order="stroke" stroke-opacity=".85">Nouvelle</text>
<text x="1164" y="783" font-size="9.5" fill="#4a6b4a" text-anchor="middle" stroke="#fff" stroke-width="2.4" stroke-linejoin="round" paint-order="stroke" stroke-opacity=".85">مقبرة عين</text>
<text x="1164" y="795" font-size="9.5" fill="#4a6b4a" text-anchor="middle" stroke="#fff" stroke-width="2.4" stroke-linejoin="round" paint-order="stroke" stroke-opacity=".85">البيضاء</text>
<text x="1472" y="737" font-size="10" fill="#6c93b8" text-anchor="middle" font-style="italic">Daya</text>
<text x="1472" y="749" font-size="10" fill="#6c93b8" text-anchor="middle" font-style="italic">Morsli</text>
<text x="1374" y="695" font-size="10" fill="#8b6f8b" text-anchor="middle" font-style="italic">Zone Industrielle</text>
<text x="1374" y="707" font-size="10" fill="#8b6f8b" text-anchor="middle" font-style="italic">d'Es-Senia</text>
<text x="1374" y="719" font-size="10" fill="#8b6f8b" text-anchor="middle" font-style="italic">2</text>
<text x="880" y="633" font-size="11" fill="#8d72a6" text-anchor="middle" transform="rotate(-74 880 633)">Daira Oran</text>
<text x="1094" y="348" font-size="11" fill="#8d72a6" text-anchor="middle" transform="rotate(24 1094 348)">Daira Ain Turk</text>
<text x="1797" y="527" font-size="10.5" fill="#8d72a6" text-anchor="middle" transform="rotate(2 1797 527)">Daira Es Senia</text>
<text x="1094" y="806" font-size="10.5" fill="#8d72a6" text-anchor="middle" transform="rotate(-8 1094 806)">Daira Oran</text>
<text x="997" y="844" font-size="10.5" fill="#8d72a6" text-anchor="middle" transform="rotate(-5 997 844)">Daira Es-Senia</text>
<text x="1903" y="928" font-size="10.5" fill="#8d72a6" text-anchor="middle" transform="rotate(-40 1903 928)">Daira Es</text>
<text x="988" y="172" font-size="10.5" fill="#6c7ff0" text-anchor="middle" font-style="italic" transform="rotate(21.5 988 172)">Oran pêcherie - Ain Turk les Dunes</text>
<text x="1340" y="406" font-size="9.5" fill="#8b6f8b" text-anchor="middle">ميناء وهران</text>
<text x="861" y="265" font-size="10" fill="#7a5a3a" text-anchor="middle" stroke="#fff" stroke-width="2.4" stroke-linejoin="round" paint-order="stroke" stroke-opacity=".85">جبل سانتون</text>
<text x="861" y="278" font-size="10" fill="#7a5a3a" text-anchor="middle" stroke="#fff" stroke-width="2.4" stroke-linejoin="round" paint-order="stroke" stroke-opacity=".85">310 m</text>
<path d="M856 247l3.500 -6 3.500 6z" fill="#d08f55"/>
<text x="1737" y="240" font-size="8.6" fill="#222" text-anchor="middle" transform="rotate(52 1737 240)" stroke="#fff" stroke-width="1.6" stroke-linejoin="round" paint-order="stroke" stroke-opacity=".85">4ème Rocade d'Oran</text>
<text x="1720" y="301" font-size="8.6" fill="#222" text-anchor="middle" transform="rotate(-17 1720 301)" stroke="#fff" stroke-width="1.6" stroke-linejoin="round" paint-order="stroke" stroke-opacity=".85">Boulevard Millenium</text>
<text x="1565" y="374" font-size="8.6" fill="#222" text-anchor="middle" transform="rotate(-19 1565 374)" stroke="#fff" stroke-width="1.6" stroke-linejoin="round" paint-order="stroke" stroke-opacity=".85">Boulevard Millenium</text>
<text x="1621" y="372" font-size="8.6" fill="#222" text-anchor="middle" transform="rotate(62 1621 372)" stroke="#fff" stroke-width="1.6" stroke-linejoin="round" paint-order="stroke" stroke-opacity=".85">Rue 5 Juillet</text>
<text x="1800" y="319" font-size="8.6" fill="#222" text-anchor="middle" transform="rotate(-17 1800 319)" stroke="#fff" stroke-width="1.6" stroke-linejoin="round" paint-order="stroke" stroke-opacity=".85">Alger - Oran</text>
<text x="1682" y="391" font-size="8.6" fill="#222" text-anchor="middle" transform="rotate(-17 1682 391)" stroke="#fff" stroke-width="1.6" stroke-linejoin="round" paint-order="stroke" stroke-opacity=".85">Alger - Oran</text>
<text x="1588" y="426" font-size="8.6" fill="#222" text-anchor="middle" transform="rotate(-20 1588 426)" stroke="#fff" stroke-width="1.6" stroke-linejoin="round" paint-order="stroke" stroke-opacity=".85">Alger - Oran</text>
<text x="1375" y="582" font-size="8.6" fill="#222" text-anchor="middle" transform="rotate(38 1375 582)" stroke="#fff" stroke-width="1.6" stroke-linejoin="round" paint-order="stroke" stroke-opacity=".85">Avenue des 40 Martyrs</text>
<text x="1212" y="738" font-size="8.6" fill="#222" text-anchor="middle" transform="rotate(8 1212 738)" stroke="#fff" stroke-width="1.6" stroke-linejoin="round" paint-order="stroke" stroke-opacity=".85">3ème Boulevard Périphérique</text>
<text x="1323" y="790" font-size="8.6" fill="#222" text-anchor="middle" transform="rotate(72 1323 790)" stroke="#fff" stroke-width="1.6" stroke-linejoin="round" paint-order="stroke" stroke-opacity=".85">Avenue des Frères Ammari</text>
<text x="1232" y="818" font-size="8.6" fill="#222" text-anchor="middle" transform="rotate(-8 1232 818)" stroke="#fff" stroke-width="1.6" stroke-linejoin="round" paint-order="stroke" stroke-opacity=".85">4ème Rocade d'Oran</text>
<text x="1390" y="815" font-size="8.6" fill="#222" text-anchor="middle" transform="rotate(-14 1390 815)" stroke="#fff" stroke-width="1.6" stroke-linejoin="round" paint-order="stroke" stroke-opacity=".85">4ème Rocade d'Oran</text>
<text x="1082" y="850" font-size="8.6" fill="#222" text-anchor="middle" transform="rotate(17 1082 850)" stroke="#fff" stroke-width="1.6" stroke-linejoin="round" paint-order="stroke" stroke-opacity=".85">4ème Rocade d'Oran</text>
<text x="938" y="886" font-size="8.6" fill="#222" text-anchor="middle" transform="rotate(-36 938 886)" stroke="#fff" stroke-width="1.6" stroke-linejoin="round" paint-order="stroke" stroke-opacity=".85">4ème Rocade d'Oran</text>
<text x="1512" y="758" font-size="8.6" fill="#222" text-anchor="middle" transform="rotate(-38 1512 758)" stroke="#fff" stroke-width="1.6" stroke-linejoin="round" paint-order="stroke" stroke-opacity=".85">4ème Rocade d'Oran</text>
<text x="1680" y="622" font-size="8.6" fill="#222" text-anchor="middle" transform="rotate(-58 1680 622)" stroke="#fff" stroke-width="1.6" stroke-linejoin="round" paint-order="stroke" stroke-opacity=".85">4ème Rocade d'Oran</text>
<text x="1553" y="737" font-size="8.6" fill="#222" text-anchor="middle" transform="rotate(-50 1553 737)" stroke="#fff" stroke-width="1.6" stroke-linejoin="round" paint-order="stroke" stroke-opacity=".85">Vers Est</text>
<text x="1575" y="925" font-size="8.6" fill="#222" text-anchor="middle" transform="rotate(84 1575 925)" stroke="#fff" stroke-width="1.6" stroke-linejoin="round" paint-order="stroke" stroke-opacity=".85">Pénétrante d'Oran</text>
<text x="1318" y="452" font-size="8.6" fill="#222" text-anchor="middle" transform="rotate(-14 1318 452)" stroke="#fff" stroke-width="1.6" stroke-linejoin="round" paint-order="stroke" stroke-opacity=".85">Route du Port</text>
<text x="1457" y="523" font-size="8.6" fill="#222" text-anchor="middle" stroke="#fff" stroke-width="1.6" stroke-linejoin="round" paint-order="stroke" stroke-opacity=".85">RN-11</text>
<text x="1385" y="403" font-size="8.6" fill="#222" text-anchor="middle" transform="rotate(-28 1385 403)" stroke="#fff" stroke-width="1.6" stroke-linejoin="round" paint-order="stroke" stroke-opacity=".85">نهج 19 مارس</text>
<text x="1130" y="404" font-size="8.6" fill="#222" text-anchor="middle" transform="rotate(-3 1130 404)" stroke="#fff" stroke-width="1.6" stroke-linejoin="round" paint-order="stroke" stroke-opacity=".85">طريق المرسى الكبير</text>
<text x="838" y="213" font-size="8.6" fill="#222" text-anchor="middle" transform="rotate(-18 838 213)" stroke="#fff" stroke-width="1.6" stroke-linejoin="round" paint-order="stroke" stroke-opacity=".85">طريق الكرنيش</text>
<text x="898" y="330" font-size="8.6" fill="#222" text-anchor="middle" transform="rotate(62 898 330)" stroke="#fff" stroke-width="1.6" stroke-linejoin="round" paint-order="stroke" stroke-opacity=".85">رسى الكبير</text>
<text x="1632" y="535" font-size="8.6" fill="#222" text-anchor="middle" transform="rotate(18 1632 535)" stroke="#fff" stroke-width="1.6" stroke-linejoin="round" paint-order="stroke" stroke-opacity=".85">شارع أول نوفمبر</text>
<text x="1896" y="706" font-size="8.6" fill="#222" text-anchor="middle" transform="rotate(25 1896 706)" stroke="#fff" stroke-width="1.6" stroke-linejoin="round" paint-order="stroke" stroke-opacity=".85">سيدي شحمي</text>
<text x="1385" y="830" font-size="8.6" fill="#222" text-anchor="middle" transform="rotate(-32 1385 830)" stroke="#fff" stroke-width="1.6" stroke-linejoin="round" paint-order="stroke" stroke-opacity=".85">شارع باهي عمار</text>
<rect x="1683.0" y="196" width="38" height="16" rx="2.500" fill="#f6e8cf" stroke="#c9a469" stroke-width="1"/>
<text x="1702" y="207.8" font-size="10.500" fill="#333" text-anchor="middle">CW 75</text>
<rect x="1864.5" y="273" width="37" height="16" rx="2.500" fill="#f3d6d2" stroke="#c98b84" stroke-width="1"/>
<text x="1883" y="284.8" font-size="10.500" fill="#333" text-anchor="middle">RN 11</text>
<rect x="1879.0" y="418" width="38" height="16" rx="2.500" fill="#f0f1d2" stroke="#aeb36c" stroke-width="1"/>
<text x="1898" y="429.8" font-size="10.500" fill="#333" text-anchor="middle">CW 74</text>
<rect x="1509.0" y="657" width="38" height="16" rx="2.500" fill="#f0f1d2" stroke="#aeb36c" stroke-width="1"/>
<text x="1528" y="668.8" font-size="10.500" fill="#333" text-anchor="middle">CW 35</text>
<rect x="1513.0" y="798" width="38" height="16" rx="2.500" fill="#f0f1d2" stroke="#aeb36c" stroke-width="1"/>
<text x="1532" y="809.8" font-size="10.500" fill="#333" text-anchor="middle">CW 33</text>
<rect x="1549.5" y="855" width="27" height="16" rx="2.500" fill="#f2c9ce" stroke="#c9707e" stroke-width="1"/>
<text x="1563" y="866.8" font-size="10.500" fill="#333" text-anchor="middle">A62</text>
<rect x="957.0" y="387" width="38" height="16" rx="2.500" fill="#f6e8cf" stroke="#c9a469" stroke-width="1"/>
<text x="976" y="398.8" font-size="10.500" fill="#333" text-anchor="middle">ط و 2</text>
<path d="M1363 507 C1359 497 1351 489 1351 480 A12 12 0 1 1 1375 480 C1375 489 1367 497 1363 507Z M1363 474.500 a5.500 5.500 0 1 0 0.010 0Z" fill="#0a7cf6" fill-rule="evenodd"/>
</svg><div style="position:absolute;left:10px;top:12px;width:34px;height:64px;border:2px solid rgba(0,0,0,.2);border-radius:4px;background-clip:padding-box">
<div style="position:absolute;left:0;top:0;width:30px;height:60px;background:#fff;border-radius:2px"></div>
<div style="position:absolute;left:0;top:29.500px;width:30px;height:1px;background:#ccc"></div>
<div style="position:absolute;left:10px;top:12px;width:11px;height:2.600px;background:#1a1a1a"></div><div style="position:absolute;left:14.200px;top:7.800px;width:2.600px;height:11px;background:#1a1a1a"></div>
<div style="position:absolute;left:10px;top:42.400px;width:11px;height:2.600px;background:#1a1a1a"></div>
</div>
<div style="position:absolute;right:0;bottom:0;height:15px;background:rgba(255,255,255,.8);padding:0 5px 0 5px;font-size:10.500px;line-height:15px;color:#333;white-space:pre"><svg width="10.500" height="7" viewBox="0 0 12 8" style="display:inline-block;vertical-align:baseline;margin-right:3px"><path fill="#4C7BE1" d="M0 0h12v4H0z"/><path fill="#FFD500" d="M0 4h12v3H0z"/><path fill="#E0BC00" d="M0 7h12v1H0z"/></svg><span style="color:#0078a8">Leaflet</span> <span>|</span> © <span style="color:#0078a8">OpenStreetMap</span> contributors</div>
</div>
<div id="hdr">
<svg style="position:absolute;left:48px;top:17px" width="120" height="25" viewBox="48 17 120 25" fill="#0b5794">
<path d="M48 17h10v9h4v-9h10v25h-10v-9h-4v9h-10z"/>
<path fill-rule="evenodd" d="M88 16.8c8 0 13 5 13 12.7s-5 12.7-13 12.7-13-5-13-12.7 5-12.7 13-12.7zm0 8c-1.8 0-2.6 1.8-2.6 4.7s.8 4.7 2.600 4.700 2.600-1.800 2.600-4.700-.8-4.700-2.600-4.700z"/>
<path d="M101.300 17h22.500v7.500h-6.500v17.500h-9.500v-17.500h-6.500z"/>
<path d="M126 17h20.600v7.300h-10.600v2.300h8.600v6.400h-8.600v2.300h10.800v6.700h-20.800z"/>
<path d="M149 17h10v18h9v7h-19z"/>
</svg>
<div class="abs nav" style="left:204px;letter-spacing:.5px">Home page</div>
<div class="abs nav" style="left:336px;letter-spacing:.12px">Rooms</div>
<div class="abs nav" style="left:459px;letter-spacing:.42px">Blog</div>
<div class="abs nav" style="left:558px;letter-spacing:.47px">About Us</div>
<div class="abs nav" style="left:667px;letter-spacing:.28px;color:#f7f3ec">Contact Us</div>
<svg style="position:absolute;left:1780px;top:22px" width="20" height="20" viewBox="0 0 24 24" fill="#2a241d"><path d="M12.87,15.070L10.330,12.560L10.360,12.530C12.100,10.590 13.340,8.360 14.070,6H17V4H10V2H8V4H1V6H12.170C11.500,7.920 10.440,9.750 9,11.350C8.070,10.320 7.300,9.190 6.690,8H4.690C5.420,9.630 6.420,11.170 7.670,12.560L2.580,17.580L4,19L9,14L12.110,17.110L12.870,15.070M18.500,10H16.500L12,22H14L15.120,19H19.870L21,22H23L18.500,10M15.880,17L17.500,12.670L19.120,17H15.880Z"/></svg>
<div class="abs" style="left:1809px;top:24px;font-size:15.6px;color:#2a241d;letter-spacing:.4px">English</div>
</div>
<div id="ftr"></div>
<div class="abs fl" style="left:216px;top:1006.3px;letter-spacing:.37px">Rooms</div>
<div class="abs fl" style="left:216px;top:1039px;letter-spacing:.41px">Blog</div>
<div class="abs fl" style="left:467px;top:1006.3px;letter-spacing:.52px">Home page</div>
<div class="abs fl" style="left:467px;top:1039px;letter-spacing:.33px">About Us</div>
<div class="abs fl" style="left:717px;top:1006.3px;letter-spacing:.31px">Contact Us</div>
<div class="abs fl" style="left:717px;top:1039px;letter-spacing:.51px">Terms and condition</div>
<div class="abs fl" style="left:968px;top:1006.3px;letter-spacing:.13px">Privacy Policy</div>
<div class="abs fl" style="left:968px;top:1039px;letter-spacing:.08px">Cokies Policy</div>
<div class="abs" style="left:216px;top:1077.9px;font-size:13.4px;color:#efebe4;letter-spacing:.1px">© CopyRight Azguer 2023,</div>
<svg class="ic" style="left:1314px" viewBox="0 0 24 24"><path d="M5,3H19A2,2 0 0,1 21,5V19A2,2 0 0,1 19,21H5A2,2 0 0,1 3,19V5A2,2 0 0,1 5,3M18,5H15.500A3.500,3.500 0 0,0 12,8.500V11H10V14H12V21H15V14H18V11H15V9A1,1 0 0,1 16,8H18V5Z"/></svg>
<svg class="ic" style="left:1356px" viewBox="0 0 24 24"><path d="M19 3A2 2 0 0 1 21 5V19A2 2 0 0 1 19 21H5A2 2 0 0 1 3 19V5A2 2 0 0 1 5 3H19M18.500 18.500V13.200A3.260 3.260 0 0 0 15.240 9.940C14.390 9.940 13.400 10.460 12.920 11.240V10.130H10.130V18.500H12.920V13.570C12.920 12.800 13.540 12.170 14.310 12.170A1.400 1.400 0 0 1 15.710 13.570V18.500H18.500M6.880 8.560A1.680 1.680 0 0 0 8.560 6.880C8.560 5.950 7.810 5.190 6.880 5.190A1.690 1.690 0 0 0 5.190 6.880C5.190 7.810 5.950 8.560 6.880 8.560M8.270 18.500V10.130H5.500V18.500H8.270Z"/></svg>
<svg class="ic" style="left:1398px" viewBox="0 0 24 24"><path d="M9.040,21.540C10,21.830 10.970,22 12,22A10,10 0 0,0 22,12A10,10 0 0,0 12,2A10,10 0 0,0 2,12C2,16.250 4.670,19.900 8.440,21.340C8.350,20.560 8.260,19.270 8.440,18.380L9.590,13.440C9.590,13.440 9.300,12.860 9.300,11.940C9.300,10.560 10.160,9.530 11.140,9.530C12,9.530 12.400,10.160 12.400,10.970C12.400,11.830 11.830,13.060 11.540,14.240C11.370,15.220 12.060,16.080 13.060,16.080C14.840,16.080 16.220,14.180 16.220,11.500C16.220,9.100 14.500,7.460 12.030,7.460C9.210,7.460 7.550,9.560 7.550,11.770C7.550,12.630 7.830,13.500 8.290,14.070C8.380,14.130 8.380,14.210 8.350,14.360L8.060,15.450C8.060,15.620 7.950,15.680 7.780,15.560C6.500,15 5.760,13.180 5.760,11.710C5.760,8.550 8,5.680 12.320,5.680C15.760,5.680 18.440,8.150 18.440,11.430C18.440,14.870 16.310,17.630 13.260,17.630C12.290,17.630 11.340,17.110 11,16.500L10.330,18.870C10.100,19.730 9.470,20.880 9.040,21.570V21.540Z"/></svg>
<svg class="ic" style="left:1440px" viewBox="0 0 24 24"><path d="M22.460,6C21.690,6.350 20.860,6.580 20,6.690C20.880,6.160 21.560,5.320 21.880,4.310C21.050,4.810 20.130,5.160 19.160,5.360C18.370,4.500 17.260,4 16,4C13.650,4 11.730,5.920 11.730,8.290C11.730,8.630 11.770,8.960 11.840,9.270C8.280,9.090 5.110,7.380 3,4.790C2.630,5.420 2.420,6.160 2.420,6.940C2.420,8.430 3.170,9.750 4.330,10.500C3.620,10.500 2.960,10.300 2.380,10C2.380,10 2.380,10 2.380,10.030C2.380,12.110 3.860,13.850 5.820,14.240C5.460,14.340 5.080,14.390 4.690,14.390C4.420,14.390 4.150,14.360 3.890,14.310C4.430,16 6,17.260 7.890,17.290C6.430,18.450 4.580,19.130 2.560,19.130C2.220,19.130 1.880,19.110 1.540,19.070C3.440,20.290 5.700,21 8.120,21C16,21 20.330,14.460 20.330,8.790C20.330,8.600 20.330,8.420 20.320,8.230C21.160,7.630 21.880,6.870 22.460,6Z"/></svg>
<svg class="ic" style="left:1482px" viewBox="0 0 24 24"><path d="M10,15L15.190,12L10,9V15M21.560,7.170C21.690,7.640 21.780,8.270 21.840,9.070C21.910,9.870 21.940,10.560 21.940,11.160L22,12C22,14.190 21.840,15.800 21.560,16.830C21.310,17.730 20.730,18.310 19.830,18.560C19.360,18.690 18.500,18.780 17.180,18.840C15.880,18.910 14.690,18.940 13.590,18.940L12,19C7.810,19 5.200,18.840 4.170,18.560C3.270,18.310 2.690,17.730 2.440,16.830C2.310,16.360 2.220,15.730 2.160,14.930C2.090,14.130 2.060,13.440 2.060,12.840L2,12C2,9.810 2.160,8.200 2.440,7.170C2.690,6.270 3.270,5.690 4.170,5.440C4.640,5.310 5.500,5.220 6.820,5.160C8.120,5.090 9.310,5.060 10.410,5.060L12,5C16.190,5 18.800,5.160 19.830,5.440C20.730,5.690 21.310,6.270 21.560,7.170Z"/></svg>
<svg class="ic" style="left:1524px" viewBox="0 0 24 24"><path d="M22,12.140C22,10.920 21,9.960 19.810,9.960C19.220,9.960 18.680,10.190 18.290,10.570C16.790,9.500 14.720,8.790 12.430,8.700L13.430,4L16.700,4.710C16.730,5.530 17.410,6.190 18.250,6.190C19.110,6.190 19.810,5.500 19.810,4.630C19.810,3.770 19.110,3.080 18.250,3.080C17.650,3.080 17.110,3.430 16.860,3.950L13.220,3.170C13.110,3.150 13,3.170 12.930,3.230C12.840,3.290 12.780,3.380 12.760,3.500L11.640,8.700C9.310,8.770 7.210,9.470 5.690,10.560C5.300,10.190 4.770,9.960 4.180,9.960C2.970,9.960 2,10.940 2,12.140C2,13.040 2.540,13.800 3.300,14.140C3.260,14.360 3.250,14.580 3.250,14.800C3.250,18.160 7.160,20.880 11.970,20.880C16.790,20.880 20.700,18.160 20.700,14.800C20.700,14.580 20.680,14.360 20.650,14.150C21.440,13.810 22,13.040 22,12.140M7,13.700C7,12.840 7.680,12.140 8.540,12.140C9.400,12.140 10.100,12.840 10.100,13.700A1.560,1.560 0 0,1 8.540,15.260C7.680,15.260 7,14.560 7,13.700M15.710,17.840C14.630,18.920 12.590,19 12,19C11.390,19 9.350,18.900 8.290,17.840C8.130,17.680 8.130,17.430 8.290,17.270C8.450,17.110 8.700,17.110 8.860,17.270C9.540,17.950 10.970,18.180 12,18.180C13.030,18.180 14.470,17.950 15.140,17.270C15.300,17.110 15.550,17.110 15.710,17.270C15.850,17.430 15.850,17.680 15.710,17.840M15.420,15.260C14.560,15.260 13.870,14.560 13.870,13.700C13.870,12.840 14.560,12.140 15.420,12.140C16.280,12.140 16.970,12.840 16.970,13.700A1.560,1.560 0 0,1 15.420,15.260Z"/></svg>
<svg class="ic" style="left:1566px" viewBox="0 0 24 24"><path d="M7.800,2H16.200C19.400,2 22,4.600 22,7.800V16.200A5.800,5.800 0 0,1 16.200,22H7.800C4.600,22 2,19.400 2,16.200V7.800A5.800,5.800 0 0,1 7.800,2M7.600,4A3.600,3.600 0 0,0 4,7.600V16.400C4,18.390 5.610,20 7.600,20H16.400A3.600,3.600 0 0,0 20,16.400V7.600C20,5.610 18.390,4 16.400,4H7.600M17.250,5.500A1.250,1.250 0 0,1 18.500,6.750A1.250,1.250 0 0,1 17.250,8A1.250,1.250 0 0,1 16,6.750A1.250,1.250 0 0,1 17.250,5.500M12,7A5,5 0 0,1 17,12A5,5 0 0,1 12,17A5,5 0 0,1 7,12A5,5 0 0,1 12,7M12,9A3,3 0 0,0 9,12A3,3 0 0,0 12,15A3,3 0 0,0 15,12A3,3 0 0,0 12,9Z"/></svg>
</body></html>
